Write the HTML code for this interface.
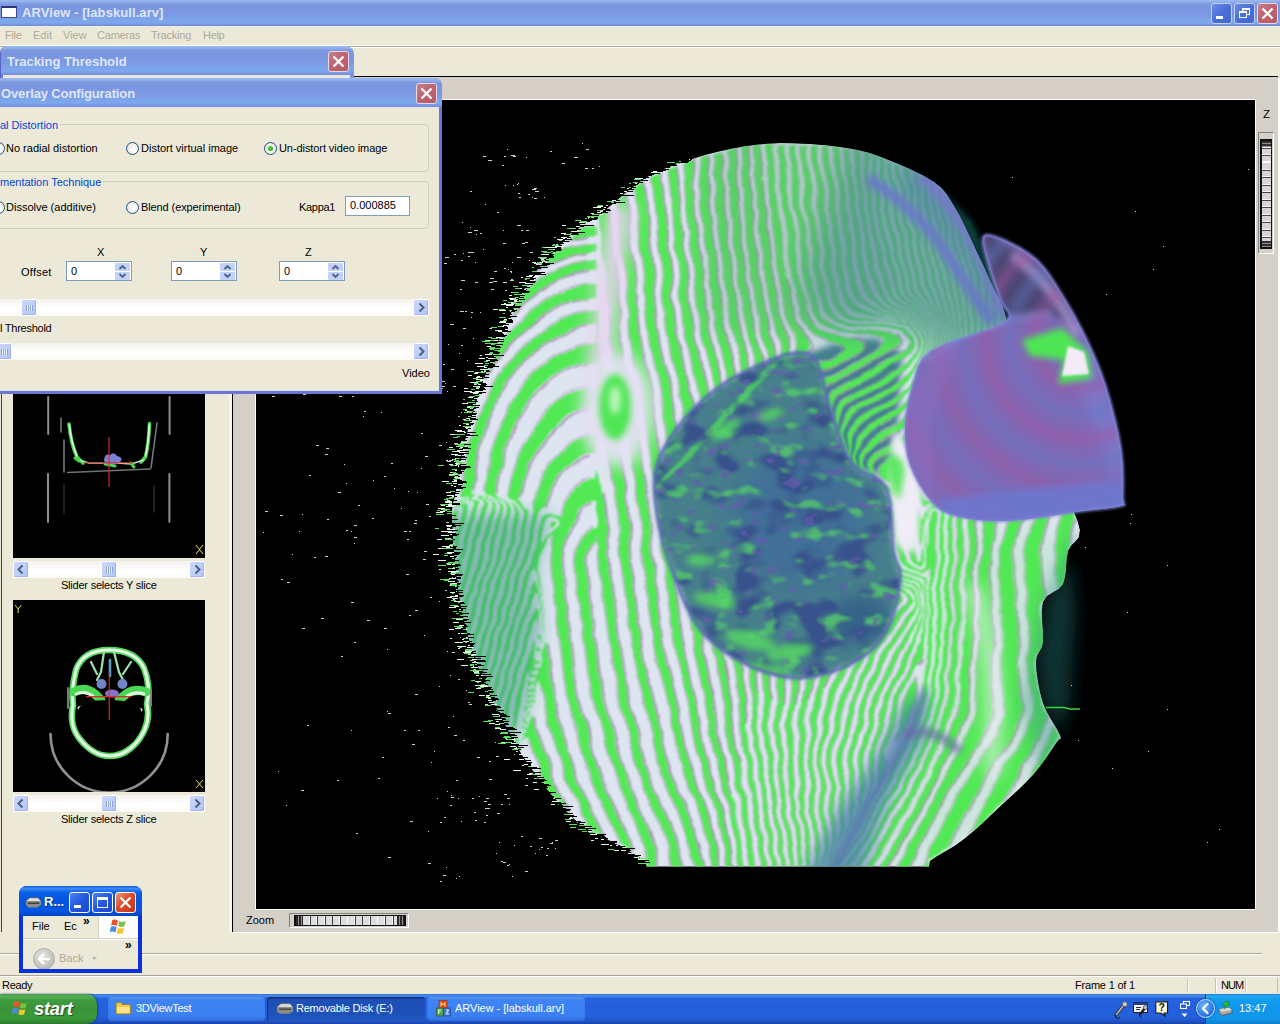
<!DOCTYPE html>
<html>
<head>
<meta charset="utf-8">
<title>ARView - [labskull.arv]</title>
<style>
*{box-sizing:border-box;margin:0;padding:0}
html,body{width:1280px;height:1024px;overflow:hidden;background:#ece9d8}
body{position:relative;font-family:"Liberation Sans",sans-serif;font-size:11px;color:#000}
.a{position:absolute}
.t{position:absolute;white-space:nowrap;line-height:13px;font-size:11px}
/* inactive XP title bars */
.ititle{background:linear-gradient(180deg,#9bb9f0 0%,#90aeea 8%,#7f9be0 14%,#7a96df 24%,#7b98e2 55%,#7ca2e8 72%,#7da9ec 84%,#7c9fe9 91%,#7788dc 100%)}
.ttl{position:absolute;white-space:nowrap;font-weight:bold;font-size:13px;line-height:16px;color:#dfe7f8}
.xbtn{position:absolute;width:21px;height:21px;border:1px solid #e8d8e4;border-radius:3px;background:linear-gradient(135deg,#c8808c 0%,#bd6470 45%,#b45c68 100%)}
.bbtn{position:absolute;width:21px;height:21px;border:1px solid #c3d0f2;border-radius:3px;background:linear-gradient(135deg,#6c8ce6 0%,#4a6ed8 50%,#4468d0 100%)}
.sb{position:absolute;height:17px;background:linear-gradient(180deg,#f3f1ec 0%,#fdfdfb 45%,#ffffff 60%,#fbfaf6 100%)}
.sbtn{position:absolute;width:16px;height:17px;border:1px solid #fff;border-radius:2px;background:linear-gradient(135deg,#cad8fa 0%,#bccdf8 60%,#b2c4f2 100%);box-shadow:inset -1px -1px 0 #9fb3e8}
.grp{position:absolute;border:1px solid #d0d0bf;border-radius:4px}
.radio{position:absolute;width:13px;height:13px;border-radius:50%;border:1px solid #1c5180;background:radial-gradient(circle at 65% 65%,#ffffff 0%,#f3f3ee 45%,#dcdcd4 100%)}
.edit{position:absolute;border:1px solid #7f9db9;background:#fff}
.spn{position:absolute;width:15px;height:8px;background:#c3d2f8;border-radius:1px}
</style>
</head>
<body>

<!-- ===== main title bar ===== -->
<div class="a ititle" style="left:0;top:0;width:1280px;height:26px"></div>
<div class="a" style="left:1px;top:6px;width:16px;height:12px;background:#fff;border:1px solid #3c4c8c;border-top:2px solid #28387c"></div>
<div class="ttl" style="left:22px;top:5px;letter-spacing:0.08px">ARView - [labskull.arv]</div>
<div class="bbtn" style="left:1211px;top:3px"><div class="a" style="left:4px;top:12px;width:7px;height:3px;background:#fff"></div></div>
<div class="bbtn" style="left:1234px;top:3px">
  <div class="a" style="left:7px;top:4px;width:8px;height:7px;border:1px solid #fff;border-top:2px solid #fff"></div>
  <div class="a" style="left:4px;top:7px;width:8px;height:7px;border:1px solid #fff;border-top:2px solid #fff;background:#4a6ed8"></div>
</div>
<div class="xbtn" style="left:1257px;top:3px">
  <svg class="a" style="left:0;top:0" width="19" height="19" viewBox="0 0 19 19"><path d="M4.5 4.5 L14.5 14.5 M14.5 4.5 L4.5 14.5" stroke="#fff" stroke-width="2.3" fill="none"/></svg>
</div>

<!-- ===== menu bar ===== -->
<div class="a" style="left:0;top:26px;width:1280px;height:20px;background:#ece9d8"></div><div class="a" style="left:0;top:26px;width:1280px;height:1px;background:#e9f0dc"></div>
<div class="t" style="left:5px;top:29px;color:#aca899;letter-spacing:-0.3px">File</div>
<div class="t" style="left:33px;top:29px;color:#aca899">Edit</div>
<div class="t" style="left:63px;top:29px;color:#aca899">View</div>
<div class="t" style="left:97px;top:29px;color:#aca899;letter-spacing:-0.2px">Cameras</div>
<div class="t" style="left:151px;top:29px;color:#aca899;letter-spacing:-0.2px">Tracking</div>
<div class="t" style="left:203px;top:29px;color:#aca899;letter-spacing:-0.3px">Help</div>
<div class="a" style="left:0;top:45px;width:1280px;height:1px;background:#fbfaf4"></div><div class="a" style="left:0;top:46px;width:1280px;height:1px;background:#aca899"></div>
<div class="a" style="left:0;top:47px;width:1280px;height:1px;background:#fff"></div>

<!-- toolbar band + MDI frame -->
<div class="a" style="left:0;top:76px;width:1278px;height:1px;background:#000"></div>
<div class="a" id="mdi" style="left:233px;top:77px;width:1047px;height:855px;background:#d4d0c8"></div>
<div class="a" style="left:1px;top:78px;width:1px;height:854px;background:#404040"></div>
<div class="a" style="left:229px;top:78px;width:3px;height:854px;background:#f7f5ec"></div><div class="a" style="left:232px;top:77px;width:1px;height:855px;background:#000"></div><div class="a" style="left:255px;top:99px;width:1001px;height:811px;background:#fff"></div>

<!-- SKULL-CANVAS-PLACEHOLDER -->
<svg class="a" style="left:256px;top:100px" width="999" height="809" viewBox="256 100 999 809">
<defs>
<clipPath id="cSk0"><rect x="257" y="100" width="998" height="766.5"/></clipPath>
<clipPath id="cSk" clip-path="url(#cSk0)"><path d="M780.0,143.0 794.7,143.2 810.6,144.0 826.1,145.3 840.0,147.0 851.3,148.7 860.9,150.7 870.4,153.3 881.0,157.0 894.2,162.2 908.8,168.5 922.7,175.3 934.0,182.0 941.5,188.1 946.6,194.2 950.6,200.6 955.0,208.0 959.9,216.6 964.7,226.2 969.4,236.1 974.0,246.0 978.7,255.9 983.4,266.1 987.9,275.9 992.0,285.0 995.7,292.6 999.0,299.1 1002.1,305.8 1005.0,314.0 1006.9,322.6 1008.0,331.3 1010.1,342.9 1015.0,360.0 1024.4,386.4 1036.9,419.8 1049.7,453.2 1060.0,480.0 1067.5,498.1 1073.6,511.2 1077.8,521.2 1080.0,530.0 1079.1,537.0 1075.6,541.6 1071.3,545.6 1068.0,551.0 1066.6,558.8 1066.0,567.7 1065.1,576.5 1063.0,584.0 1058.6,589.0 1052.7,592.6 1046.9,596.3 1043.0,602.0 1041.8,610.9 1042.2,621.9 1043.0,632.9 1043.0,642.0 1041.4,647.9 1039.1,651.9 1036.9,656.0 1036.0,662.0 1036.5,671.0 1038.0,681.8 1040.2,692.9 1043.0,703.0 1047.0,712.2 1052.1,721.1 1056.9,729.0 1060.0,735.0 1061.1,737.9 1061.1,738.4 1059.7,739.0 1057.0,742.0 1052.6,748.5 1046.6,757.2 1039.8,766.5 1033.0,775.0 1026.4,782.1 1019.6,788.8 1012.2,795.5 1004.0,803.0 994.4,812.0 983.8,821.9 973.0,831.7 963.0,840.0 953.9,846.4 945.2,851.6 937.1,856.3 930.0,861.0 929.2,866.3 932.9,871.8 930.2,876.6 910.0,880.0 860.4,881.8 790.3,882.4 720.0,881.8 670.0,880.0 648.7,876.5 644.3,871.6 646.5,866.1 645.0,861.0 638.3,856.8 631.5,852.8 624.2,848.7 616.0,844.0 606.7,839.2 596.5,834.2 585.8,828.2 575.0,820.0 563.7,808.7 551.8,795.1 540.2,780.7 530.0,767.0 521.5,754.4 514.2,742.0 507.5,729.6 501.0,717.0 494.5,704.2 488.2,691.2 482.4,678.0 477.0,664.0 472.0,649.6 467.5,634.8 463.5,619.1 460.0,602.0 457.1,581.7 454.7,559.0 452.9,537.3 452.0,520.0 452.0,509.3 452.9,503.0 454.4,497.7 456.0,490.0 457.7,479.0 459.8,466.4 462.1,453.2 465.0,440.0 468.4,427.0 472.3,413.7 476.6,400.3 481.0,387.0 485.7,373.5 490.7,359.8 495.8,346.4 501.0,334.0 506.2,322.6 511.5,312.0 516.8,302.1 522.0,293.0 526.8,285.0 531.2,278.0 536.1,271.2 542.0,264.0 549.4,255.7 557.9,246.9 566.7,238.4 575.0,231.0 582.2,225.4 589.0,221.0 596.0,216.6 604.0,211.0 613.4,203.3 623.8,194.3 634.5,185.4 645.0,178.0 655.2,172.5 665.3,168.2 675.5,164.5 686.0,161.0 696.6,157.5 707.4,154.3 718.5,151.5 730.0,149.0 741.8,146.8 754.0,145.0 766.7,143.7Z"/></clipPath>
<clipPath id="cSo"><path d="M657.6,463.0 662.1,452.2 668.3,441.1 675.8,430.1 684.1,419.7 692.8,410.0 702.1,401.1 712.1,392.6 722.8,384.8 734.0,377.8 745.5,371.7 758.2,365.7 772.1,359.6 786.0,354.8 798.7,352.5 808.8,354.0 815.7,360.5 820.3,371.2 823.6,384.3 826.4,397.8 830.0,410.0 834.0,421.2 837.7,432.8 841.6,444.0 845.9,454.3 851.0,463.0 857.6,469.1 865.3,473.1 873.3,476.4 880.6,480.7 886.0,487.7 889.2,498.5 890.8,511.9 891.5,526.4 892.0,540.0 893.0,551.0 894.7,558.5 896.8,563.5 898.7,567.7 899.9,572.4 900.0,579.0 898.9,588.3 896.9,599.4 894.1,611.1 890.5,622.4 886.0,632.0 880.6,640.0 874.4,647.0 867.3,653.2 859.5,658.7 851.0,663.6 841.5,668.0 831.1,671.9 820.0,674.9 808.9,677.0 798.0,677.7 787.4,677.0 776.6,675.1 766.0,672.1 755.6,668.2 745.5,663.6 735.6,658.3 725.9,652.2 716.5,645.3 707.7,637.4 699.8,628.4 692.8,617.9 686.6,605.9 681.1,593.2 676.1,580.5 671.7,568.6 667.8,557.6 664.4,547.1 661.6,536.7 659.3,526.4 657.6,516.0 656.1,505.4 654.9,494.8 654.4,484.2 655.1,473.6Z"/></clipPath>
<clipPath id="cPu"><path d="M983.0,237.0 986.0,234.8 991.0,235.2 997.2,237.2 1004.0,240.0 1011.6,243.5 1020.3,248.1 1029.1,253.7 1037.0,260.0 1043.6,267.1 1049.5,274.9 1055.1,283.6 1061.0,293.0 1067.3,303.3 1073.8,314.5 1080.1,326.2 1086.0,338.0 1091.5,349.7 1096.6,361.4 1101.5,373.7 1106.0,387.0 1110.4,401.9 1114.6,418.0 1118.3,434.1 1121.0,449.0 1122.5,463.1 1123.1,476.9 1123.1,488.9 1123.0,498.0 1123.6,503.0 1124.5,504.8 1124.1,505.2 1121.0,506.0 1114.9,507.3 1106.6,508.4 1096.0,509.5 1083.0,511.0 1066.1,513.5 1045.8,516.6 1025.1,519.4 1007.0,521.0 991.9,521.0 978.3,520.1 966.3,518.3 956.0,516.0 947.8,513.4 941.6,510.4 936.4,506.5 931.0,501.0 925.1,493.5 919.2,484.4 914.0,474.6 910.0,465.0 907.3,455.8 905.7,446.4 905.0,436.9 905.0,427.0 905.9,416.4 907.6,405.2 910.0,394.2 913.0,384.0 915.5,375.0 917.9,366.6 922.3,358.7 931.0,351.0 947.4,343.3 969.4,335.8 990.7,328.7 1005.0,322.0 1009.4,316.2 1007.8,311.1 1003.5,305.9 1000.0,300.0 997.8,293.1 995.1,285.7 992.4,277.9 990.0,270.0 987.4,261.1 984.6,251.4 982.7,242.8Z"/></clipPath>
<filter id="b1" filterUnits="userSpaceOnUse" x="256" y="100" width="999" height="809"><feGaussianBlur stdDeviation="0.9"/></filter>
<filter id="b3" filterUnits="userSpaceOnUse" x="256" y="100" width="999" height="809"><feGaussianBlur stdDeviation="3"/></filter>
<filter id="b8" filterUnits="userSpaceOnUse" x="256" y="100" width="999" height="809"><feGaussianBlur stdDeviation="8"/></filter>
<filter id="b16" filterUnits="userSpaceOnUse" x="256" y="100" width="999" height="809"><feGaussianBlur stdDeviation="16"/></filter>
<filter id="mG" filterUnits="userSpaceOnUse" x="640" y="340" width="280" height="350" color-interpolation-filters="sRGB"><feTurbulence type="fractalNoise" baseFrequency="0.045 0.07" numOctaves="2" seed="11"/><feColorMatrix type="matrix" values="0 0 0 0 0.33  0 0 0 0 0.80  0 0 0 0 0.42  6 0 0 0 -3.55"/><feGaussianBlur stdDeviation="0.8"/></filter>
<filter id="mB" filterUnits="userSpaceOnUse" x="640" y="340" width="280" height="350" color-interpolation-filters="sRGB"><feTurbulence type="fractalNoise" baseFrequency="0.03 0.04" numOctaves="2" seed="5"/><feColorMatrix type="matrix" values="0 0 0 0 0.22  0 0 0 0 0.32  0 0 0 0 0.55  0 6 0 0 -3.0"/><feGaussianBlur stdDeviation="1.2"/></filter>
<filter id="mP" filterUnits="userSpaceOnUse" x="640" y="340" width="280" height="350" color-interpolation-filters="sRGB"><feTurbulence type="fractalNoise" baseFrequency="0.06 0.09" numOctaves="2" seed="23"/><feColorMatrix type="matrix" values="0 0 0 0 0.40  0 0 0 0 0.36  0 0 0 0 0.68  0 0 8 0 -5.0"/><feGaussianBlur stdDeviation="0.7"/></filter>
<filter id="wob" filterUnits="userSpaceOnUse" x="440" y="130" width="700" height="750" color-interpolation-filters="sRGB"><feTurbulence type="fractalNoise" baseFrequency="0.022 0.035" numOctaves="2" seed="4" result="t"/><feDisplacementMap in="SourceGraphic" in2="t" scale="9" xChannelSelector="R" yChannelSelector="G"/><feGaussianBlur stdDeviation="1.3"/></filter>
</defs>
<rect x="256" y="100" width="999" height="809" fill="#000"/>
<path filter="url(#b3)" fill="#0f4542" d="M930,178 L972,222 L990,262 L1008,312 L1000,316 L975,250 L950,205Z"/>
<path filter="url(#b8)" fill="#0a3330" d="M1045,600 L1070,560 L1076,610 L1070,700 L1060,735 L1043,703 L1036,662Z"/>
<g clip-path="url(#cSk)">
<path d="M780.0,143.0 794.7,143.2 810.6,144.0 826.1,145.3 840.0,147.0 851.3,148.7 860.9,150.7 870.4,153.3 881.0,157.0 894.2,162.2 908.8,168.5 922.7,175.3 934.0,182.0 941.5,188.1 946.6,194.2 950.6,200.6 955.0,208.0 959.9,216.6 964.7,226.2 969.4,236.1 974.0,246.0 978.7,255.9 983.4,266.1 987.9,275.9 992.0,285.0 995.7,292.6 999.0,299.1 1002.1,305.8 1005.0,314.0 1006.9,322.6 1008.0,331.3 1010.1,342.9 1015.0,360.0 1024.4,386.4 1036.9,419.8 1049.7,453.2 1060.0,480.0 1067.5,498.1 1073.6,511.2 1077.8,521.2 1080.0,530.0 1079.1,537.0 1075.6,541.6 1071.3,545.6 1068.0,551.0 1066.6,558.8 1066.0,567.7 1065.1,576.5 1063.0,584.0 1058.6,589.0 1052.7,592.6 1046.9,596.3 1043.0,602.0 1041.8,610.9 1042.2,621.9 1043.0,632.9 1043.0,642.0 1041.4,647.9 1039.1,651.9 1036.9,656.0 1036.0,662.0 1036.5,671.0 1038.0,681.8 1040.2,692.9 1043.0,703.0 1047.0,712.2 1052.1,721.1 1056.9,729.0 1060.0,735.0 1061.1,737.9 1061.1,738.4 1059.7,739.0 1057.0,742.0 1052.6,748.5 1046.6,757.2 1039.8,766.5 1033.0,775.0 1026.4,782.1 1019.6,788.8 1012.2,795.5 1004.0,803.0 994.4,812.0 983.8,821.9 973.0,831.7 963.0,840.0 953.9,846.4 945.2,851.6 937.1,856.3 930.0,861.0 929.2,866.3 932.9,871.8 930.2,876.6 910.0,880.0 860.4,881.8 790.3,882.4 720.0,881.8 670.0,880.0 648.7,876.5 644.3,871.6 646.5,866.1 645.0,861.0 638.3,856.8 631.5,852.8 624.2,848.7 616.0,844.0 606.7,839.2 596.5,834.2 585.8,828.2 575.0,820.0 563.7,808.7 551.8,795.1 540.2,780.7 530.0,767.0 521.5,754.4 514.2,742.0 507.5,729.6 501.0,717.0 494.5,704.2 488.2,691.2 482.4,678.0 477.0,664.0 472.0,649.6 467.5,634.8 463.5,619.1 460.0,602.0 457.1,581.7 454.7,559.0 452.9,537.3 452.0,520.0 452.0,509.3 452.9,503.0 454.4,497.7 456.0,490.0 457.7,479.0 459.8,466.4 462.1,453.2 465.0,440.0 468.4,427.0 472.3,413.7 476.6,400.3 481.0,387.0 485.7,373.5 490.7,359.8 495.8,346.4 501.0,334.0 506.2,322.6 511.5,312.0 516.8,302.1 522.0,293.0 526.8,285.0 531.2,278.0 536.1,271.2 542.0,264.0 549.4,255.7 557.9,246.9 566.7,238.4 575.0,231.0 582.2,225.4 589.0,221.0 596.0,216.6 604.0,211.0 613.4,203.3 623.8,194.3 634.5,185.4 645.0,178.0 655.2,172.5 665.3,168.2 675.5,164.5 686.0,161.0 696.6,157.5 707.4,154.3 718.5,151.5 730.0,149.0 741.8,146.8 754.0,145.0 766.7,143.7Z" fill="#dde6f0"/>
<path filter="url(#b3)" fill="#41808c" d="M806,354 L838,342 L875,338 L902,352 L899,400 L897,440 L892,476 L851,468 L830,415Z"/>
<g filter="url(#wob)">
<path fill="#52e955" d="M758.0,146.0 759.7,144.5 763.6,200.0 769.3,242.0 774.1,287.0 777.2,305.0 786.9,345.5 789.3,378.5 800.2,444.5 804.4,506.0 813.5,561.5 816.3,566.0 822.5,570.9 831.5,575.4 848.0,581.9 861.5,588.2 871.8,594.5 875.7,599.0 875.6,600.5 865.3,612.5 856.7,624.5 838.4,656.0 832.4,668.0 826.7,681.5 822.1,695.0 818.9,707.0 814.7,731.0 813.4,753.5 813.4,777.5 814.4,803.0 819.7,852.5 818.5,860.0 816.9,864.5 815.7,866.0 815.7,867.5 814.2,869.0 815.6,870.5 815.0,871.3 813.5,870.4 812.8,869.0 815.4,861.5 815.7,855.5 810.2,804.5 808.6,764.0 809.4,732.5 810.5,722.0 813.1,707.0 816.5,693.5 820.8,680.0 825.5,668.0 831.2,656.0 838.8,642.5 852.3,621.5 861.3,609.5 869.1,600.5 869.2,599.0 865.4,594.5 855.5,588.4 845.0,583.5 827.0,576.9 816.9,572.0 811.1,567.5 808.7,564.5 807.3,561.5 798.3,506.0 795.6,459.5 793.1,435.5 784.8,384.5 780.0,345.5 771.4,309.5 768.3,293.0 762.9,245.0 757.8,207.5 753.5,146.0 758.0,146.0Z M766.2,144.5 772.3,144.5 775.9,197.0 782.2,243.5 786.2,281.0 790.5,305.0 793.7,317.0 797.7,327.5 801.5,334.3 809.4,344.0 811.1,347.0 810.7,350.0 804.5,357.6 801.5,363.9 800.1,371.0 800.0,380.0 802.5,398.0 810.7,440.0 817.1,506.0 826.5,561.5 829.8,566.0 834.5,569.4 878.0,589.9 885.2,594.5 889.1,599.0 889.0,600.5 878.7,612.5 870.0,624.5 854.8,650.0 845.9,668.0 838.6,684.5 834.2,696.5 829.8,711.5 826.9,725.0 825.1,737.0 823.7,755.0 823.2,773.0 823.7,803.0 827.9,845.0 827.2,849.5 824.4,857.0 823.2,858.5 824.5,860.0 824.0,860.8 822.5,859.6 821.7,860.0 821.8,861.5 821.0,862.1 820.3,861.5 823.0,855.5 824.1,848.0 819.3,801.5 818.8,762.5 820.4,734.0 823.9,713.0 828.0,698.0 832.7,684.5 838.4,671.0 846.5,654.7 855.4,638.0 862.8,626.0 872.0,613.1 882.7,600.5 882.8,599.0 878.9,594.5 869.0,588.4 830.0,570.7 823.6,566.0 820.5,561.5 811.0,504.5 806.3,443.0 795.2,381.5 794.5,368.0 795.9,351.5 795.7,345.5 794.3,339.5 786.1,314.0 783.0,300.5 779.9,282.5 776.0,246.7 769.6,198.5 766.2,144.5Z M778.5,144.5 784.4,144.5 787.5,192.5 794.1,240.5 798.1,276.5 802.4,300.5 806.9,315.5 809.2,320.0 812.5,324.5 816.5,328.1 821.0,330.8 828.5,333.7 834.5,335.3 856.4,339.5 860.4,341.0 862.6,342.5 863.6,344.0 863.1,347.0 860.8,350.0 850.9,357.5 839.0,363.7 822.5,369.2 816.5,372.2 812.6,377.0 811.0,383.0 810.8,390.5 811.6,399.5 818.2,434.0 828.1,498.5 838.6,560.0 841.1,564.5 848.0,569.6 858.5,575.1 891.1,590.0 898.2,594.5 902.1,599.0 901.9,600.5 892.8,611.0 881.8,626.0 865.5,653.0 857.9,668.0 851.8,681.5 846.1,696.5 841.4,711.5 838.4,723.5 835.6,740.0 834.0,755.0 832.9,774.5 833.1,800.0 836.3,836.0 835.0,842.0 830.0,851.7 829.2,851.0 829.5,849.5 831.9,843.5 832.4,839.0 828.5,798.5 828.5,769.7 831.0,737.0 832.9,725.0 835.7,713.0 840.1,698.0 844.5,686.0 852.3,668.0 859.8,653.0 874.8,627.5 885.5,612.6 895.8,600.5 895.9,599.0 892.0,594.5 884.0,589.4 852.5,575.0 841.0,569.0 835.2,564.5 832.8,560.0 823.5,504.5 815.3,438.5 807.0,396.5 805.9,387.5 805.7,380.0 807.5,371.0 809.2,368.0 812.0,365.3 816.5,362.9 829.8,359.0 836.0,356.2 840.7,353.0 843.3,350.0 843.8,348.5 843.6,347.0 842.5,345.5 840.2,344.0 819.5,336.9 810.9,332.0 807.5,328.8 804.3,324.5 799.6,314.0 795.4,297.5 792.4,281.0 787.0,234.5 782.7,204.5 780.4,180.5 778.5,144.5Z M790.4,144.5 796.1,144.5 798.5,184.9 804.9,231.5 809.9,275.0 814.6,299.0 817.3,308.0 820.0,314.0 823.3,318.5 826.7,321.5 830.0,323.6 836.0,326.1 843.5,328.0 852.5,329.2 881.0,331.6 890.0,333.3 897.5,336.5 899.0,338.0 900.1,341.0 899.0,343.9 897.6,345.5 888.9,351.5 854.0,371.2 831.5,381.3 827.0,383.9 822.7,389.0 820.8,396.5 820.7,404.0 822.0,416.0 829.5,462.5 832.5,476.0 842.3,512.0 846.8,534.5 851.2,561.5 854.9,566.0 863.0,571.2 897.5,586.9 906.3,591.5 911.0,594.9 913.7,599.0 913.6,600.5 912.5,602.3 894.0,626.0 879.1,650.0 865.4,677.0 859.7,690.5 854.9,704.0 850.6,719.0 847.6,732.5 844.7,752.0 843.3,767.0 842.6,794.0 844.8,827.0 842.6,834.5 837.5,844.0 836.7,843.5 837.0,842.0 839.3,837.5 840.9,830.0 838.0,795.5 838.0,780.5 838.9,762.5 842.0,735.7 844.7,722.0 847.9,710.0 856.7,684.5 864.1,668.0 871.9,653.0 888.2,626.0 897.0,614.0 908.5,600.5 908.6,599.0 904.7,594.5 897.5,589.9 866.0,575.5 854.0,569.3 847.7,564.5 845.1,560.0 839.5,525.5 826.7,464.0 817.6,410.0 816.2,398.0 816.4,389.0 818.3,383.0 822.5,378.3 827.9,375.5 846.5,368.2 863.0,359.1 872.7,353.0 880.6,347.0 883.3,344.0 883.9,341.0 883.1,339.5 881.1,338.0 875.0,336.0 839.0,331.1 828.5,328.2 824.0,326.0 819.5,322.7 815.8,318.5 813.2,314.0 808.4,299.0 803.8,275.0 799.0,233.0 793.3,192.5 790.4,144.5Z M801.8,144.5 807.3,144.5 810.0,186.5 816.6,233.0 820.8,269.0 825.2,293.0 828.2,303.5 831.0,309.5 834.5,314.0 838.2,317.0 842.0,319.1 849.5,321.6 860.0,323.4 890.0,325.8 902.0,328.6 908.0,331.4 912.5,334.9 914.6,338.0 915.5,342.5 914.5,347.0 912.9,350.0 909.5,354.0 905.0,357.6 837.5,393.9 834.5,396.5 832.3,399.5 829.8,407.0 829.5,419.0 831.0,435.5 835.5,464.0 839.9,479.0 851.1,506.0 854.2,515.0 858.6,534.5 862.9,561.5 867.5,566.6 876.5,572.1 912.5,588.4 916.1,591.5 919.0,599.0 917.2,606.5 914.1,614.0 896.9,639.5 881.8,666.5 872.9,686.0 865.4,707.0 858.2,734.0 853.8,764.0 852.6,785.0 853.5,810.5 852.8,819.5 849.7,828.5 845.0,836.6 844.2,836.0 844.5,834.5 848.3,827.0 849.6,819.5 847.8,789.5 849.4,759.5 853.7,731.0 859.6,708.5 868.8,683.0 879.5,660.5 894.2,635.0 914.0,607.0 915.7,603.5 916.7,599.0 915.1,594.5 911.0,590.7 903.5,586.7 869.0,571.0 861.2,566.0 857.5,561.5 852.9,533.0 849.8,518.0 845.5,503.0 837.0,479.0 832.7,462.5 826.7,423.5 825.5,410.0 825.7,402.5 827.7,395.0 830.0,391.6 833.0,389.0 855.5,377.8 901.5,353.0 905.7,350.0 908.5,347.0 910.0,344.0 910.3,341.0 909.3,338.0 906.5,334.8 901.7,332.0 896.0,330.0 887.0,328.3 857.0,326.1 848.0,324.8 840.8,323.0 831.7,318.5 828.4,315.5 825.3,311.0 822.1,303.5 819.2,293.0 814.9,269.0 810.7,233.0 804.3,186.5 801.8,144.5Z M812.8,144.5 815.0,144.5 816.5,146.0 818.2,146.0 820.5,182.0 827.2,228.5 831.4,264.5 835.9,288.5 838.8,299.0 841.5,305.0 846.6,311.0 849.5,313.0 855.5,315.8 870.5,318.9 891.5,321.1 899.0,322.6 908.0,325.6 914.0,329.0 918.9,333.5 921.8,339.5 922.1,342.5 921.7,347.0 918.7,354.5 914.0,361.3 908.0,367.9 897.5,375.7 846.5,403.8 842.8,407.0 840.5,410.0 838.5,414.5 837.1,420.5 836.7,429.5 837.1,441.5 838.5,453.5 841.4,467.0 847.5,483.5 861.8,509.0 866.4,519.5 869.4,531.5 874.3,561.5 878.1,566.0 885.5,570.8 914.0,583.7 916.6,585.5 919.1,588.5 920.5,591.5 921.0,596.0 922.1,597.5 922.2,599.0 922.0,602.0 920.9,603.5 920.5,609.5 917.5,621.5 912.6,632.0 900.0,653.0 889.9,672.5 882.2,690.5 876.1,708.5 870.0,731.0 865.6,755.0 863.9,770.0 863.0,793.4 861.8,803.0 858.8,815.0 855.7,824.0 850.3,833.0 850.3,834.5 848.0,836.8 847.3,836.0 850.2,831.5 854.6,822.5 857.3,812.0 858.4,801.5 858.4,777.5 860.0,759.5 864.1,734.0 870.4,710.0 877.6,689.0 886.8,668.0 897.3,648.5 915.7,618.5 919.0,608.0 919.4,603.5 920.7,600.5 920.7,599.0 920.6,597.5 919.5,596.0 919.2,593.0 917.7,590.0 914.0,586.3 879.7,570.5 872.8,566.0 869.0,561.5 863.8,530.0 860.4,516.5 856.1,506.0 844.9,483.5 838.6,465.5 835.7,450.5 834.2,437.0 833.5,422.0 834.1,413.0 836.6,405.5 839.0,402.1 842.0,399.4 899.0,368.5 908.0,362.2 912.5,357.7 916.1,353.0 918.9,347.0 919.4,342.5 918.6,338.0 915.7,333.5 912.2,330.5 906.5,327.3 896.0,324.0 885.5,322.5 861.5,320.4 852.5,318.5 846.5,316.2 842.7,314.0 839.0,310.7 836.0,306.4 834.0,302.0 831.2,293.0 826.4,269.0 814.9,180.5 812.8,144.5Z M746.0,147.5 746.9,146.6 751.1,204.5 756.9,248.0 761.0,288.5 763.8,306.5 773.6,350.0 780.2,398.0 786.6,438.5 788.6,458.0 790.4,495.5 791.8,510.5 800.1,561.5 803.2,567.5 806.1,570.5 810.5,573.7 821.0,578.6 840.5,585.2 848.0,588.3 858.0,594.5 861.9,599.0 861.7,600.5 853.9,609.5 835.5,633.5 825.1,650.0 818.8,663.5 814.4,675.5 810.1,690.5 807.0,704.0 803.7,726.5 803.0,750.5 803.9,782.0 805.3,804.5 811.1,858.5 811.0,866.0 808.8,876.5 806.8,876.5 807.3,867.5 806.8,855.5 801.2,807.5 798.3,759.5 798.2,729.5 801.4,702.5 804.4,687.5 809.0,669.6 813.5,656.1 818.0,645.9 822.5,638.1 828.0,630.5 855.1,600.5 855.2,599.0 851.4,594.5 843.5,589.7 813.5,579.8 804.5,575.4 800.0,572.0 797.3,569.0 795.4,566.0 793.6,561.5 785.7,512.0 784.4,497.0 782.7,461.0 780.9,443.0 767.8,354.5 758.8,315.5 755.6,299.0 749.7,246.5 745.2,213.5 740.3,147.5 746.0,147.5Z M823.5,146.0 828.6,146.0 831.0,180.5 837.8,227.0 841.7,260.0 846.1,284.0 849.0,294.5 851.6,300.5 856.2,306.5 860.6,309.5 864.5,311.3 875.0,314.2 897.5,318.0 911.0,322.7 918.5,327.4 921.8,330.5 924.9,335.0 926.4,339.5 926.4,347.0 923.4,356.0 915.7,369.5 909.5,378.0 903.5,384.4 897.5,389.1 858.5,411.0 851.0,416.5 847.6,420.5 844.8,426.5 843.3,434.0 842.9,441.5 843.2,450.5 844.7,461.0 847.6,471.5 850.7,479.0 859.6,494.0 874.0,513.5 878.2,522.5 881.0,534.5 885.3,561.5 889.2,566.0 894.5,569.6 915.3,579.5 920.0,582.5 923.6,587.0 923.6,593.0 923.0,595.6 922.0,590.0 920.7,587.0 918.4,584.0 915.5,581.9 897.5,573.9 888.5,569.1 882.5,564.7 880.2,561.5 875.3,531.5 872.0,519.5 867.6,510.5 852.1,486.5 847.7,477.5 844.9,470.0 841.6,456.5 840.0,437.0 840.5,428.2 842.0,420.8 844.1,416.0 848.0,411.3 857.0,405.1 897.5,382.8 905.0,377.1 911.0,370.8 917.5,362.0 921.8,354.5 923.6,350.0 924.8,342.5 923.9,338.0 921.9,333.5 919.3,330.5 915.5,327.3 909.5,323.9 902.0,321.1 896.0,319.6 870.5,316.0 862.0,314.0 857.9,312.5 852.6,309.5 849.4,306.5 846.3,302.0 841.6,288.5 836.9,264.5 832.0,224.0 825.4,177.5 823.5,146.0Z M833.8,147.5 838.7,147.5 841.4,180.5 846.8,216.5 852.3,260.0 856.7,282.5 861.1,296.0 865.2,302.0 872.0,306.9 879.5,309.8 905.0,316.5 912.5,319.6 917.0,322.3 921.5,325.5 924.9,329.0 928.0,333.5 929.6,338.0 929.7,341.0 929.4,350.0 928.4,351.5 928.0,354.5 927.0,356.0 926.3,359.0 915.6,380.0 906.5,394.1 902.0,399.1 896.0,404.0 867.5,419.9 858.5,426.0 855.0,429.5 852.1,434.0 849.5,443.0 848.9,450.5 849.3,458.0 852.0,470.0 855.0,477.5 859.3,485.0 864.5,492.1 883.4,512.0 886.4,516.5 888.5,521.2 891.5,533.4 896.0,561.5 899.0,565.2 905.0,569.5 920.0,576.9 923.0,577.0 925.2,578.0 926.7,581.0 927.1,584.0 927.4,599.0 926.5,621.5 923.7,645.5 921.7,656.0 920.0,661.3 917.0,660.7 912.0,669.5 904.4,687.5 897.3,708.5 891.0,731.0 886.6,752.0 885.3,762.5 885.5,763.9 887.0,764.3 888.0,765.5 885.8,773.0 875.4,797.0 860.4,828.5 839.0,856.1 837.5,853.4 839.0,854.0 844.2,848.0 844.6,846.5 854.6,834.5 860.3,825.5 871.0,801.5 876.9,786.5 877.7,783.5 877.8,777.5 882.3,750.5 888.5,722.0 894.2,702.5 900.1,686.0 921.5,639.3 925.0,617.0 925.2,611.0 925.3,587.0 924.2,582.5 923.0,580.8 899.3,569.0 894.9,566.0 891.9,563.0 890.6,560.0 885.9,530.0 882.7,519.5 878.4,512.0 859.7,489.5 852.0,476.0 847.7,462.5 846.3,453.5 846.1,444.5 847.0,437.0 848.0,432.4 850.7,426.5 856.2,420.5 866.0,414.2 894.5,398.4 900.5,394.0 906.5,388.0 914.5,377.0 923.7,360.5 928.2,348.5 928.3,342.5 928.2,338.0 926.2,333.5 923.0,329.3 917.0,323.9 905.0,318.2 893.0,314.9 875.0,311.3 867.5,308.6 863.8,306.5 860.2,303.5 856.1,297.5 852.0,285.5 847.5,263.0 842.2,221.0 835.9,177.5 833.8,147.5Z M729.5,150.5 731.0,149.0 733.5,149.0 735.1,164.0 738.1,209.0 743.6,251.0 748.2,296.0 751.5,315.5 761.3,359.0 768.1,408.5 773.3,441.5 775.7,464.0 778.6,513.5 786.5,563.0 788.9,569.0 792.0,573.5 795.5,576.8 800.0,579.8 810.5,584.1 836.6,591.5 842.9,594.5 845.0,596.0 847.5,599.0 847.3,600.5 843.5,604.0 820.3,623.0 814.9,629.0 810.9,635.0 806.9,644.0 803.6,654.5 796.3,690.5 792.3,723.5 792.1,747.5 795.2,795.5 801.7,852.5 803.2,876.5 799.2,876.5 797.4,851.0 790.9,795.5 787.1,744.5 786.8,729.5 787.7,713.0 794.0,659.0 796.1,644.0 798.1,635.0 800.7,627.5 804.4,621.5 807.5,618.1 812.0,614.6 834.5,602.5 837.8,600.5 838.0,599.0 834.2,596.0 830.0,594.2 803.0,587.6 794.0,583.9 789.5,580.7 785.7,576.5 782.3,570.5 780.2,564.5 772.4,516.5 769.3,464.0 767.2,444.5 761.9,411.5 755.2,363.5 744.3,315.5 740.9,294.5 737.1,257.0 730.6,204.5 728.5,167.0 726.8,150.5 729.5,150.5Z M843.8,149.0 848.4,149.0 850.6,176.0 857.2,219.5 861.3,252.5 865.6,276.5 870.1,291.5 874.8,299.0 881.0,303.8 891.5,308.3 906.5,313.5 918.5,319.5 926.2,326.0 929.6,330.5 929.8,332.0 929.0,332.4 928.2,330.5 924.1,326.0 920.0,322.3 915.5,319.3 906.5,315.1 884.0,308.3 875.0,304.2 869.0,299.0 865.4,293.0 861.3,279.5 856.7,255.5 851.4,213.5 846.0,177.5 843.8,149.0Z M853.2,149.7 854.0,150.5 857.6,150.5 859.6,173.0 866.3,216.5 871.6,257.0 874.8,273.5 879.2,288.5 882.4,294.5 887.0,299.5 894.5,304.2 917.0,315.1 920.0,317.6 921.5,318.1 926.8,323.0 929.7,326.0 929.0,327.0 923.0,320.9 914.0,315.0 891.5,305.5 884.8,302.0 879.4,297.5 874.8,290.0 870.4,275.0 866.8,257.0 861.8,218.0 855.3,174.5 853.2,149.7Z M716.0,153.5 717.5,152.0 719.8,152.0 721.6,168.5 724.7,213.5 730.1,255.5 734.7,302.0 738.1,321.5 747.8,365.0 754.5,413.0 759.8,446.0 762.2,468.5 765.0,518.0 772.3,564.5 776.1,578.0 779.0,584.0 782.0,588.3 786.5,592.5 791.0,595.3 801.5,599.0 801.7,600.5 795.5,602.4 792.5,604.2 790.3,606.5 787.7,611.0 785.6,618.5 784.5,630.5 783.9,672.5 780.7,723.5 780.7,737.0 781.7,753.5 787.4,812.0 792.7,852.5 794.5,876.5 790.5,876.5 788.5,852.5 783.1,812.0 776.0,743.0 775.4,722.0 777.0,669.5 776.3,654.5 773.6,620.0 773.7,600.5 769.9,587.0 767.0,573.4 759.5,527.3 757.8,510.5 756.1,474.5 754.6,458.0 747.4,411.5 742.3,374.0 738.9,356.0 730.7,321.5 727.4,302.0 723.5,263.0 716.8,207.5 714.7,171.5 712.8,153.5 716.0,153.5Z M862.3,152.0 864.5,152.0 866.6,153.5 868.6,173.0 873.9,206.0 880.5,255.5 885.0,276.5 888.3,287.0 892.5,294.5 897.0,299.0 903.5,303.6 920.0,313.5 928.0,320.0 927.5,321.3 920.0,315.1 899.0,303.7 892.1,299.0 886.6,293.0 883.6,287.0 879.3,272.0 876.0,255.5 870.7,215.0 864.3,173.0 862.3,152.0Z M871.0,154.0 872.0,155.0 875.1,155.1 876.3,167.0 882.7,207.5 888.3,249.5 892.5,270.5 896.8,285.5 899.7,291.5 904.4,297.5 925.3,314.0 932.7,321.5 932.0,322.3 923.0,313.7 908.0,303.7 900.2,297.5 895.3,291.5 892.5,285.5 888.2,270.5 883.8,248.0 878.5,207.5 873.0,173.0 871.0,154.0Z M704.0,156.5 705.6,155.0 707.7,173.0 710.8,218.0 716.3,261.5 721.2,311.0 724.2,327.5 734.1,372.5 747.5,463.8 751.2,524.0 762.1,599.0 763.7,623.0 768.6,665.0 769.4,686.0 769.0,726.5 769.9,743.0 778.6,816.5 783.6,852.5 785.7,876.5 781.6,876.5 779.4,852.5 765.3,747.5 763.9,728.0 763.6,689.0 762.8,671.0 757.4,627.5 754.0,590.0 744.5,524.9 741.8,477.5 740.3,461.0 733.5,419.0 727.1,374.0 716.0,324.4 712.7,303.5 708.8,263.0 703.5,221.0 700.4,174.5 698.6,158.0 699.5,158.0 701.0,156.5 704.0,156.5Z M879.4,156.5 881.0,158.0 882.5,158.0 883.5,159.0 897.1,252.5 901.4,272.0 904.8,284.0 907.3,290.0 911.0,295.7 915.2,300.5 934.1,318.5 935.8,321.5 935.0,322.0 932.5,318.5 927.5,313.5 913.4,302.0 907.4,296.0 903.3,290.0 900.2,282.5 895.8,266.0 892.6,249.5 879.4,156.5Z M690.5,161.0 691.2,160.3 692.6,171.5 696.2,221.0 701.6,264.5 706.5,315.5 709.5,332.0 719.1,375.5 732.7,465.5 734.1,480.5 736.7,528.5 744.6,582.5 748.8,624.5 755.4,672.5 756.7,692.0 757.4,728.0 758.7,744.5 773.5,846.5 776.7,876.5 772.5,876.5 769.1,846.5 753.5,742.6 752.2,726.5 751.2,693.5 750.0,677.0 742.9,630.5 737.6,582.5 730.4,534.5 728.9,518.0 727.1,480.5 725.3,464.0 718.6,423.5 712.1,378.5 701.7,332.0 698.1,309.5 694.1,267.5 688.7,224.0 685.9,182.0 683.7,162.5 684.5,162.5 686.0,161.0 690.5,161.0Z M887.7,160.2 888.5,161.0 890.0,161.0 891.8,162.5 897.8,200.0 904.4,248.0 907.5,263.0 912.1,281.0 914.7,288.5 917.8,294.5 922.1,300.5 935.5,315.5 939.6,321.5 940.2,323.0 939.5,324.0 937.2,320.0 932.4,314.0 915.2,296.0 912.3,291.5 909.1,284.0 904.5,267.5 900.2,246.5 894.8,206.0 887.7,160.2Z M895.9,163.9 897.5,164.0 899.0,165.5 899.9,165.5 905.4,198.5 912.1,246.5 915.2,261.5 921.0,284.0 923.7,291.5 926.8,297.5 938.5,314.0 943.1,321.5 943.3,323.0 942.5,323.8 941.7,321.5 938.7,317.0 922.5,296.0 919.4,290.0 916.7,282.5 912.0,264.5 907.7,243.5 902.2,203.0 895.9,163.9Z M672.5,167.0 674.0,165.5 676.0,165.5 677.3,174.5 681.1,225.5 686.4,269.0 691.6,323.0 694.3,338.0 704.0,381.7 709.7,422.0 717.5,469.7 719.0,486.5 721.7,534.5 729.5,589.6 733.7,627.5 742.2,678.5 743.7,695.0 745.4,729.5 746.8,743.0 764.2,849.5 767.4,876.5 763.0,876.5 759.8,851.0 752.4,804.5 741.5,743.6 736.4,681.5 726.5,625.8 721.3,582.5 714.7,537.5 711.8,488.0 709.7,468.5 702.4,425.0 696.8,386.0 685.8,336.5 683.0,319.2 678.7,273.5 673.3,230.0 670.2,185.0 668.2,168.3 669.5,167.0 672.5,167.0Z M904.1,167.0 905.0,167.0 906.5,168.5 908.1,168.6 912.8,197.0 919.7,245.0 928.4,282.5 931.6,293.0 934.2,299.0 945.9,320.0 947.6,324.5 947.8,326.0 947.0,327.3 946.3,324.5 941.6,315.5 930.3,297.5 927.0,290.0 924.3,281.0 918.3,257.0 915.4,242.0 909.8,201.5 904.1,167.0Z M912.5,171.5 914.0,171.5 915.5,173.0 916.4,173.0 927.1,243.5 937.6,288.5 941.9,302.0 950.2,321.5 952.1,327.5 952.6,332.0 953.5,333.5 953.7,356.0 952.4,366.5 951.3,392.0 952.4,429.5 953.9,447.5 957.2,468.5 961.6,489.5 964.0,494.0 966.5,496.0 969.6,497.0 966.5,498.1 957.5,503.5 954.5,503.9 953.7,504.5 957.5,505.8 961.9,509.0 963.0,512.0 963.2,515.0 958.1,651.5 953.7,704.0 952.5,710.0 923.7,776.0 886.1,848.0 862.9,876.5 856.4,876.5 880.0,848.0 883.0,843.5 919.2,773.0 946.8,708.5 947.9,702.5 953.0,641.0 958.0,515.0 957.8,512.0 956.7,509.0 954.5,507.0 949.1,504.5 953.0,503.6 962.0,498.4 965.6,497.0 960.5,494.3 958.4,491.0 952.8,464.0 949.8,440.0 948.6,395.0 949.7,374.0 952.2,357.5 952.2,333.5 951.1,332.0 950.7,327.5 949.6,326.0 949.1,323.0 939.0,302.0 936.0,294.5 928.8,267.5 922.6,239.0 917.2,200.0 912.5,171.5Z M657.5,173.0 659.0,171.5 660.0,171.5 662.2,189.5 665.2,231.5 670.5,275.0 675.3,327.5 678.3,344.0 687.6,386.0 694.4,432.5 701.2,473.0 702.9,489.5 704.6,527.0 705.8,542.0 711.8,584.0 716.9,626.0 728.1,684.5 729.9,699.5 732.2,729.5 734.6,747.5 746.1,804.5 753.8,849.5 757.4,876.5 752.7,876.5 749.3,852.5 741.8,809.0 728.0,742.3 722.5,690.5 711.2,635.0 699.2,551.0 697.3,531.5 695.3,492.5 692.9,471.5 686.0,431.7 679.4,387.5 670.3,347.0 667.2,330.5 662.2,278.0 657.0,236.0 653.9,192.5 651.8,174.5 653.0,174.5 654.5,173.0 657.5,173.0Z M920.7,175.2 921.5,176.0 923.0,176.0 924.7,177.5 934.7,243.5 946.7,296.0 956.5,330.5 957.9,345.5 957.0,368.0 957.2,384.5 959.8,434.0 961.6,450.5 969.3,489.5 970.5,492.5 971.8,494.0 977.8,497.0 975.5,498.1 971.0,501.8 968.0,503.5 964.2,504.5 968.0,505.5 974.6,509.0 975.6,510.5 976.2,513.5 973.1,573.5 972.1,644.0 967.2,707.0 965.7,714.5 962.9,722.0 935.5,780.5 916.8,815.0 896.8,854.0 879.2,876.5 871.1,876.5 889.6,854.0 893.4,848.0 929.0,778.8 956.3,716.0 958.2,710.0 959.2,704.0 964.2,644.0 969.3,513.5 968.8,510.5 966.2,507.5 958.9,504.5 963.5,503.0 973.8,497.0 971.0,496.1 968.0,494.0 966.1,491.0 960.3,464.0 957.2,443.0 955.7,422.0 954.4,386.0 956.1,347.0 955.1,332.0 951.9,320.0 943.9,297.5 933.0,252.5 928.7,230.0 920.7,175.2Z M642.5,180.5 643.4,179.6 644.8,191.0 648.2,236.0 653.5,281.0 658.2,333.5 661.4,351.5 670.1,390.5 676.6,434.0 684.5,481.3 686.1,498.5 688.6,546.5 699.0,626.0 702.1,644.0 713.0,692.4 718.0,734.0 720.0,746.0 735.5,812.0 743.0,852.5 746.6,876.5 741.4,876.5 737.5,851.0 730.0,812.0 714.4,749.0 711.5,732.6 706.3,693.5 696.3,651.5 692.0,628.9 681.2,551.0 679.8,534.5 677.9,498.5 676.0,480.5 668.8,440.0 662.3,396.5 651.5,347.3 648.5,326.8 644.8,284.0 639.4,239.0 635.2,186.3 639.5,182.0 641.0,182.0 642.5,180.5Z M929.0,180.5 930.5,180.5 932.0,182.0 932.8,182.0 940.8,236.0 950.4,278.0 960.7,330.5 962.1,347.0 963.0,375.5 967.6,441.5 970.7,461.0 976.8,489.5 978.0,492.5 981.9,495.5 981.5,496.1 978.5,496.1 975.8,494.0 973.7,491.0 966.1,455.0 963.3,431.0 960.2,378.5 959.5,336.5 957.8,326.0 952.8,306.5 937.8,239.0 929.0,180.5Z M937.2,185.7 938.0,186.5 939.5,186.5 941.0,188.0 948.1,236.0 957.7,278.0 960.9,296.0 966.8,341.0 971.3,392.0 973.7,431.0 976.6,453.5 984.2,489.5 985.5,492.5 987.5,494.5 989.6,495.5 983.9,498.5 982.6,501.5 981.0,503.0 976.5,504.5 978.5,505.2 983.0,505.4 984.5,506.3 990.0,507.5 994.0,509.0 995.9,510.5 996.6,512.0 996.5,516.5 990.3,551.0 988.7,572.0 989.0,587.0 992.2,626.0 992.0,642.5 990.0,675.5 992.5,713.0 991.2,720.5 987.6,729.5 980.3,741.5 959.0,773.4 939.4,806.0 928.5,827.0 914.0,859.3 910.4,866.0 902.8,876.5 890.2,876.5 900.6,863.0 904.4,857.0 924.1,816.5 963.5,743.0 973.1,722.0 974.8,716.0 975.8,708.5 976.5,680.0 979.7,636.5 979.2,588.5 979.6,570.5 981.0,552.5 985.1,513.5 984.4,510.5 983.1,509.0 975.5,505.6 970.2,504.5 974.0,503.4 977.0,501.5 980.0,498.2 983.0,496.3 985.8,495.5 983.3,494.0 981.1,491.0 975.1,464.0 972.2,447.5 970.5,432.5 963.8,335.0 954.9,281.0 943.8,231.5 937.2,185.7Z M624.5,194.0 626.2,192.5 630.2,242.0 635.5,287.0 640.2,341.0 643.2,357.5 651.8,396.5 658.6,441.5 666.5,487.9 668.0,504.5 670.6,554.0 682.0,641.0 685.4,657.5 695.0,695.0 703.6,746.0 707.9,762.5 717.5,794.0 723.6,818.0 729.5,846.5 734.7,876.5 728.9,876.5 722.7,842.0 716.4,813.5 710.6,792.5 701.0,762.4 696.5,745.6 688.4,699.5 678.5,660.9 674.0,638.6 662.8,557.0 659.6,506.0 657.7,488.0 649.9,444.5 643.2,401.0 633.3,356.0 630.3,336.5 626.6,291.5 621.0,245.0 617.6,200.9 624.5,194.0Z M945.7,194.2 947.0,195.5 947.0,197.0 949.8,199.8 955.7,237.5 963.7,272.0 966.8,288.5 977.3,383.0 979.9,422.0 982.7,447.5 991.5,489.5 992.8,492.5 995.0,494.5 997.3,495.5 995.0,496.5 993.0,498.5 995.5,503.0 990.5,505.2 984.5,505.2 984.1,504.5 988.1,503.0 988.7,501.5 988.5,498.5 990.5,496.7 993.6,495.5 990.8,494.0 988.4,491.0 979.6,449.0 976.9,425.0 974.4,386.0 965.4,302.0 961.0,275.0 951.1,231.5 945.7,194.2Z M608.0,209.0 611.2,249.5 616.8,297.5 620.6,345.5 623.7,363.5 632.5,404.0 639.1,447.5 647.0,492.1 648.8,510.5 650.4,546.5 651.7,563.0 662.8,650.0 666.0,665.0 675.5,702.2 683.9,746.0 688.3,761.0 701.0,794.6 707.0,813.2 714.5,843.3 721.1,876.5 714.4,876.5 707.4,842.0 700.4,815.0 694.3,797.0 683.0,768.3 678.5,754.5 674.0,735.6 668.5,705.5 659.0,668.6 654.5,646.5 643.3,564.5 640.1,513.5 638.4,497.0 630.2,452.0 623.4,408.5 613.7,363.5 610.5,342.5 606.9,297.5 601.4,251.0 598.7,215.3 600.5,213.5 602.0,213.5 606.5,209.0 608.0,209.0Z M954.8,209.3 956.0,210.5 956.0,212.0 957.5,213.5 957.5,215.0 959.2,216.7 963.2,239.0 972.9,282.5 975.6,303.5 979.5,345.5 983.5,377.0 988.4,438.5 991.5,456.5 997.6,485.0 999.1,491.0 1000.1,492.5 1002.5,494.6 1004.9,495.5 1002.5,497.0 1002.0,498.5 1004.0,500.1 1011.1,503.0 1011.7,504.5 1005.1,506.0 1013.0,507.0 1020.3,509.0 1022.7,510.5 1023.5,512.0 1022.9,516.5 1014.0,546.5 1012.5,555.5 1011.8,564.5 1012.6,576.5 1016.6,599.0 1017.8,609.5 1018.1,621.5 1016.8,662.0 1017.7,672.5 1021.5,696.5 1021.9,710.0 1020.0,720.5 1015.0,732.5 1009.4,741.5 984.5,776.5 975.4,791.0 963.3,813.5 947.8,849.5 947.0,849.5 945.5,851.0 944.0,851.0 941.0,854.0 939.5,854.0 938.0,855.5 936.5,855.5 933.5,858.5 932.0,858.5 929.0,861.5 929.0,867.5 932.0,870.5 932.0,872.0 930.5,873.5 930.5,875.0 929.0,876.5 919.6,876.5 926.5,864.5 944.0,822.5 952.9,804.5 968.8,777.5 992.0,744.1 999.5,732.2 1004.0,721.4 1005.7,711.5 1005.3,702.5 1002.1,681.5 1001.2,671.0 1001.2,660.5 1003.0,635.0 1003.3,620.0 1002.5,608.7 999.2,582.5 998.8,569.0 999.6,558.5 1001.3,548.0 1010.0,516.5 1010.5,512.0 1009.8,510.5 1007.5,509.0 1001.0,507.1 993.9,506.0 1001.0,504.9 1003.4,503.0 998.7,500.0 997.6,498.5 998.5,497.0 1001.2,495.5 996.5,492.5 995.0,488.8 985.7,443.0 984.1,429.5 980.5,378.5 976.6,347.0 971.4,294.5 968.5,276.5 958.8,234.5 954.8,209.3Z M584.9,227.0 596.0,226.0 596.9,230.0 596.0,234.1 582.5,235.5 567.6,238.9 576.5,230.0 578.0,230.0 580.3,227.7 584.9,227.0Z M964.5,226.5 965.0,229.1 964.5,226.5Z M965.3,230.3 966.5,231.5 966.5,233.0 968.0,234.5 968.0,236.0 969.5,237.5 969.5,239.0 970.7,240.2 977.2,267.5 980.2,284.0 985.6,339.5 990.8,381.5 994.6,432.5 997.7,452.0 1005.9,489.5 1007.4,492.5 1010.0,494.7 1012.5,495.5 1010.6,497.0 1011.1,498.5 1014.5,500.3 1019.0,500.7 1019.7,500.0 1016.0,498.8 1014.8,497.0 1017.5,494.8 1020.2,495.5 1018.7,497.0 1020.5,499.0 1023.5,499.3 1024.7,500.0 1019.9,501.5 1025.0,502.3 1030.0,504.5 1027.0,506.0 1028.0,506.8 1037.0,506.6 1039.3,504.5 1034.0,503.0 1038.5,501.6 1042.6,498.5 1039.1,497.0 1039.3,495.5 1042.2,494.0 1039.8,492.5 1038.1,489.5 1026.3,432.5 1023.4,408.5 1021.5,379.5 1022.0,380.0 1022.0,383.0 1023.5,384.5 1023.5,387.5 1025.0,389.0 1027.5,417.5 1029.1,429.5 1041.1,488.0 1042.1,491.0 1045.7,494.0 1043.0,495.4 1043.0,497.0 1046.9,498.5 1044.5,501.5 1041.2,503.0 1048.1,504.5 1048.0,506.0 1047.5,506.3 1038.4,507.5 1044.5,508.8 1048.1,510.5 1049.0,512.0 1049.0,513.5 1042.6,536.0 1040.1,552.5 1040.3,564.5 1043.3,588.5 1044.0,599.5 1043.0,600.5 1043.0,602.0 1041.5,603.5 1041.5,632.0 1042.6,633.1 1042.4,641.6 1041.5,642.5 1041.5,647.0 1040.0,648.5 1040.0,650.0 1038.5,651.5 1038.5,653.0 1035.5,656.0 1035.5,674.0 1037.0,675.5 1037.0,683.0 1038.5,684.5 1038.5,690.5 1040.0,692.0 1040.0,696.5 1041.5,698.0 1041.5,702.5 1043.0,704.0 1043.0,705.5 1044.5,707.0 1044.5,708.5 1046.0,710.0 1046.0,713.0 1047.5,714.5 1044.9,723.5 1039.5,735.5 1014.5,776.4 1008.5,788.0 1001.3,804.2 983.0,822.5 981.5,822.5 971.7,832.3 991.5,788.0 1002.0,770.0 1025.0,735.4 1029.9,725.0 1033.0,714.5 1034.0,705.5 1033.8,696.5 1029.1,668.0 1027.9,656.0 1028.2,639.5 1029.6,615.5 1029.6,603.5 1025.7,572.0 1025.2,561.5 1025.9,552.5 1027.5,543.5 1035.8,516.5 1036.5,512.0 1035.7,510.5 1033.0,509.0 1026.9,507.5 1026.5,506.9 1019.0,506.6 1016.4,506.0 1021.1,504.5 1018.9,503.0 1010.0,500.5 1006.7,498.5 1006.6,497.0 1008.9,495.5 1004.0,492.7 1002.3,489.5 994.6,453.5 991.7,435.5 987.8,383.0 982.6,341.0 977.4,287.0 974.4,270.5 965.3,230.3Z M589.2,243.5 596.0,242.9 596.8,246.5 596.0,251.4 581.0,253.1 567.5,256.4 552.5,262.2 538.2,269.8 540.5,267.5 540.5,266.0 553.2,253.3 570.5,247.1 589.2,243.5Z M979.1,259.1 980.0,260.0 980.0,261.5 981.5,263.0 981.5,264.5 983.0,266.0 983.0,267.5 984.5,269.0 987.7,287.0 991.6,332.0 996.9,374.0 1000.4,422.0 1002.2,437.0 1012.6,488.0 1014.5,492.4 1016.5,494.0 1016.0,494.8 1013.0,494.3 1011.0,492.5 1009.5,489.5 999.3,440.0 997.4,425.0 994.0,377.0 988.8,335.0 984.9,291.5 981.9,272.0 979.1,259.1Z M590.5,261.5 596.0,261.1 596.7,266.0 596.0,271.4 584.0,272.5 573.5,274.6 561.5,278.6 551.0,283.4 540.5,289.5 530.0,297.0 521.0,304.7 512.0,313.7 512.0,312.5 513.5,311.0 513.5,309.5 515.0,308.0 515.0,306.5 516.5,305.0 516.5,303.5 518.0,302.0 518.0,300.5 519.5,299.0 519.5,297.5 522.5,294.5 522.5,293.0 524.0,291.0 537.5,280.9 551.0,273.1 564.0,267.5 576.5,263.8 590.5,261.5Z M592.3,284.0 596.1,284.0 596.9,291.5 596.0,296.1 581.0,297.9 566.0,302.1 551.0,309.1 537.5,317.8 522.5,330.4 509.4,344.0 496.1,360.5 485.0,377.2 485.0,375.5 486.5,374.0 486.5,372.5 488.0,371.0 488.0,368.0 489.5,366.5 489.5,363.5 491.0,362.0 491.0,359.0 492.5,357.5 492.5,356.0 494.0,354.5 494.0,351.5 495.5,350.0 495.5,348.5 510.5,330.1 527.0,313.7 542.3,302.0 558.5,292.9 575.0,286.9 584.0,285.0 592.3,284.0Z M991.0,284.5 992.0,285.5 992.0,287.0 993.5,288.5 993.5,290.0 995.0,291.5 995.3,293.3 999.0,336.5 1004.2,378.5 1006.7,416.0 1009.5,438.5 1020.1,489.5 1021.7,492.5 1023.9,494.0 1023.5,494.6 1020.5,494.7 1018.2,492.5 1016.7,489.5 1008.0,449.0 1005.4,434.0 1003.6,417.5 1001.3,381.5 994.9,327.5 991.0,284.5Z M999.7,302.2 1001.0,303.5 1001.0,306.5 1002.5,308.0 1002.5,311.0 1003.6,312.1 1005.2,330.5 1010.3,371.0 1013.8,419.0 1015.8,434.0 1027.3,489.5 1028.9,492.5 1031.2,494.0 1028.0,495.0 1026.9,497.0 1029.1,498.5 1028.0,499.1 1025.0,499.3 1022.9,497.0 1025.0,494.8 1027.5,494.0 1024.4,491.0 1023.5,488.0 1012.5,434.0 1009.9,410.0 1007.5,374.0 1002.2,332.0 999.7,302.2Z M591.3,311.0 596.0,310.6 597.1,312.5 598.9,341.0 601.1,360.5 611.2,408.5 618.3,453.5 626.3,497.0 628.5,518.0 631.4,570.5 640.5,645.5 643.4,663.5 654.5,708.5 660.1,737.0 664.2,753.5 670.3,771.5 684.5,805.0 692.0,825.4 698.0,846.5 704.9,876.5 696.6,876.5 689.4,846.5 682.4,822.5 676.4,806.0 663.5,774.8 657.5,757.4 653.0,739.7 646.2,707.0 636.5,669.1 633.5,652.9 623.0,575.0 621.3,557.0 619.3,521.0 617.6,504.5 609.2,459.5 602.4,416.0 597.5,392.6 596.0,409.1 585.5,409.4 576.5,411.7 567.5,416.0 558.5,422.6 551.0,430.0 543.1,440.0 535.7,452.0 529.2,465.5 523.3,482.0 519.7,498.5 521.4,501.5 529.3,509.0 530.1,510.5 529.9,513.5 482.9,676.4 482.0,675.5 482.0,674.0 480.5,672.5 480.5,670.7 526.4,512.0 525.9,509.0 522.5,505.4 518.0,502.4 511.9,500.0 508.6,497.0 508.6,494.0 510.5,485.3 516.5,466.3 524.0,448.8 533.0,432.1 542.0,418.7 552.5,406.6 563.0,398.0 573.5,392.1 584.0,388.8 596.0,387.8 596.7,384.5 596.9,377.0 596.0,361.8 587.0,362.2 578.0,363.9 569.0,366.8 560.0,371.2 552.5,375.9 543.7,383.0 536.4,390.5 530.4,398.0 523.5,408.5 517.2,420.5 511.3,434.0 505.7,449.0 498.3,473.0 494.1,492.5 494.1,494.0 495.0,495.5 501.2,498.5 498.5,499.2 494.0,502.2 492.9,501.5 493.8,500.0 496.5,498.5 492.5,497.6 491.0,496.3 484.7,494.0 483.2,492.5 482.8,491.0 487.8,468.5 495.5,442.8 503.0,422.0 509.0,408.6 516.6,395.0 527.0,380.9 534.5,372.7 542.0,365.9 551.0,359.1 558.5,354.5 567.6,350.0 576.5,346.7 587.0,344.3 596.0,343.3 597.0,339.5 597.3,330.5 597.0,326.0 596.0,324.7 582.5,326.3 569.0,330.1 555.5,336.1 543.5,343.4 531.5,352.8 519.2,365.0 508.3,378.5 499.8,392.0 493.0,405.5 487.2,420.5 481.8,438.5 475.7,462.5 470.0,491.0 470.4,492.5 475.5,494.0 470.2,495.5 472.2,497.0 470.6,500.0 471.5,500.9 476.0,500.9 477.2,501.5 478.6,503.0 478.7,504.5 458.0,576.6 456.5,575.0 456.5,567.2 474.6,504.5 474.4,503.0 473.0,502.1 470.0,502.2 468.7,501.5 469.3,498.5 469.2,497.0 468.5,496.2 464.0,497.2 460.3,497.0 460.0,495.5 461.0,488.1 467.0,458.5 474.5,428.3 480.5,410.2 488.0,393.5 497.0,378.2 508.9,362.0 521.0,348.6 534.5,336.4 549.1,326.0 563.0,318.7 576.5,313.8 591.3,311.0Z M927.7,321.5 929.0,321.0 930.9,323.0 931.4,324.5 930.5,324.9 927.7,321.5Z M932.7,323.0 933.5,322.3 934.2,323.0 933.5,324.3 932.7,323.0Z M935.8,323.0 936.5,322.0 937.2,323.0 936.5,324.1 935.8,323.0Z M934.3,324.5 935.4,324.5 935.7,326.0 935.0,326.7 934.3,326.0 934.3,324.5Z M937.4,324.5 938.5,324.5 938.7,326.0 938.0,326.8 937.3,326.0 937.4,324.5Z M940.4,324.5 941.6,324.5 941.7,326.0 941.0,327.0 940.3,326.0 940.4,324.5Z M943.3,324.5 944.0,323.9 944.6,324.5 944.7,326.0 944.0,327.3 943.3,324.5Z M931.3,326.0 932.0,324.8 932.7,326.0 932.0,326.8 931.3,326.0Z M929.7,327.5 930.5,327.0 931.1,327.5 931.2,329.0 930.5,329.4 930.0,329.0 929.7,327.5Z M932.8,327.5 933.5,326.8 934.2,327.5 933.5,329.3 932.9,329.0 932.8,327.5Z M935.9,327.5 936.5,326.9 937.2,327.5 936.5,329.6 935.8,329.0 935.9,327.5Z M939.0,327.5 939.5,327.1 940.3,327.5 940.2,329.0 938.9,330.5 936.1,338.0 935.7,344.0 935.9,348.5 936.8,350.0 937.5,354.5 938.5,356.0 938.8,359.0 940.0,360.5 940.2,363.5 939.5,364.7 938.7,360.5 937.5,359.0 937.1,356.0 936.0,354.5 935.7,351.5 934.4,348.5 934.3,345.5 934.5,338.0 939.0,327.5Z M942.3,327.5 943.1,327.5 943.0,330.5 941.8,332.0 940.3,336.5 939.5,344.0 940.4,351.5 943.2,360.5 943.1,363.5 942.5,364.5 941.9,363.5 941.5,359.0 940.4,357.5 940.1,354.5 939.1,353.0 937.5,344.0 939.0,335.0 941.5,330.5 942.3,327.5Z M947.8,327.5 948.8,327.5 949.2,329.0 949.1,332.0 948.5,332.7 947.8,332.0 947.8,327.5Z M944.8,329.0 945.5,327.6 946.2,330.5 944.8,333.5 943.3,341.0 943.4,348.5 944.7,354.5 944.8,357.5 944.0,357.8 942.1,350.0 941.7,342.5 942.0,338.0 944.8,329.0Z M931.3,330.5 932.0,329.5 932.7,330.5 932.4,332.0 931.6,332.0 931.3,330.5Z M934.3,330.5 935.0,329.6 935.7,330.5 933.5,336.2 932.8,335.0 932.8,333.5 934.2,332.0 934.3,330.5Z M929.8,333.5 930.5,332.4 931.2,333.5 930.5,336.0 929.8,333.5Z M946.5,333.5 947.0,332.7 947.8,333.5 947.1,344.0 947.7,354.5 947.0,357.1 945.1,344.0 946.5,333.5Z M949.6,333.5 950.4,333.5 950.7,335.0 950.6,354.5 950.2,357.5 949.3,359.0 948.9,366.5 948.0,369.5 946.6,380.0 945.3,402.5 945.3,422.0 946.4,443.0 949.6,468.5 953.9,489.5 956.2,494.0 961.3,497.0 948.5,503.2 944.4,504.5 950.0,507.2 951.7,509.0 953.1,515.0 948.5,641.0 942.9,705.5 941.6,710.0 914.5,771.5 878.0,842.0 849.8,876.5 844.5,876.5 875.0,839.0 911.2,768.5 936.6,710.0 938.5,704.0 943.8,641.0 948.9,515.0 948.6,512.0 947.5,509.0 945.5,507.1 939.8,504.5 944.0,503.3 954.5,497.8 957.2,497.0 954.5,495.8 952.3,494.0 951.2,492.5 949.7,488.0 945.2,462.5 943.5,447.5 942.5,429.7 942.4,411.5 943.5,390.5 946.5,368.0 947.6,365.0 948.0,359.0 949.2,357.5 949.6,333.5Z M931.5,336.5 932.7,336.5 932.7,350.0 932.0,351.0 931.4,350.0 931.5,336.5Z M1011.1,348.1 1011.5,350.9 1011.1,348.1Z M930.3,351.5 930.9,351.5 931.2,353.0 931.0,356.0 929.7,357.5 928.1,363.5 926.9,365.0 924.8,371.0 914.0,394.7 906.5,408.0 902.0,413.5 897.4,417.5 872.0,431.5 863.0,437.9 859.8,441.5 857.3,446.0 856.0,450.5 855.2,456.5 856.8,468.5 859.6,476.0 863.9,483.5 872.0,493.1 891.1,507.5 896.0,513.5 898.1,518.0 900.6,527.0 906.2,561.5 911.0,566.6 918.5,570.9 921.5,570.5 923.6,567.5 924.7,563.0 925.5,552.5 927.6,542.0 927.9,524.0 928.7,516.5 930.5,512.1 932.0,510.5 934.1,510.5 936.0,513.5 931.6,641.0 926.3,702.5 899.6,764.0 864.5,832.3 828.7,876.5 825.5,876.5 860.5,833.0 862.3,830.0 895.9,762.5 921.7,701.0 927.8,641.0 929.2,617.0 930.1,584.0 929.0,570.6 927.5,569.0 922.1,573.5 920.0,574.0 915.5,572.2 908.0,567.9 902.4,563.0 901.0,560.0 896.0,528.5 894.6,522.5 892.3,516.5 888.2,510.5 870.5,494.9 865.6,489.5 861.2,483.5 856.5,474.5 853.9,467.0 852.5,459.4 852.2,453.5 854.0,442.6 856.7,437.0 860.0,433.1 869.2,426.5 896.0,411.6 900.5,408.0 905.5,402.5 913.2,390.5 923.6,369.5 926.5,363.5 928.4,357.5 929.7,356.0 930.3,351.5Z M932.8,351.5 933.5,351.1 933.9,351.5 934.4,356.0 935.6,357.5 936.0,360.5 934.7,360.5 934.3,357.5 933.1,356.0 932.8,351.5Z M1011.9,353.4 1013.0,354.5 1013.0,357.5 1014.5,359.0 1014.5,362.0 1016.0,363.5 1016.0,366.5 1016.7,367.2 1020.1,413.0 1023.1,435.5 1034.5,489.5 1036.1,492.5 1038.4,494.0 1035.5,495.2 1034.9,497.0 1038.0,498.5 1031.0,502.1 1026.5,502.4 1026.2,501.5 1033.6,498.5 1031.0,497.0 1031.7,495.5 1034.9,494.0 1031.6,491.0 1030.6,488.0 1018.8,429.5 1017.1,414.5 1014.8,380.0 1011.9,353.4Z M931.4,357.5 932.0,356.7 932.6,357.5 932.6,360.5 932.0,360.9 931.4,360.5 931.4,357.5Z M944.8,359.0 945.5,357.8 946.1,359.0 946.1,363.5 944.8,366.5 944.5,371.0 943.4,374.0 940.4,395.0 939.1,416.0 939.3,435.5 940.7,456.5 943.8,479.0 946.4,491.0 948.1,494.0 952.9,497.0 951.5,497.7 950.0,497.7 944.2,494.0 942.1,489.5 938.7,470.0 936.5,438.5 936.3,422.0 937.6,401.0 940.6,380.0 941.4,378.5 942.1,372.5 943.1,371.0 943.4,366.5 944.0,365.1 944.6,365.0 944.8,359.0Z M929.9,362.0 930.5,361.1 931.2,362.0 930.5,365.1 929.4,365.0 929.9,362.0Z M932.8,362.0 933.5,361.1 934.1,362.0 934.1,365.0 933.5,365.3 933.0,365.0 932.8,362.0Z M935.8,362.0 936.5,360.6 937.1,362.0 936.9,365.0 936.3,365.0 935.8,362.0Z M940.6,365.0 941.3,365.0 941.7,366.5 941.0,370.8 940.3,369.5 940.6,365.0Z M928.3,366.5 929.0,365.1 929.7,366.5 929.6,368.0 928.4,369.5 927.9,372.5 926.8,374.0 912.5,413.0 906.5,424.6 903.5,428.2 899.0,431.8 878.0,442.3 870.2,447.5 867.1,450.5 864.5,454.5 862.6,462.5 863.6,470.0 865.6,476.0 872.0,485.6 876.5,489.9 881.0,493.1 898.5,501.5 902.1,504.5 905.3,509.0 908.0,516.2 909.5,522.5 915.8,560.0 917.0,562.2 918.5,563.1 920.4,561.5 922.6,548.0 923.6,546.5 924.5,524.1 925.3,542.0 924.8,546.5 923.8,548.0 923.4,558.5 921.7,566.0 920.0,567.4 918.5,567.5 913.6,564.5 910.9,560.0 905.5,525.5 903.7,518.0 901.3,512.0 899.0,508.4 896.0,505.3 878.0,494.4 872.3,489.5 868.3,485.0 864.2,479.0 861.5,473.0 859.7,467.0 859.1,459.5 859.6,455.0 861.0,450.5 863.0,447.1 866.7,443.0 875.6,437.0 897.5,425.5 902.0,421.9 905.0,418.5 909.5,411.4 914.5,401.0 925.1,375.5 927.0,369.5 928.2,368.0 928.3,366.5Z M931.4,366.5 932.0,365.5 932.7,366.5 932.0,369.7 931.3,369.5 931.4,366.5Z M934.3,366.5 935.0,365.5 935.6,366.5 935.5,369.5 935.0,370.0 934.4,369.5 934.3,366.5Z M937.3,366.5 938.0,365.2 938.7,368.0 938.0,370.2 937.4,369.5 937.3,366.5Z M929.9,371.0 930.5,369.7 931.2,371.0 931.2,372.5 924.1,393.5 914.4,429.5 911.0,437.8 908.0,442.0 904.9,444.5 885.5,452.9 878.0,457.5 873.6,462.5 872.0,468.5 872.5,473.0 874.3,477.5 877.6,482.0 881.0,484.9 888.5,488.6 903.5,492.3 909.5,496.5 913.0,501.5 918.5,516.8 920.0,518.3 921.5,516.3 925.4,506.0 929.0,502.4 936.5,502.1 944.0,499.0 945.5,497.8 948.5,497.9 948.5,498.8 938.0,503.6 929.0,504.0 927.2,506.0 925.2,512.0 925.2,513.5 926.8,515.0 926.3,519.5 926.0,520.5 924.5,514.1 922.7,524.0 921.5,539.1 920.0,543.9 918.3,542.0 912.5,513.5 910.5,507.5 908.1,503.0 905.0,499.4 901.4,497.0 885.5,491.4 879.5,488.1 876.5,485.6 873.2,482.0 870.2,477.5 868.0,471.5 867.2,465.5 869.0,458.8 873.5,453.3 882.5,447.5 901.8,438.5 905.0,436.1 908.1,432.5 911.3,426.5 914.2,419.0 929.9,371.0Z M932.9,371.0 933.5,370.1 934.2,371.0 934.1,374.0 932.8,375.5 932.6,378.5 931.6,380.0 927.0,398.0 924.0,413.0 920.1,440.0 917.0,451.8 914.0,457.3 911.0,460.5 906.5,463.4 894.9,468.5 892.3,471.5 892.4,473.0 893.8,474.5 906.5,477.9 912.5,481.7 917.0,487.0 922.3,497.0 923.9,498.5 932.0,499.3 935.4,498.5 930.5,497.1 927.6,495.5 926.4,494.0 920.1,477.5 919.0,470.0 923.2,447.5 927.1,410.0 931.6,387.5 932.5,386.0 933.1,381.5 934.1,380.0 934.4,377.0 935.8,374.0 935.9,371.0 936.5,370.4 937.2,371.0 937.1,374.0 935.8,377.0 935.6,380.0 932.9,389.0 928.5,416.0 925.3,470.0 926.7,480.5 930.2,492.5 933.5,496.0 936.5,497.7 940.0,498.5 935.0,500.5 927.5,501.0 921.5,504.6 920.0,503.5 915.1,494.0 911.0,489.3 905.0,486.0 891.5,483.8 885.5,481.6 882.1,479.0 880.0,476.0 879.0,473.0 879.0,470.0 881.0,465.7 884.3,462.5 891.5,458.6 906.5,453.0 911.0,449.6 913.5,446.0 917.2,435.5 924.0,402.5 930.1,380.0 931.2,378.5 931.5,375.5 932.7,374.0 932.9,371.0Z M939.2,371.0 940.4,371.0 940.1,375.5 938.9,378.5 938.4,383.0 937.4,386.0 934.4,407.0 933.1,426.5 933.3,446.0 934.3,468.5 936.2,482.0 938.9,492.5 941.7,495.5 944.5,497.0 944.0,497.7 941.0,497.6 937.5,495.5 934.8,492.5 931.5,479.0 930.3,467.0 930.4,432.5 931.5,413.0 934.5,392.0 937.7,377.0 938.7,375.5 939.2,371.0Z M1030.0,404.5 1031.0,405.5 1031.0,407.0 1032.5,408.5 1032.5,411.5 1034.0,413.0 1036.8,432.5 1044.7,468.5 1048.6,489.5 1050.5,492.5 1053.0,494.0 1050.5,495.5 1051.1,497.0 1050.5,497.6 1047.5,497.6 1046.9,495.5 1049.6,494.0 1047.0,492.5 1045.2,489.5 1041.9,471.5 1033.7,434.0 1030.8,414.5 1030.0,404.5Z M1039.7,427.7 1040.0,429.4 1039.7,427.7Z M1040.4,431.4 1041.5,432.5 1041.5,435.5 1043.0,437.0 1043.0,438.5 1044.5,440.0 1044.5,443.0 1046.0,444.5 1046.0,446.0 1047.1,447.1 1052.2,470.0 1055.7,489.5 1058.0,492.9 1060.3,494.0 1058.1,495.5 1059.1,497.0 1055.8,498.5 1055.5,500.0 1056.7,501.5 1056.1,503.0 1055.0,503.6 1050.5,503.7 1048.9,503.0 1050.8,501.5 1050.6,500.0 1051.5,498.5 1055.0,497.4 1054.4,495.5 1056.9,494.0 1054.2,492.5 1052.9,491.0 1051.9,488.0 1047.9,465.5 1040.4,431.4Z M587.4,435.5 596.0,434.5 596.7,444.5 596.0,453.4 587.0,454.3 579.5,456.9 572.0,461.5 565.9,467.0 559.7,474.5 554.4,483.5 549.8,494.0 545.5,507.5 540.5,511.7 538.6,515.0 488.0,690.1 488.0,687.5 486.5,686.0 485.9,683.0 535.1,513.5 535.5,510.5 534.5,503.0 537.2,492.5 540.3,483.5 545.0,473.2 549.5,465.5 554.0,459.0 560.0,452.0 566.5,446.0 573.5,441.1 581.0,437.4 587.4,435.5Z M597.5,468.5 603.5,498.0 605.6,512.0 607.1,527.0 608.6,561.5 610.1,579.5 619.2,656.0 622.6,675.5 632.0,713.3 638.9,744.5 643.1,759.5 649.0,776.0 663.5,808.9 669.5,824.4 675.5,843.7 683.7,876.5 673.7,876.5 667.0,846.5 662.5,830.0 656.6,813.5 639.5,773.1 635.0,759.8 630.5,743.2 623.6,713.0 615.5,682.1 611.0,658.1 600.5,578.7 597.5,532.2 597.0,540.5 596.1,542.0 591.5,544.7 589.0,548.0 586.6,554.0 585.5,560.0 587.8,590.0 598.3,675.5 602.9,696.5 619.1,759.5 626.6,780.5 642.5,815.8 648.5,831.6 653.0,846.9 659.5,876.5 650.0,876.5 649.1,875.6 644.5,851.0 640.1,834.5 634.2,818.0 620.0,786.1 612.5,766.5 606.5,746.2 591.5,688.0 588.1,669.5 583.2,629.0 578.0,593.5 575.2,560.0 577.8,546.5 582.5,535.7 585.5,531.5 588.5,528.6 591.5,526.7 596.0,525.3 596.8,524.0 597.0,510.5 596.0,500.6 591.5,501.3 587.0,503.1 579.7,509.0 573.4,518.0 568.1,530.0 563.9,545.0 561.7,560.0 563.8,591.5 569.0,630.5 574.1,677.0 577.1,693.5 580.3,707.0 590.6,746.0 598.0,770.0 604.5,786.5 621.5,824.0 626.0,836.2 630.1,851.0 629.0,851.0 627.5,849.5 626.0,849.5 624.5,848.0 623.0,848.0 620.0,845.0 619.2,845.0 616.1,834.5 611.5,822.5 594.5,784.8 584.0,755.0 569.0,701.2 564.5,677.8 559.6,635.0 553.2,588.5 551.3,560.0 554.0,536.6 552.5,536.4 551.0,537.2 547.6,540.5 539.6,554.0 537.6,566.0 538.1,572.0 539.7,578.0 539.8,590.0 539.0,591.1 538.5,590.0 538.0,576.5 534.5,567.8 533.0,567.9 531.5,571.3 493.8,700.8 492.5,699.5 492.5,698.0 491.0,696.5 543.5,516.5 545.0,514.8 549.5,513.7 554.0,514.2 558.5,515.6 560.0,515.3 567.5,499.9 572.0,493.2 576.5,488.3 581.0,484.6 585.5,482.0 590.0,480.4 596.0,479.7 597.5,468.5Z M549.5,516.1 548.0,516.9 546.3,519.5 541.7,536.0 540.5,544.0 542.0,543.0 544.7,539.0 556.7,527.0 558.5,524.0 558.6,521.0 557.0,518.8 552.5,516.1 549.5,516.1Z M1056.2,471.2 1056.5,472.9 1056.2,471.2Z M1056.9,474.9 1058.0,476.0 1058.0,477.5 1059.5,479.0 1059.5,482.0 1061.0,483.5 1061.0,485.0 1062.1,486.1 1062.5,489.5 1064.0,492.5 1065.5,494.0 1065.5,495.5 1067.0,497.0 1064.7,498.5 1065.7,500.0 1068.5,501.5 1068.5,503.0 1069.2,503.7 1066.0,504.5 1068.9,506.0 1061.6,507.5 1068.5,508.7 1072.8,510.3 1073.0,512.0 1074.5,513.5 1070.2,533.0 1068.5,549.5 1067.0,551.0 1067.0,555.5 1065.5,557.0 1065.5,572.0 1064.0,573.5 1064.0,579.5 1062.5,581.0 1062.5,584.0 1056.9,589.6 1054.5,560.0 1054.5,548.0 1056.5,534.5 1061.9,515.0 1062.2,512.0 1061.1,510.5 1057.8,509.0 1050.4,507.5 1058.0,506.4 1058.9,506.0 1057.3,504.5 1063.8,503.0 1063.1,501.5 1060.8,500.0 1060.4,498.5 1063.3,497.0 1062.0,495.5 1064.2,494.0 1061.4,492.5 1059.4,489.5 1056.9,474.9Z M477.3,495.5 480.5,494.9 482.2,495.5 480.8,497.0 480.5,500.4 479.0,500.6 477.7,500.0 478.3,498.5 476.7,497.0 477.3,495.5Z M483.5,497.0 485.0,496.3 486.6,497.0 485.4,498.5 485.3,500.0 483.7,501.5 486.2,503.0 487.2,504.5 486.9,507.5 460.5,598.5 459.5,597.5 459.3,588.3 482.8,507.5 483.4,504.5 482.8,503.0 481.2,501.5 483.0,500.0 483.5,497.0Z M465.1,498.5 465.5,497.7 467.0,498.1 467.4,498.5 467.0,499.9 465.5,499.8 465.1,498.5Z M489.6,498.5 491.0,497.7 492.0,498.5 489.5,502.2 488.0,502.0 487.4,501.5 489.6,498.5Z M461.6,500.0 462.5,499.3 463.4,500.0 463.1,504.5 464.0,505.3 467.0,504.6 468.5,505.0 469.1,506.0 468.9,507.5 455.0,555.9 455.0,545.0 454.2,544.2 464.1,509.0 462.5,507.6 459.5,508.2 458.8,507.5 458.5,504.5 459.4,503.0 458.5,501.5 459.5,500.8 460.3,501.5 459.6,503.0 460.2,506.0 461.0,507.0 462.2,506.0 461.6,500.0Z M501.2,500.0 501.5,499.1 505.1,500.0 503.0,500.6 499.6,503.0 504.0,506.0 504.3,509.0 468.5,633.5 467.0,632.0 467.0,627.5 466.3,626.8 466.5,626.0 500.4,509.0 500.5,506.0 499.4,504.5 497.0,503.0 501.2,500.0Z M464.8,501.5 465.5,500.1 466.7,503.0 465.5,503.9 464.8,503.0 464.8,501.5Z M505.9,501.5 507.5,500.9 509.5,501.5 506.0,503.5 502.8,503.0 505.9,501.5Z M454.0,503.0 456.5,502.3 457.5,503.0 456.5,509.8 454.5,509.0 456.0,507.5 456.3,504.5 454.0,503.0Z M490.3,503.0 492.5,502.2 495.1,504.5 495.9,506.0 495.8,507.5 464.0,617.9 464.0,615.5 462.5,614.0 462.5,608.6 491.4,509.0 492.0,506.0 491.7,504.5 490.3,503.0Z M509.9,503.0 510.5,502.4 513.1,503.0 512.0,503.6 509.9,503.0Z M453.5,504.5 453.5,503.4 454.2,507.5 453.5,507.9 453.5,504.5Z M506.6,504.5 507.5,503.9 509.0,504.0 511.5,506.0 512.8,507.5 512.8,510.5 473.0,648.9 471.5,647.0 471.5,644.0 470.7,642.5 508.9,510.5 509.3,507.5 506.6,504.5Z M513.3,504.5 513.5,504.0 516.5,504.1 519.1,506.0 521.5,509.0 521.4,512.0 477.5,664.4 477.5,662.0 476.0,660.5 476.0,657.5 475.5,657.0 517.9,510.5 517.5,507.5 516.2,506.0 513.3,504.5Z M929.7,506.0 932.0,505.1 936.5,505.3 941.0,507.2 943.7,510.5 944.6,515.0 939.9,641.0 934.0,705.5 906.5,768.4 870.8,837.5 838.8,876.5 833.8,876.5 868.1,834.5 902.8,767.0 930.0,704.0 935.6,641.0 940.5,515.0 939.7,510.5 938.0,508.4 935.0,506.8 932.0,506.8 930.9,507.5 928.5,510.5 927.8,513.5 926.9,513.5 926.9,510.5 929.7,506.0Z M453.5,512.0 453.5,511.3 456.5,511.0 458.3,512.0 453.5,530.0 453.5,512.0Z M551.4,521.0 552.5,520.2 554.0,520.4 555.7,522.5 554.2,525.5 551.0,527.5 550.2,527.0 550.0,525.5 551.4,521.0Z M534.4,581.0 536.0,583.2 537.1,591.5 538.0,593.0 538.3,596.0 539.0,596.6 539.8,596.0 540.1,591.5 541.1,593.0 541.1,596.0 539.9,597.5 539.5,605.0 539.0,605.9 538.2,597.5 536.0,594.1 534.5,593.8 531.0,603.5 499.4,712.4 498.5,711.5 498.5,710.0 497.0,708.5 497.0,707.0 531.4,588.5 534.4,581.0Z M541.9,599.0 542.0,598.5 542.7,606.5 540.5,611.3 539.9,611.0 539.8,609.5 540.0,608.0 541.2,606.5 541.9,599.0Z M922.4,603.5 923.0,602.5 923.6,605.0 923.7,612.5 922.0,624.5 914.3,645.5 897.1,680.0 888.3,704.0 882.2,725.0 879.1,738.5 876.2,755.0 873.5,776.0 869.4,797.0 866.2,807.5 860.0,821.9 859.3,821.0 859.4,819.5 860.5,818.0 864.9,803.0 867.8,789.5 871.7,752.0 874.7,735.5 879.1,717.5 885.1,698.0 892.7,678.5 901.4,660.5 913.1,639.5 919.0,624.5 921.9,614.0 922.4,603.5Z M535.1,608.0 536.0,606.8 537.5,607.9 539.7,612.5 539.0,627.3 537.5,617.9 536.0,618.5 533.9,624.5 505.1,724.1 504.5,723.5 504.5,722.0 503.0,720.5 502.6,718.6 535.1,608.0Z M543.3,609.5 543.5,609.0 544.0,612.5 543.5,633.8 542.9,630.5 543.3,609.5Z M538.5,635.0 539.0,633.7 540.5,635.5 542.4,636.5 542.0,644.1 541.2,639.5 539.0,637.7 538.5,635.0Z M534.1,642.5 534.5,641.3 536.0,642.0 536.2,644.0 535.2,648.5 535.2,659.0 536.0,660.0 539.0,659.8 539.9,662.0 539.0,662.8 537.5,662.6 536.0,663.8 534.5,661.4 533.7,666.5 534.5,667.7 537.5,667.1 539.0,669.1 540.0,666.5 540.0,663.5 541.4,660.5 542.7,651.5 544.6,645.5 545.0,641.3 546.5,643.0 552.1,690.5 555.1,705.5 560.8,728.0 569.9,758.0 577.2,779.0 583.4,794.0 597.5,824.3 602.2,836.2 600.5,836.0 599.0,834.5 597.5,834.5 596.0,833.0 594.5,833.0 591.5,830.0 590.2,830.0 569.0,782.9 560.0,757.8 549.5,724.5 544.7,705.5 540.1,681.5 539.0,680.7 537.5,683.9 534.5,693.7 533.0,690.9 530.0,692.8 528.5,693.0 527.8,692.0 528.5,688.1 530.0,690.6 533.0,688.6 534.5,689.3 535.6,689.0 535.2,684.5 534.5,683.8 533.0,684.5 531.5,686.5 529.5,686.0 529.1,683.0 530.0,678.6 530.5,681.5 531.5,683.0 534.5,681.4 536.0,682.5 536.8,681.5 536.9,678.5 536.0,676.6 534.5,677.2 533.0,678.9 530.2,677.0 530.0,671.1 525.1,686.0 511.1,734.6 510.5,732.5 508.3,730.3 534.1,642.5Z M533.0,669.9 532.0,672.5 532.1,674.0 533.0,675.3 536.0,674.3 537.5,675.8 538.4,672.5 537.5,669.7 536.0,669.9 534.5,671.4 533.0,669.9Z M536.7,648.5 537.5,647.1 540.5,647.9 541.2,650.0 540.5,652.3 539.0,650.7 537.5,651.6 536.7,648.5Z M913.8,678.5 915.5,678.0 916.7,683.0 917.0,698.0 916.1,704.0 899.0,735.9 896.0,739.2 895.5,737.0 896.0,732.9 901.6,711.5 909.0,689.0 913.8,678.5Z M526.7,695.0 527.0,694.4 528.5,696.5 531.5,694.5 533.0,694.7 533.7,696.5 533.2,698.0 533.0,698.4 531.5,696.5 528.5,698.7 527.0,699.0 526.3,698.0 526.7,695.0Z M525.3,701.0 525.5,700.6 527.0,702.4 530.0,700.3 531.5,700.1 532.1,701.0 532.0,702.5 531.5,703.4 530.0,702.0 527.0,704.7 525.5,705.0 524.9,704.0 525.3,701.0Z M529.7,705.5 530.6,707.0 530.1,708.5 528.5,707.8 527.0,709.1 524.0,714.3 523.4,710.0 524.0,706.8 525.5,708.4 529.7,705.5Z M527.9,713.0 528.5,711.6 529.1,714.5 528.5,716.7 526.0,716.0 527.9,713.0Z M522.2,717.5 522.5,716.9 524.0,717.8 525.5,716.5 526.0,717.5 524.6,719.0 524.0,721.8 522.5,723.8 521.9,722.0 522.2,717.5Z M531.0,717.5 531.5,716.1 533.0,717.1 539.7,740.0 551.6,774.5 559.3,794.0 567.8,812.3 560.0,804.5 560.0,803.0 551.0,794.0 551.0,792.5 546.6,788.1 528.5,739.0 527.0,737.8 521.0,742.1 520.3,741.5 524.9,737.0 524.0,735.1 522.5,736.2 521.7,735.5 524.0,733.3 525.5,734.2 526.4,732.5 526.3,731.0 525.5,730.2 524.0,730.8 523.4,729.5 525.5,727.6 527.0,729.5 529.2,723.5 529.9,719.0 531.0,717.5Z M526.5,720.5 527.0,719.7 527.9,723.5 527.0,724.7 525.5,725.3 524.8,725.0 525.0,723.5 526.5,720.5Z M523.1,726.5 524.0,725.6 524.4,726.5 524.0,726.9 523.1,726.5Z M520.4,728.0 521.0,726.7 522.5,726.9 523.1,728.0 521.0,730.0 520.4,728.0Z M1054.4,729.5 1055.1,728.1 1056.5,729.5 1056.5,731.0 1058.0,732.5 1058.0,734.0 1059.5,735.5 1059.5,738.5 1055.0,743.0 1055.0,744.5 1052.0,747.5 1052.0,749.0 1049.0,752.0 1049.0,753.5 1046.0,756.5 1046.0,758.0 1041.5,762.5 1041.5,764.0 1037.0,768.5 1037.0,770.0 1027.4,779.6 1034.7,765.5 1047.8,743.0 1054.4,729.5Z M519.5,732.5 521.0,732.7 521.4,734.0 521.0,734.6 519.5,734.6 518.9,734.0 519.5,732.5Z M521.6,732.5 522.5,731.9 522.5,732.6 521.6,732.5Z M515.9,737.0 516.5,736.5 517.0,737.0 516.5,737.7 515.9,737.0Z M513.7,738.5 515.0,737.8 515.8,738.5 515.7,740.0 518.0,740.2 518.7,741.5 517.0,745.0 515.0,743.0 515.0,741.5 513.5,740.0 513.7,738.5Z M518.5,743.0 519.7,743.0 518.5,743.0Z M1026.3,782.0 1026.5,781.5 1026.3,782.0Z M858.1,822.5 858.5,822.0 859.2,822.5 858.5,825.1 857.8,824.0 858.1,822.5Z M856.8,825.5 857.5,825.5 857.7,827.0 857.0,827.9 856.3,827.0 856.8,825.5Z M855.0,828.5 856.1,828.5 855.5,830.5 854.8,830.0 855.0,828.5Z M853.3,831.5 854.0,830.6 854.7,831.5 854.0,832.3 853.3,831.5Z M851.8,833.0 852.5,832.5 853.2,833.0 852.6,834.5 851.8,833.0Z M850.4,836.0 851.0,835.0 851.7,836.0 851.0,836.6 850.4,836.0Z M842.9,837.5 843.5,836.6 844.2,837.5 843.5,838.8 842.9,837.5Z M845.9,837.5 846.5,836.9 848.5,839.0 848.0,840.3 845.9,837.5Z M848.8,837.5 849.5,836.8 850.2,837.5 849.5,838.3 848.8,837.5Z M841.3,840.5 842.0,839.1 842.7,840.5 842.0,841.2 841.3,840.5Z M844.4,840.5 845.0,839.2 845.9,840.5 845.0,841.1 844.4,840.5Z M839.8,842.0 840.5,841.5 841.1,842.0 841.3,843.5 840.2,843.5 839.8,842.0Z M842.8,842.0 843.5,841.3 844.1,842.0 843.5,842.7 842.8,842.0Z M846.0,842.0 846.5,841.1 847.2,842.0 846.5,842.5 846.0,842.0Z M844.2,843.5 845.0,842.8 845.7,843.5 845.0,844.2 844.2,843.5Z M835.3,845.0 836.0,844.1 836.7,845.0 836.0,846.1 835.3,845.0Z M838.3,845.0 839.0,844.1 839.7,845.0 839.0,845.7 838.3,845.0Z M841.7,845.0 842.0,844.1 844.0,845.0 843.5,846.0 841.7,845.0Z M836.6,846.5 837.5,846.0 838.0,846.5 837.5,847.6 836.6,846.5Z M839.8,846.5 840.5,845.8 841.4,846.5 840.5,847.2 839.8,846.5Z M833.9,848.0 834.5,846.6 835.4,848.0 834.5,848.6 833.9,848.0Z M837.9,848.0 839.0,847.4 839.5,848.0 839.0,848.6 837.9,848.0Z M841.5,848.0 842.0,847.3 842.7,848.0 842.0,848.5 841.5,848.0Z M832.2,849.5 833.0,849.0 835.1,851.0 834.5,851.9 832.2,849.5Z M835.4,849.5 836.0,848.6 837.0,849.5 836.0,850.1 835.4,849.5Z M839.8,849.5 840.5,848.8 841.2,849.5 840.5,850.2 839.8,849.5Z M837.5,851.0 839.0,850.3 839.6,851.0 839.0,851.7 837.5,851.0Z M827.9,852.5 828.5,851.8 832.2,855.5 831.5,856.1 830.0,855.6 828.0,854.0 827.9,852.5Z M830.8,852.5 831.5,851.7 832.4,852.5 831.5,853.2 830.8,852.5Z M835.0,852.5 836.0,851.8 837.3,852.5 836.0,853.2 835.0,852.5Z M832.4,854.0 833.0,853.2 834.5,853.3 834.9,854.0 833.0,854.7 832.4,854.0Z M826.3,855.5 827.0,854.6 829.5,857.0 828.5,857.7 826.3,855.5Z M835.3,855.5 836.0,854.8 836.8,855.5 836.0,856.1 835.3,855.5Z M832.8,857.0 834.5,856.3 835.1,857.0 830.0,860.3 828.5,860.7 827.1,860.0 830.0,857.9 832.8,857.0Z M836.8,857.0 837.5,856.2 838.2,857.0 834.5,861.9 833.8,861.5 833.5,860.0 836.8,857.0Z M824.9,858.5 825.5,857.4 826.8,858.5 825.5,859.1 824.9,858.5Z M824.5,861.5 825.5,860.8 826.9,861.5 825.5,862.2 824.5,861.5Z M830.8,861.5 831.5,860.9 833.6,863.0 833.0,863.7 830.8,861.5Z M818.9,863.0 819.5,862.4 821.7,864.5 821.0,865.1 819.5,864.7 818.9,863.0Z M821.9,863.0 822.5,862.3 824.0,862.3 824.4,863.0 822.5,863.7 821.9,863.0Z M828.2,863.0 830.0,862.3 830.7,863.0 825.5,866.5 821.0,868.2 819.5,868.3 818.9,867.5 828.2,863.0Z M830.8,864.5 831.5,863.8 832.3,864.5 828.9,869.0 827.8,869.0 827.0,867.4 828.5,867.1 830.8,864.5Z M817.3,866.0 818.0,865.2 818.8,866.0 818.0,866.8 817.3,866.0Z M816.0,869.0 816.5,868.0 818.9,869.0 816.5,869.6 816.0,869.0Z M824.7,869.0 825.5,868.4 827.6,870.5 827.0,871.2 824.7,869.0Z M820.4,870.5 824.0,869.6 824.7,870.5 821.0,872.6 816.5,872.6 815.7,872.0 820.4,870.5Z M811.3,872.0 812.0,870.8 813.5,872.9 815.0,873.8 821.0,874.3 823.2,876.5 821.5,876.5 819.5,875.5 815.0,876.3 813.5,875.9 811.5,873.5 811.3,872.0Z M824.8,872.0 825.5,871.3 826.2,872.0 825.5,872.9 824.8,872.0Z M822.9,873.5 824.0,873.0 824.8,873.5 824.0,875.3 822.9,873.5Z"/>
<path fill="none" stroke="#a88bb2" stroke-width="1.7" d="M566.3,240.2 587.0,235.8 M535.6,272.4 548.0,265.3 561.5,259.4 574.1,255.5 587.0,253.1 M510.5,316.6 528.5,299.5 537.5,292.7 548.0,286.2 557.0,281.7 567.5,277.6 578.0,274.7 588.5,273.0 M483.5,381.4 494.0,365.0 506.0,349.4 519.5,334.7 533.0,322.7 546.5,313.2 560.0,306.0 575.0,300.6 588.5,298.0 M471.2,489.5 479.0,453.6 489.0,419.0 498.5,396.9 509.8,378.5 518.0,368.2 527.0,358.7 536.0,350.7 546.5,343.0 557.0,336.9 567.5,332.2 578.0,328.9 588.5,326.9 M495.3,492.5 500.9,468.5 510.5,440.0 520.4,417.5 531.4,399.5 543.5,385.7 557.0,375.2 564.5,371.0 572.0,367.8 581.0,365.3 588.5,364.2 M520.2,751.2 519.8,750.2 M521.1,753.6 521.0,753.3 M521.0,498.5 524.7,482.0 530.8,465.5 539.0,449.4 548.0,436.3 557.0,426.6 567.5,418.6 578.0,413.6 590.0,411.3 M570.2,814.7 560.5,794.0 552.8,774.5 540.5,738.5 534.5,717.5 M546.2,508.7 554.7,486.5 558.8,479.0 564.3,471.5 570.5,465.3 576.5,460.9 582.5,458.0 590.0,455.9 M603.9,837.5 598.6,824.0 584.6,794.0 578.4,779.0 572.1,761.0 562.9,731.0 557.0,708.5 553.3,690.5 548.0,643.9 M631.5,852.0 628.1,839.0 623.3,825.5 606.4,788.0 599.8,771.5 594.0,753.5 585.8,723.5 579.0,696.5 575.8,680.0 570.2,630.5 565.8,599.0 562.9,560.0 564.3,549.5 566.6,539.0 571.4,525.5 577.2,515.0 584.0,507.6 591.5,503.7 M660.8,876.5 654.5,848.0 649.2,830.0 642.7,813.5 627.3,779.0 620.3,759.5 600.7,681.5 597.8,663.5 593.7,626.0 589.2,591.5 586.7,560.0 587.8,554.0 589.7,549.5 591.5,546.9 594.5,544.5 M684.9,876.5 677.0,845.0 671.0,825.5 664.7,809.0 650.2,776.0 643.8,758.0 623.8,675.5 620.2,654.5 611.4,581.0 609.9,563.0 607.8,521.0 603.5,491.7 M705.8,876.5 698.6,845.0 692.1,822.5 685.4,804.5 671.5,771.5 665.3,753.5 661.6,738.5 655.3,707.0 644.5,663.5 641.6,645.5 632.5,570.5 629.6,518.0 627.8,500.0 619.4,453.5 612.6,410.0 605.0,374.9 M721.8,876.5 715.3,843.5 708.3,815.0 702.5,796.3 689.4,761.0 685.0,746.0 676.6,702.5 667.1,665.0 663.7,648.5 652.6,561.5 649.9,510.5 647.9,491.0 640.2,447.5 633.5,404.0 624.4,362.0 621.5,344.0 617.4,293.0 611.9,246.5 609.1,207.9 M734.0,868.8 729.5,843.1 722.2,809.0 704.5,746.0 696.5,697.3 686.1,656.0 682.3,636.5 671.6,554.0 668.9,503.0 666.9,483.5 659.6,441.5 653.1,398.0 643.6,354.5 640.6,336.5 636.5,287.0 631.0,240.5 627.2,192.5 M732.5,794.9 720.8,746.0 713.8,692.0 703.4,645.5 700.0,626.0 689.5,546.5 686.9,497.0 684.9,477.5 677.7,435.5 671.3,392.0 661.5,347.0 658.5,329.0 654.4,281.0 649.1,236.0 646.3,197.0 644.2,179.0 M738.0,761.5 733.5,735.5 729.1,686.0 718.4,630.5 707.2,546.5 705.4,527.0 703.7,489.5 701.6,470.0 694.8,429.5 688.4,386.0 678.8,342.5 675.8,324.5 671.5,276.5 666.1,231.5 663.1,189.5 660.9,171.1 M745.7,723.8 744.5,696.5 742.9,678.5 734.7,629.0 729.6,584.0 722.6,536.0 719.7,485.0 718.2,468.5 704.8,381.5 694.9,336.5 691.8,318.5 687.4,270.5 682.0,227.0 679.0,183.5 676.8,165.5 M757.4,692.6 755.8,669.5 749.8,626.0 746.5,591.5 737.5,528.5 733.3,464.0 719.9,375.5 710.0,330.5 707.1,314.0 702.5,266.0 696.9,221.0 694.0,177.5 691.8,159.7 M770.0,698.0 769.9,677.0 768.9,660.5 764.5,623.0 762.9,599.0 751.8,522.5 747.8,459.5 734.6,371.0 724.3,324.5 721.5,308.0 717.0,261.5 711.3,216.5 708.4,173.0 706.3,155.0 M782.4,702.9 784.9,668.0 785.8,630.5 788.0,615.7 791.0,609.2 795.3,605.0 801.5,602.4 811.5,600.5 812.0,599.0 795.5,595.4 789.5,592.8 785.0,589.6 780.5,584.4 777.7,579.5 774.9,572.0 773.0,564.5 765.8,518.0 762.8,467.0 760.5,446.0 748.6,365.0 738.5,320.0 735.2,300.5 731.0,257.0 725.2,212.0 722.3,168.5 720.5,152.0 M798.5,578.2 791.7,572.0 787.7,564.5 780.8,525.5 778.4,504.5 776.5,465.5 774.8,447.5 762.2,360.5 752.2,315.5 749.1,297.5 744.5,252.5 738.7,207.5 734.2,149.0 M795.0,704.0 798.4,683.0 802.7,662.0 806.5,648.5 810.7,638.0 815.2,630.5 820.4,624.5 845.5,603.0 M777.3,371.2 773.7,347.0 765.1,309.5 761.9,290.0 757.5,248.0 751.6,203.0 747.5,146.0 M801.3,563.2 792.6,512.0 788.3,447.5 779.7,389.7 M808.3,701.0 814.2,678.5 822.3,657.5 831.4,641.0 845.0,622.1 M762.5,176.1 760.4,144.5 M788.6,362.0 787.2,342.5 778.9,309.5 775.0,288.5 770.1,243.5 764.6,203.0 762.7,180.7 M813.8,559.7 805.8,512.0 803.4,486.9 M841.1,652.4 842.0,650.7 M825.1,687.9 831.8,671.0 840.5,653.5 M786.5,278.4 786.4,277.9 M800.7,371.0 802.0,365.0 804.5,359.5 807.5,355.9 814.2,350.0 814.7,348.5 813.3,345.5 806.0,338.4 802.0,333.5 796.5,323.0 790.8,303.5 786.7,279.7 M819.5,517.3 819.3,516.3 M826.1,555.5 819.6,518.1 M813.5,324.7 809.1,318.5 805.9,310.9 M811.9,381.4 814.4,375.5 818.0,372.2 844.3,362.0 854.7,356.0 862.4,350.0 865.5,345.5 864.9,342.5 860.0,339.7 853.1,338.0 M822.7,390.7 825.5,386.3 829.7,383.0 855.5,371.1 897.4,347.0 900.4,344.0 901.4,341.0 900.4,338.0 896.5,335.0 M833.0,399.5 835.5,396.5 839.0,393.7 851.9,386.9 M843.6,407.1 854.0,400.0 M915.5,663.8 917.0,662.1 918.5,663.1 920.0,663.2 921.5,659.3 M888.4,767.1 889.5,762.5 888.5,761.7 886.8,762.5 886.4,757.1 M882.5,426.5 894.3,420.3 M879.5,442.2 896.0,434.2 901.7,430.7 M873.5,464.2 876.5,459.8 881.0,456.2 888.5,452.2 903.5,446.2 908.7,442.2 M916.6,485.4 909.5,478.0 897.6,473.0 896.8,471.5 897.6,470.0 899.8,468.5 906.5,465.1 911.0,462.0 914.0,458.7 916.5,454.5 M880.1,876.5 894.5,858.6 898.5,852.5 917.0,816.1 936.2,780.5 958.6,734.0 966.6,714.5 968.2,705.5 972.9,642.5 973.7,573.5 977.0,513.5 M904.3,876.5 913.5,863.0 929.0,828.4 941.0,805.2 960.5,773.0 985.7,735.5 990.0,728.0 992.8,720.5 994.0,714.5 994.2,708.5 991.8,686.0 991.3,672.5 993.2,642.5 993.5,626.0 990.1,587.0 989.7,570.5 991.6,549.5 997.8,516.5 997.9,512.0 M950.0,848.0 964.3,815.0 976.1,792.5 987.3,774.5 1013.7,737.0 1019.2,726.5 1022.1,717.5 1023.3,710.0 1023.2,699.5 1018.9,671.0 1018.0,659.0 1019.3,621.5 1019.1,609.5 1018.0,599.0 1013.9,575.0 1013.2,564.5 1013.8,555.5 1015.7,545.0 1024.8,513.5 M1045.3,598.2 1041.7,564.5 1041.5,552.5 1043.6,537.5 1050.3,513.5 M1003.4,803.0 1016.2,776.0 1040.8,735.5 1045.5,725.0 1048.6,715.6 M1070.3,546.2 1071.5,533.0 1075.2,517.2"/>
<path fill="none" stroke="#b9a0c4" stroke-width="1.2" d="M581.1,226.9 587.0,226.0 M554.4,252.1 570.5,246.4 587.0,243.1 M524.0,290.1 539.0,279.1 554.0,270.8 570.5,264.6 587.0,261.1 M497.0,345.3 507.5,332.4 519.5,319.6 530.7,309.5 542.0,301.1 553.1,294.5 564.5,289.3 576.5,285.5 588.5,283.4 M459.3,494.0 467.0,454.9 476.5,419.0 480.9,407.0 486.5,394.6 492.5,383.8 499.8,372.5 509.0,360.5 519.5,348.8 530.0,338.9 542.0,329.5 552.5,322.8 564.5,316.8 576.5,312.7 588.5,310.2 M482.0,489.5 489.2,459.5 500.0,426.5 509.2,405.5 520.2,387.5 527.0,378.9 534.5,370.9 542.9,363.5 551.0,357.5 560.0,352.1 569.0,347.9 579.5,344.4 588.5,342.5 M507.3,495.3 512.0,476.0 519.5,455.9 529.5,435.5 540.5,418.2 551.0,405.9 563.0,395.8 575.0,389.5 581.0,387.5 588.5,386.1 M544.0,784.0 528.5,741.5 M533.4,504.5 536.0,492.5 540.9,479.0 547.1,467.0 554.3,456.5 563.0,447.1 572.0,440.1 581.0,435.6 590.0,433.3 M588.7,828.7 571.4,791.0 561.6,765.5 547.8,722.0 543.4,704.0 540.5,688.2 M558.3,514.8 559.8,513.5 566.7,498.5 573.1,489.5 581.0,482.5 590.0,478.5 M618.2,844.7 611.8,825.5 594.8,788.0 587.3,768.5 575.1,728.0 566.6,695.0 563.2,675.5 559.0,638.0 552.2,588.5 550.4,560.0 552.8,540.5 552.3,537.7 M645.4,861.4 641.7,843.5 636.6,827.0 616.7,780.5 609.3,759.5 592.1,695.0 587.5,672.5 582.2,629.0 576.8,591.5 574.3,560.0 576.3,548.0 580.3,537.5 585.5,529.6 591.5,525.0 M647.9,874.4 646.6,867.9 M672.7,876.5 666.1,846.5 660.5,827.0 654.4,810.5 639.7,776.0 633.5,758.0 614.0,680.0 610.2,659.0 600.3,585.5 597.5,548.0 M695.7,876.5 688.2,845.0 681.5,822.5 675.5,806.0 661.9,773.0 656.3,756.5 652.5,741.5 645.6,708.5 635.0,666.5 632.2,650.0 621.9,573.5 617.1,507.5 605.0,438.7 M713.8,876.5 707.0,843.5 700.1,816.5 694.0,798.5 681.7,767.0 676.5,750.5 667.3,704.0 658.0,668.0 654.8,653.0 642.5,564.5 639.4,515.0 637.7,498.5 629.1,450.5 622.3,407.0 611.2,354.5 609.2,338.0 605.0,287.7 M728.3,876.5 722.4,843.5 715.8,813.5 695.8,746.0 687.5,699.5 677.2,659.0 673.6,641.0 661.9,557.0 658.8,506.0 656.9,488.0 649.0,444.5 642.4,401.0 633.1,359.0 630.1,341.0 625.8,291.5 620.2,245.0 616.9,201.5 M731.0,819.5 725.7,795.5 713.4,747.5 705.6,693.5 694.9,648.5 691.3,629.0 680.3,549.5 677.3,500.0 675.2,480.5 667.8,438.5 661.2,395.0 651.6,351.5 648.5,333.5 644.3,285.5 638.7,239.0 634.5,186.5 M735.5,780.5 727.3,741.5 723.2,701.0 720.9,684.5 711.9,642.5 708.3,621.5 697.6,543.5 694.6,492.5 692.2,471.5 685.7,434.0 678.9,389.0 669.2,345.5 666.3,329.0 661.7,279.5 656.2,234.5 653.2,192.5 651.2,174.8 M741.2,744.8 739.4,729.5 736.0,683.0 726.3,629.0 721.0,585.5 714.3,540.5 712.8,522.5 711.0,486.5 709.1,468.5 702.2,428.0 695.8,384.5 685.4,338.0 682.4,320.0 678.2,275.0 672.7,230.0 669.7,186.5 667.6,168.5 M751.1,703.4 748.7,671.0 742.1,629.0 737.1,584.0 729.6,533.0 726.5,482.0 724.7,464.0 711.4,378.5 701.0,332.0 697.8,312.5 693.6,269.0 688.1,224.0 685.2,180.5 683.1,162.5 M763.2,692.7 761.9,668.0 756.5,624.5 754.5,599.0 743.8,524.0 739.8,462.5 726.5,374.0 716.0,327.5 712.9,309.5 708.4,264.5 702.8,219.5 699.9,176.0 697.9,158.0 M775.6,701.0 776.3,666.5 772.7,620.0 772.6,600.5 767.0,576.9 759.3,530.0 757.2,510.5 754.2,459.5 741.9,375.5 738.3,356.0 730.1,321.5 727.0,303.5 722.6,260.0 716.9,215.0 714.2,171.5 712.2,153.5 M812.4,590.4 798.5,586.7 789.5,581.6 786.0,578.0 783.0,573.5 780.5,567.5 779.0,561.5 771.7,515.0 768.9,465.5 766.6,444.5 754.6,363.5 744.1,317.0 740.5,296.0 736.4,255.5 730.6,210.5 727.9,167.0 726.2,150.5 M788.0,704.0 794.7,647.0 796.6,636.5 798.8,629.0 802.8,621.5 808.7,615.5 815.0,611.6 836.7,600.5 836.9,599.0 835.4,597.5 829.2,594.5 M796.8,569.2 793.1,561.5 785.9,518.0 784.1,500.0 781.0,449.0 768.7,363.5 765.4,345.5 757.2,311.0 754.1,293.0 749.7,251.0 743.8,206.0 739.8,147.5 M800.8,703.2 803.8,687.5 807.9,671.0 812.2,657.5 816.5,647.2 820.7,639.5 825.8,632.0 843.6,612.6 M781.5,361.0 778.8,342.5 770.5,308.0 766.9,287.0 762.5,246.5 756.6,201.5 753.0,146.0 M789.5,416.5 789.4,415.9 M806.7,561.5 798.1,509.0 794.4,450.5 790.0,419.5 M814.7,698.0 820.2,680.0 826.9,663.5 834.6,648.5 845.0,631.8 M794.0,365.0 795.1,351.5 794.9,345.5 786.0,315.5 781.0,293.0 769.2,199.2 M819.3,558.5 809.9,499.4 M794.0,293.3 793.9,292.9 M805.7,375.2 807.5,369.5 812.0,364.3 816.5,362.1 827.4,359.0 834.6,356.0 840.6,351.5 842.0,348.5 840.5,345.6 837.9,344.0 816.5,336.2 810.5,332.4 806.9,329.0 803.0,323.3 800.2,317.0 794.3,294.8 M816.5,386.0 819.5,380.1 823.3,377.0 842.0,369.6 851.0,365.3 867.0,356.0 877.6,348.5 881.8,344.0 882.3,341.0 879.1,338.0 874.8,336.5 M875.0,366.5 902.0,352.0 906.5,348.5 909.5,343.5 M827.1,395.1 830.0,390.8 833.0,388.3 851.0,379.5 M837.7,402.7 843.1,398.0 852.5,392.8 M848.7,410.0 854.0,406.3 M886.5,416.5 887.5,416.0 M912.5,679.5 914.0,677.1 915.5,676.5 917.4,684.5 917.1,690.5 917.9,698.0 916.5,705.5 911.7,714.5 906.5,722.0 899.0,736.7 896.0,741.0 894.5,740.0 895.5,733.0 M909.8,727.7 917.7,707.0 921.0,701.0 923.0,681.6 M908.8,730.2 909.5,728.4 M906.7,735.3 908.0,732.1 M905.6,737.9 906.5,735.8 M904.6,740.4 905.0,739.4 M881.0,433.5 897.4,424.9 M873.5,452.6 881.0,447.7 899.0,439.4 904.9,435.4 M879.3,475.8 878.3,471.5 878.7,468.5 880.3,465.5 882.5,463.1 890.0,458.5 906.5,452.3 909.5,450.2 912.2,447.2 M910.4,489.5 905.0,486.6 899.4,485.4 M920.4,480.1 918.3,471.5 920.0,461.6 M968.5,524.5 968.6,521.9 M963.5,645.9 964.0,637.5 M962.0,663.8 962.6,656.9 M960.5,681.8 960.9,676.6 M959.0,700.0 959.7,691.3 M936.5,760.5 955.8,716.0 957.7,710.0 958.8,702.7 M935.0,763.9 936.1,761.4 M933.5,767.4 933.8,766.7 M889.2,876.5 899.7,863.0 904.4,855.5 923.0,817.3 941.5,783.5 962.6,743.0 970.2,726.5 973.5,717.5 974.9,708.5 975.8,678.5 978.8,642.5 978.6,587.0 979.2,567.5 984.1,518.0 984.2,512.0 M918.3,876.5 925.3,864.5 942.2,824.0 951.0,806.0 968.0,777.2 996.5,735.4 1000.5,728.0 1003.1,720.5 1004.3,714.5 1004.5,707.0 1000.8,680.0 1000.0,668.0 1002.2,620.0 998.4,584.0 997.9,569.0 998.7,558.5 1000.4,548.0 1008.9,516.5 1009.4,512.0 M969.4,834.5 990.3,788.0 1000.8,770.0 1023.9,735.5 1028.9,725.0 1032.0,714.5 1032.9,705.5 1032.7,696.5 1027.9,668.0 1026.9,656.0 1028.6,615.5 1028.5,603.5 1024.5,572.0 1024.1,561.5 1024.8,552.5 1026.4,543.5 1035.5,513.5 M1055.8,590.0 1053.3,560.0 1053.3,548.0 1055.4,534.5 1061.2,513.5 M1024.9,782.1 1032.6,767.0 1047.5,741.5 1054.7,726.2"/>
<path fill="none" stroke="#b096bc" stroke-opacity="0.5" stroke-width="1.3" d="M596.0,544.0 596.4,536.4 M747.2,876.5 742.6,846.5 734.0,801.6 M758.0,876.5 754.6,851.0 747.5,809.2 738.5,764.2 M767.9,876.5 764.0,845.2 748.2,749.0 746.0,728.5 M777.2,876.5 774.5,850.6 759.3,744.5 758.0,726.5 757.4,694.1 M786.2,876.5 784.1,852.5 778.5,812.0 770.7,746.0 769.6,726.5 769.9,699.4 M795.0,876.5 793.3,854.0 787.4,807.5 781.9,749.0 781.2,728.0 782.3,704.3 M822.3,586.8 809.0,583.1 800.0,579.1 M824.3,587.3 823.1,587.0 M848.0,600.6 848.3,599.0 845.9,596.0 837.8,591.5 M803.1,865.9 801.9,849.5 796.3,803.0 793.0,755.0 792.6,729.5 794.8,705.5 M777.8,375.8 777.5,373.1 M815.0,575.6 806.9,570.5 801.9,564.5 M846.5,620.1 862.4,600.5 862.6,599.0 861.7,597.5 858.7,594.5 M811.4,856.1 805.8,804.5 803.6,759.5 804.1,729.5 808.0,702.5 M803.3,483.8 800.6,443.0 790.9,386.0 788.7,363.5 M820.7,569.3 815.7,564.5 814.0,561.0 M845.0,645.4 859.4,621.5 867.2,611.0 876.3,600.5 876.4,599.0 874.2,596.0 M843.5,648.0 844.8,645.7 M819.8,847.7 814.6,798.5 813.9,776.0 814.1,750.5 815.0,734.0 816.7,720.5 819.9,705.5 824.3,690.2 M785.8,272.8 782.4,240.5 776.2,194.0 772.9,144.5 M818.8,512.8 816.3,494.0 812.0,445.7 809.2,428.0 801.7,390.5 800.5,380.0 800.6,372.5 M830.5,566.0 827.1,561.5 826.3,557.0 M828.1,839.4 824.3,804.5 823.6,774.5 825.5,738.5 827.5,725.0 830.1,713.0 838.1,687.5 851.0,658.7 859.5,642.5 869.6,626.0 879.4,612.5 889.6,600.5 889.8,599.0 887.6,596.0 M805.2,308.7 802.0,296.0 799.3,281.0 794.2,236.0 788.8,198.5 787.0,179.0 785.0,144.5 M844.2,336.5 827.0,332.7 821.0,330.2 815.7,326.7 M812.3,401.0 811.2,390.5 811.6,382.6 M841.8,564.5 839.2,560.0 824.9,475.4 M836.5,829.5 833.6,800.0 833.6,771.5 836.4,738.5 841.6,713.0 850.0,687.5 860.7,663.5 871.2,644.0 881.4,627.5 892.3,612.5 902.6,600.5 902.7,599.0 900.5,596.0 M837.6,326.1 828.5,322.1 822.5,316.6 817.9,308.0 814.1,294.5 810.3,273.5 805.7,233.0 799.7,191.0 796.6,144.5 M892.8,333.5 886.7,332.0 M821.2,404.2 821.2,398.0 822.3,392.0 M852.6,563.0 851.3,560.0 844.5,519.5 838.3,494.8 M845.2,820.8 843.1,794.0 843.9,765.5 847.9,734.0 854.1,708.5 864.0,681.5 877.2,654.5 892.6,629.0 909.5,606.7 M843.0,319.0 836.0,314.7 831.5,309.1 827.9,300.5 824.2,285.5 821.1,267.5 816.8,230.0 810.6,186.5 807.8,144.5 M892.8,365.2 905.0,358.3 912.5,351.4 M889.8,366.7 890.2,366.5 M886.7,368.3 887.3,368.0 M852.9,386.4 884.3,369.5 M829.9,411.4 830.7,405.5 832.5,400.5 M864.4,563.0 863.1,560.0 857.1,524.0 851.6,506.0 M853.9,807.6 853.1,785.0 854.7,761.0 858.5,735.5 864.6,711.5 872.3,689.0 882.3,666.5 895.6,642.5 909.5,621.7 M850.4,313.1 844.3,308.0 840.6,302.0 837.6,293.0 834.2,278.0 821.3,183.5 818.7,146.0 M855.5,399.1 896.0,377.2 906.5,369.8 M837.8,419.3 839.6,413.0 842.3,408.5 M875.7,563.0 874.4,560.0 869.0,527.0 866.9,519.5 863.8,512.0 M863.6,790.4 864.5,770.0 866.9,750.5 870.9,729.5 876.2,710.0 882.2,692.0 889.7,674.0 898.0,657.5 909.0,639.0 M858.7,307.8 854.1,303.5 850.7,297.5 847.4,287.0 844.2,272.0 831.6,180.5 829.1,146.0 M844.9,427.9 848.3,420.5 854.0,414.7 863.0,409.1 894.5,391.8 905.0,383.6 M885.9,561.5 880.4,528.5 878.2,521.0 874.5,513.5 M872.8,782.8 879.0,741.5 886.5,711.5 897.0,681.5 911.0,653.0 M867.5,303.5 863.4,299.0 860.4,293.0 857.2,282.5 854.1,267.5 841.5,177.5 839.2,147.5 M851.0,438.2 854.6,431.0 860.0,425.6 869.0,419.8 894.5,405.7 900.5,401.2 905.0,396.6 M896.5,561.5 890.4,525.5 887.7,518.0 883.9,512.0 M921.9,657.9 923.3,650.3 M914.0,666.5 914.0,666.5 M887.9,748.1 892.3,728.0 898.8,705.5 905.0,687.5 912.5,669.5 M883.8,779.0 887.6,769.4 M875.2,298.8 872.0,294.3 869.0,287.0 863.4,263.0 851.1,176.0 848.9,149.0 M895.2,419.7 902.0,414.3 906.5,408.8 M857.0,448.3 859.5,443.0 863.2,438.5 869.0,434.1 879.5,428.1 M906.3,560.0 901.9,531.5 899.6,521.0 896.0,512.5 890.8,506.7 M934.4,572.6 936.6,513.6 M928.3,685.2 928.6,681.1 M926.8,701.7 927.5,694.7 M921.8,714.2 926.0,704.6 M917.1,724.9 921.5,714.8 M915.9,727.6 917.0,725.1 M914.8,730.2 915.5,728.5 M913.6,732.9 914.0,732.0 M912.4,735.6 912.5,735.4 M908.9,743.6 909.5,742.3 M907.8,746.2 908.0,745.7 M882.1,293.4 879.7,288.5 877.2,281.0 872.1,257.0 866.1,212.0 860.3,174.5 858.1,150.5 M902.5,430.0 906.5,425.6 909.5,420.5 M863.2,461.2 864.5,455.9 867.5,451.0 872.0,446.9 877.9,443.1 M917.2,561.5 915.5,555.9 910.0,522.5 907.2,512.0 905.0,507.5 902.0,503.6 894.5,498.8 M889.1,287.9 884.7,273.5 880.5,252.5 874.9,210.5 869.1,173.0 867.0,153.5 M909.5,441.2 913.9,432.4 M874.7,477.2 872.7,471.5 872.8,466.3 M888.2,488.0 886.3,487.3 M919.1,515.9 914.0,502.4 909.4,495.5 906.5,493.2 902.0,491.2 888.6,488.1 M850.4,876.5 876.4,845.0 879.4,840.5 915.0,771.5 943.0,707.0 948.9,641.0 953.5,513.5 M917.0,453.4 919.7,444.2 M923.0,497.1 917.2,486.3 M863.6,876.5 884.7,851.0 888.5,845.1 924.3,776.0 953.1,710.0 954.2,704.0 959.4,642.5 963.6,512.0 M929.5,489.0 926.0,473.0 926.4,458.4 M597.5,546.5 597.4,537.4 M733.9,834.4 732.5,827.1 M740.9,876.5 734.0,835.0 M752.2,876.5 746.0,835.4 735.7,781.8 M762.5,876.5 759.3,851.0 752.0,805.2 741.5,747.1 M772.2,876.5 768.9,848.0 753.4,746.0 751.9,729.5 751.2,707.8 M781.3,876.5 778.8,851.0 764.6,744.5 763.3,725.0 763.2,694.2 M790.1,876.5 788.3,854.0 782.4,809.0 775.9,747.5 774.9,726.5 775.6,702.5 M798.7,873.3 797.0,851.0 791.2,803.0 787.0,752.0 786.4,729.5 787.9,705.5 M816.5,581.2 805.5,576.5 801.0,573.5 797.5,570.0 M845.0,611.1 854.5,600.5 854.6,599.0 853.8,597.5 850.9,594.5 M806.8,860.7 800.6,804.5 797.9,758.0 797.8,729.5 800.5,705.0 M788.8,412.3 784.3,384.5 781.6,362.4 M816.4,572.1 810.5,567.5 807.3,563.0 M846.5,629.6 857.2,614.0 868.5,600.5 868.7,599.0 867.8,597.5 864.8,594.5 M815.1,852.4 809.8,803.0 808.2,758.0 809.3,728.0 811.2,714.5 814.4,699.5 M768.4,190.9 766.2,151.3 M768.7,194.2 768.5,191.9 M809.6,496.1 806.0,444.5 803.2,426.5 795.7,387.5 794.2,375.5 794.0,366.5 M824.7,567.5 821.0,563.5 819.5,560.0 M823.5,844.0 819.2,806.0 818.2,774.5 819.5,738.5 821.1,725.0 823.5,713.0 829.9,690.5 840.0,666.5 851.6,644.0 860.3,629.0 870.8,614.0 882.1,600.5 882.3,599.0 880.1,596.0 M793.2,289.2 781.2,195.5 778.0,144.5 M808.0,403.5 805.5,387.5 805.5,376.5 M835.4,565.1 833.5,563.0 832.3,560.0 824.2,512.0 817.1,454.1 M831.8,835.7 828.4,803.0 828.0,773.0 830.3,738.5 832.4,725.0 835.2,713.0 842.9,689.0 855.4,660.5 865.1,642.5 875.3,626.0 885.0,612.5 895.3,600.5 895.4,599.0 893.2,596.0 M850.7,333.2 834.5,330.5 823.2,326.0 819.1,323.0 815.2,318.5 810.4,308.0 806.8,294.5 803.8,278.0 798.7,234.5 793.6,198.5 791.7,179.0 789.9,144.5 M866.8,335.0 853.8,333.5 M816.2,402.2 815.7,393.5 816.2,387.2 M847.2,564.5 844.6,560.0 839.5,528.5 830.4,483.9 M840.3,825.7 837.7,797.0 838.2,767.0 841.6,735.5 847.9,708.5 856.9,683.0 869.8,656.0 879.1,639.5 888.8,624.5 897.7,612.5 907.9,600.5 908.1,599.0 907.2,597.5 M839.2,322.8 831.0,318.5 825.6,312.5 821.6,303.5 817.8,288.5 814.4,269.0 810.1,231.5 804.2,189.5 801.4,144.5 M909.3,339.3 907.6,336.5 903.9,333.5 M852.5,378.8 872.3,368.0 M825.1,408.1 825.5,401.0 826.6,396.1 M857.8,563.0 856.5,560.0 850.0,521.0 844.1,500.0 M849.0,815.5 847.4,789.5 848.6,764.0 852.4,735.5 858.5,710.5 867.1,686.0 879.0,660.5 893.8,635.0 909.5,612.8 M845.7,316.3 839.0,311.4 834.7,305.0 831.5,296.0 828.0,281.0 815.1,186.5 812.4,144.5 M854.0,392.0 899.0,367.9 909.5,360.3 M833.4,414.9 834.7,408.5 836.9,404.0 M869.4,563.0 868.1,560.0 862.4,525.5 857.1,509.1 M858.0,800.5 857.9,779.0 859.9,756.5 864.0,732.5 869.5,711.5 876.6,690.5 884.9,671.0 896.0,650.0 908.0,630.7 M854.1,310.9 848.8,306.5 845.1,300.5 841.6,290.0 838.2,275.0 825.6,183.5 823.1,146.0 M855.5,405.4 894.5,384.1 900.5,380.2 906.5,375.2 M840.8,423.8 843.5,416.2 847.5,411.0 M880.6,563.0 879.3,560.0 873.9,527.0 871.6,519.5 868.9,513.5 M868.1,784.4 869.7,764.0 872.3,746.0 876.0,728.0 880.9,710.0 886.3,693.5 892.9,677.0 900.2,662.0 909.5,645.4 M862.2,305.8 857.3,300.5 854.4,294.5 851.2,284.0 848.1,269.0 835.8,180.5 833.4,147.5 M847.7,432.2 851.0,425.3 857.0,419.3 866.0,413.6 894.5,397.8 900.5,393.5 905.0,389.2 M890.6,561.5 884.7,527.0 882.3,519.5 879.0,513.5 M876.8,783.5 883.8,740.0 891.9,708.5 902.1,680.0 919.0,644.0 M870.1,300.9 866.5,296.0 863.8,290.0 860.9,279.5 857.8,264.5 845.6,177.5 843.4,148.9 M889.1,415.1 897.5,409.9 905.0,402.6 M854.0,441.5 857.0,435.9 861.7,431.0 869.0,426.0 883.3,418.2 M901.0,561.5 894.6,524.0 891.8,516.5 887.4,510.1 M929.4,576.5 929.0,573.5 927.5,570.4 924.5,572.0 M924.5,668.7 926.0,655.2 M897.8,723.2 904.4,701.0 911.0,682.8 M897.3,725.2 897.5,724.4 M890.7,772.3 899.3,753.2 M877.9,296.1 875.1,291.5 872.3,284.0 867.0,260.0 855.1,176.0 852.8,149.3 M898.3,424.3 903.5,419.6 907.0,415.0 M859.7,453.2 862.2,447.5 866.0,443.0 872.0,438.5 879.5,434.3 M910.5,560.0 905.9,530.0 903.3,518.0 899.0,509.0 892.7,503.3 M885.4,291.6 880.8,279.5 875.7,255.5 864.1,174.5 861.9,152.0 M905.7,434.7 911.0,426.3 M866.9,466.4 868.2,459.5 872.0,454.0 M919.7,545.3 918.5,544.7 917.7,542.0 912.9,516.5 909.3,506.0 906.5,501.6 903.5,498.8 899.0,496.3 893.5,494.5 M938.0,704.7 938.2,703.8 M873.5,178.4 873.3,177.3 M875.0,187.8 874.2,182.7 M876.5,196.9 875.3,189.8 M878.0,206.6 876.5,197.0 M879.5,217.5 878.1,207.6 M881.0,229.6 879.8,219.8 M891.5,284.0 885.6,260.0 881.1,230.1 M912.8,446.3 916.2,437.7 M888.5,483.5 883.0,480.5 M890.6,484.1 888.5,483.5 M921.5,505.5 920.0,504.4 915.5,495.5 911.5,490.5 M855.9,876.5 882.5,843.5 918.8,773.0 946.4,708.5 947.5,702.5 952.5,642.5 957.4,512.0 M920.4,459.9 922.5,450.0 M925.5,493.0 921.3,482.2 M968.8,514.2 968.2,510.5 M964.6,618.9 968.0,534.3 M930.3,774.7 930.5,774.2 M927.7,780.3 929.0,777.7 M877.3,868.2 892.0,849.5 927.5,780.7 M870.4,876.5 873.5,872.8 M932.6,485.9 930.5,474.5 929.9,464.9"/>
</g>
<path filter="url(#b16)" fill="#4c8a8e" fill-opacity="0.7" d="M850,120 L1020,190 L1030,340 L935,356 L900,326 L840,340 L795,300 L825,200Z"/>
<path filter="url(#b16)" fill="#58a878" fill-opacity="0.35" d="M700,120 L860,120 L820,340 L700,330Z"/>
<path filter="url(#b8)" fill="#4a6fb0" fill-opacity="0.35" d="M905,150 L1010,230 L1020,330 L990,330 L960,260 L900,190Z"/>
<path filter="url(#b3)" fill="none" stroke="#6a74cc" stroke-opacity="0.85" stroke-width="11" d="M868,178 Q925,215 952,263 L992,322"/>
<path filter="url(#b3)" fill="none" stroke="#7478c8" stroke-opacity="0.85" stroke-width="12" d="M922,176 Q962,215 985,265 L1004,316"/>
<path filter="url(#b8)" fill="none" stroke="#e6d4ee" stroke-opacity="0.9" stroke-width="26" d="M622,205 Q604,300 600,380 L606,450"/>
<ellipse filter="url(#b8)" cx="618" cy="410" rx="36" ry="58" fill="#e4e2f2" fill-opacity="0.95"/>
<ellipse filter="url(#b3)" cx="615" cy="407" rx="16" ry="33" fill="#4fe654"/>
<ellipse filter="url(#b3)" cx="615" cy="400" rx="6" ry="14" fill="#b9f5b8"/>
<path filter="url(#b8)" fill="#487ea6" fill-opacity="0.78" d="M905,705 L930,690 L925,740 L890,800 L860,880 L800,880 L835,815 L880,750Z"/>
<path filter="url(#b3)" fill="none" stroke="#5a66b4" stroke-opacity="0.6" stroke-width="6" d="M925,690 Q905,750 870,800 Q850,840 830,875"/>
<path filter="url(#b3)" fill="none" stroke="#6a5cae" stroke-opacity="0.7" stroke-width="9" d="M905,735 Q935,725 960,752"/>
<path filter="url(#b3)" fill="#f0ecf8" d="M893,432 Q914,440 922,492 L918,548 Q905,560 894,540 Q886,490 893,432Z"/>
<path filter="url(#b3)" fill="#52e955" fill-opacity="0.9" d="M886,455 Q900,450 905,470 L900,500 Q888,490 886,455Z"/>
<path filter="url(#b8)" fill="#2f8f7a" fill-opacity="0.5" d="M440,512 L552,514 L545,540 L537,566 L541,632 L527,708 L512,745 L440,745Z"/>
<path filter="url(#b8)" fill="#3a8a8a" fill-opacity="0.45" d="M1040,600 L1075,530 L1085,560 L1060,640 L1050,700 L1070,740 L1040,780 L1020,700Z"/>
<path filter="url(#b16)" fill="#4fe055" fill-opacity="0.14" d="M930,530 L1080,530 L1050,760 L960,850 L880,866 L930,700Z"/>
<path filter="url(#b8)" fill="none" stroke="#f4f0fa" stroke-opacity="0.62" stroke-width="17" d="M972,585 Q1000,660 992,775"/>
</g>
<g filter="url(#b3)">
<path d="M657.6,463.0 662.1,452.2 668.3,441.1 675.8,430.1 684.1,419.7 692.8,410.0 702.1,401.1 712.1,392.6 722.8,384.8 734.0,377.8 745.5,371.7 758.2,365.7 772.1,359.6 786.0,354.8 798.7,352.5 808.8,354.0 815.7,360.5 820.3,371.2 823.6,384.3 826.4,397.8 830.0,410.0 834.0,421.2 837.7,432.8 841.6,444.0 845.9,454.3 851.0,463.0 857.6,469.1 865.3,473.1 873.3,476.4 880.6,480.7 886.0,487.7 889.2,498.5 890.8,511.9 891.5,526.4 892.0,540.0 893.0,551.0 894.7,558.5 896.8,563.5 898.7,567.7 899.9,572.4 900.0,579.0 898.9,588.3 896.9,599.4 894.1,611.1 890.5,622.4 886.0,632.0 880.6,640.0 874.4,647.0 867.3,653.2 859.5,658.7 851.0,663.6 841.5,668.0 831.1,671.9 820.0,674.9 808.9,677.0 798.0,677.7 787.4,677.0 776.6,675.1 766.0,672.1 755.6,668.2 745.5,663.6 735.6,658.3 725.9,652.2 716.5,645.3 707.7,637.4 699.8,628.4 692.8,617.9 686.6,605.9 681.1,593.2 676.1,580.5 671.7,568.6 667.8,557.6 664.4,547.1 661.6,536.7 659.3,526.4 657.6,516.0 656.1,505.4 654.9,494.8 654.4,484.2 655.1,473.6Z" fill="#477f8c"/>
</g>
<g clip-path="url(#cSo)">
<g filter="url(#b1)" opacity="0.75">
<path d="M655,488 L693,454" stroke="#4fd860" stroke-width="2.6" fill="none"/>
<path d="M662,480 L700,446" stroke="#4fd860" stroke-width="2.6" fill="none"/>
<path d="M669,473 L707,439" stroke="#4fd860" stroke-width="2.6" fill="none"/>
<path d="M676,466 L714,432" stroke="#4fd860" stroke-width="2.6" fill="none"/>
<path d="M683,458 L721,424" stroke="#4fd860" stroke-width="2.6" fill="none"/>
<path d="M690,450 L728,416" stroke="#4fd860" stroke-width="2.6" fill="none"/>
<path d="M697,443 L735,409" stroke="#4fd860" stroke-width="2.6" fill="none"/>
<path d="M704,436 L742,402" stroke="#4fd860" stroke-width="2.6" fill="none"/>
<path d="M711,428 L749,394" stroke="#4fd860" stroke-width="2.6" fill="none"/>
<path d="M718,420 L756,386" stroke="#4fd860" stroke-width="2.6" fill="none"/>
<path d="M725,413 L763,379" stroke="#4fd860" stroke-width="2.6" fill="none"/>
<path d="M732,406 L770,372" stroke="#4fd860" stroke-width="2.6" fill="none"/>
<path d="M739,398 L777,364" stroke="#4fd860" stroke-width="2.6" fill="none"/>
<path d="M746,390 L784,356" stroke="#4fd860" stroke-width="2.6" fill="none"/>
<path d="M753,383 L791,349" stroke="#4fd860" stroke-width="2.6" fill="none"/>
<path d="M760,376 L798,342" stroke="#4fd860" stroke-width="2.6" fill="none"/>
</g>
<ellipse filter="url(#b16)" cx="800" cy="520" rx="70" ry="70" fill="#3f6a9a" fill-opacity="0.8"/>
<ellipse filter="url(#b8)" cx="860" cy="620" rx="30" ry="24" fill="#2f5a88" fill-opacity="0.8"/>
<rect x="640" y="340" width="280" height="350" filter="url(#mB)"/>
<rect x="640" y="340" width="280" height="350" filter="url(#mG)" opacity="0.8"/>
<rect x="640" y="340" width="280" height="350" filter="url(#mP)" opacity="0.7"/>
<g filter="url(#b3)">
<ellipse cx="715" cy="600" rx="22" ry="7" transform="rotate(10 715 600)" fill="#55e05e" fill-opacity="0.75"/>
<ellipse cx="750" cy="640" rx="26" ry="9" transform="rotate(15 750 640)" fill="#55e05e" fill-opacity="0.75"/>
<ellipse cx="790" cy="652" rx="24" ry="8" transform="rotate(-10 790 652)" fill="#55e05e" fill-opacity="0.75"/>
<ellipse cx="700" cy="560" rx="14" ry="6" transform="rotate(0 700 560)" fill="#55e05e" fill-opacity="0.75"/>
<ellipse cx="725" cy="430" rx="18" ry="6" transform="rotate(-30 725 430)" fill="#55e05e" fill-opacity="0.75"/>
<ellipse cx="770" cy="415" rx="14" ry="5" transform="rotate(-15 770 415)" fill="#55e05e" fill-opacity="0.75"/>
<ellipse cx="760" cy="668" rx="30" ry="5" transform="rotate(5 760 668)" fill="#55e05e" fill-opacity="0.75"/>
</g>
</g>
<path filter="url(#b1)" d="M657.6,463.0 662.1,452.2 668.3,441.1 675.8,430.1 684.1,419.7 692.8,410.0 702.1,401.1 712.1,392.6 722.8,384.8 734.0,377.8 745.5,371.7 758.2,365.7 772.1,359.6 786.0,354.8 798.7,352.5 808.8,354.0 815.7,360.5 820.3,371.2 823.6,384.3 826.4,397.8 830.0,410.0 834.0,421.2 837.7,432.8 841.6,444.0 845.9,454.3 851.0,463.0 857.6,469.1 865.3,473.1 873.3,476.4 880.6,480.7 886.0,487.7 889.2,498.5 890.8,511.9 891.5,526.4 892.0,540.0 893.0,551.0 894.7,558.5 896.8,563.5 898.7,567.7 899.9,572.4 900.0,579.0 898.9,588.3 896.9,599.4 894.1,611.1 890.5,622.4 886.0,632.0 880.6,640.0 874.4,647.0 867.3,653.2 859.5,658.7 851.0,663.6 841.5,668.0 831.1,671.9 820.0,674.9 808.9,677.0 798.0,677.7 787.4,677.0 776.6,675.1 766.0,672.1 755.6,668.2 745.5,663.6 735.6,658.3 725.9,652.2 716.5,645.3 707.7,637.4 699.8,628.4 692.8,617.9 686.6,605.9 681.1,593.2 676.1,580.5 671.7,568.6 667.8,557.6 664.4,547.1 661.6,536.7 659.3,526.4 657.6,516.0 656.1,505.4 654.9,494.8 654.4,484.2 655.1,473.6Z" fill="none" stroke="#5d68b8" stroke-opacity="0.75" stroke-width="3.5"/>
<path d="M983.0,237.0 986.0,234.8 991.0,235.2 997.2,237.2 1004.0,240.0 1011.6,243.5 1020.3,248.1 1029.1,253.7 1037.0,260.0 1043.6,267.1 1049.5,274.9 1055.1,283.6 1061.0,293.0 1067.3,303.3 1073.8,314.5 1080.1,326.2 1086.0,338.0 1091.5,349.7 1096.6,361.4 1101.5,373.7 1106.0,387.0 1110.4,401.9 1114.6,418.0 1118.3,434.1 1121.0,449.0 1122.5,463.1 1123.1,476.9 1123.1,488.9 1123.0,498.0 1123.6,503.0 1124.5,504.8 1124.1,505.2 1121.0,506.0 1114.9,507.3 1106.6,508.4 1096.0,509.5 1083.0,511.0 1066.1,513.5 1045.8,516.6 1025.1,519.4 1007.0,521.0 991.9,521.0 978.3,520.1 966.3,518.3 956.0,516.0 947.8,513.4 941.6,510.4 936.4,506.5 931.0,501.0 925.1,493.5 919.2,484.4 914.0,474.6 910.0,465.0 907.3,455.8 905.7,446.4 905.0,436.9 905.0,427.0 905.9,416.4 907.6,405.2 910.0,394.2 913.0,384.0 915.5,375.0 917.9,366.6 922.3,358.7 931.0,351.0 947.4,343.3 969.4,335.8 990.7,328.7 1005.0,322.0 1009.4,316.2 1007.8,311.1 1003.5,305.9 1000.0,300.0 997.8,293.1 995.1,285.7 992.4,277.9 990.0,270.0 987.4,261.1 984.6,251.4 982.7,242.8Z" fill="#8068b4"/>
<g clip-path="url(#cPu)">
<path filter="url(#b3)" fill="#46446f" fill-opacity="0.92" d="M980,226 L1006,244 L1040,266 L1062,293 L1080,328 L1049,313 L1012,319 L1004,312 L990,268Z"/>
<path filter="url(#b3)" fill="none" stroke="#a794d0" stroke-opacity="0.75" stroke-width="11" d="M1012,255 Q1050,280 1078,335"/>
<path filter="url(#b8)" fill="#7a86dc" fill-opacity="0.55" d="M1085,330 L1125,450 L1125,510 L1100,440 L1070,360Z"/>
<path filter="url(#b3)" fill="none" stroke="#8c94dc" stroke-opacity="0.6" stroke-width="6" d="M925,362 L965,333 L1012,318 L1052,312"/>
<ellipse filter="url(#b3)" cx="1082" cy="338" rx="48" ry="50" fill="none" stroke="#a4529e" stroke-opacity="0.38" stroke-width="12"/>
<ellipse filter="url(#b3)" cx="1082" cy="338" rx="72" ry="76" fill="none" stroke="#5f78c8" stroke-opacity="0.35" stroke-width="12"/>
<ellipse filter="url(#b3)" cx="1082" cy="338" rx="96" ry="101" fill="none" stroke="#a4529e" stroke-opacity="0.38" stroke-width="12"/>
<ellipse filter="url(#b3)" cx="1082" cy="338" rx="120" ry="126" fill="none" stroke="#5f78c8" stroke-opacity="0.35" stroke-width="12"/>
<ellipse filter="url(#b3)" cx="1082" cy="338" rx="144" ry="151" fill="none" stroke="#a0589e" stroke-opacity="0.38" stroke-width="12"/>
<ellipse filter="url(#b3)" cx="1082" cy="338" rx="168" ry="176" fill="none" stroke="#5f78c8" stroke-opacity="0.3" stroke-width="12"/>
<ellipse filter="url(#b3)" cx="1082" cy="338" rx="192" ry="202" fill="none" stroke="#a0589e" stroke-opacity="0.35" stroke-width="12"/>
<path filter="url(#b3)" fill="#6b78d0" fill-opacity="0.85" d="M935,500 L1125,478 L1125,512 L1000,524 L950,518Z"/>
<path filter="url(#b3)" fill="#8a6cc0" fill-opacity="0.6" d="M905,400 L935,350 L960,345 L930,420 L935,500 L912,470Z"/>
<path filter="url(#b3)" fill="#4fe654" d="M1022,340 L1062,328 L1088,352 L1092,378 L1058,384 L1064,360 L1030,356Z"/>
<path filter="url(#b1)" fill="#f4eaf8" d="M1068,346 L1084,352 L1089,374 L1062,376Z"/>
</g>
<path filter="url(#b1)" d="M983.0,237.0 986.0,234.8 991.0,235.2 997.2,237.2 1004.0,240.0 1011.6,243.5 1020.3,248.1 1029.1,253.7 1037.0,260.0 1043.6,267.1 1049.5,274.9 1055.1,283.6 1061.0,293.0 1067.3,303.3 1073.8,314.5 1080.1,326.2 1086.0,338.0 1091.5,349.7 1096.6,361.4 1101.5,373.7 1106.0,387.0 1110.4,401.9 1114.6,418.0 1118.3,434.1 1121.0,449.0 1122.5,463.1 1123.1,476.9 1123.1,488.9 1123.0,498.0 1123.6,503.0 1124.5,504.8 1124.1,505.2 1121.0,506.0 1114.9,507.3 1106.6,508.4 1096.0,509.5 1083.0,511.0 1066.1,513.5 1045.8,516.6 1025.1,519.4 1007.0,521.0 991.9,521.0 978.3,520.1 966.3,518.3 956.0,516.0 947.8,513.4 941.6,510.4 936.4,506.5 931.0,501.0 925.1,493.5 919.2,484.4 914.0,474.6 910.0,465.0 907.3,455.8 905.7,446.4 905.0,436.9 905.0,427.0 905.9,416.4 907.6,405.2 910.0,394.2 913.0,384.0 915.5,375.0 917.9,366.6 922.3,358.7 931.0,351.0 947.4,343.3 969.4,335.8 990.7,328.7 1005.0,322.0 1009.4,316.2 1007.8,311.1 1003.5,305.9 1000.0,300.0 997.8,293.1 995.1,285.7 992.4,277.9 990.0,270.0 987.4,261.1 984.6,251.4 982.7,242.8Z" fill="none" stroke="#7f86d8" stroke-opacity="0.7" stroke-width="3"/>
<path d="M689,159.5h2M653,171.5h8M651,172.5h7M635,178.5h8M635,183.5h3M627,188.5h2M624,191.5h5M620,193.5h3M612,200.5h7M606,205.5h2M597,206.5h6M593,207.5h8M604,207.5h2M603,209.5h2M598,210.5h5M600,211.5h7M598,212.5h7M597,212.5h4M591,213.5h3M594,214.5h8M579,220.5h2M579,222.5h8M580,224.5h4M562,225.5h4M576,226.5h8M571,231.5h6M561,233.5h5M565,234.5h3M564,234.5h5M561,237.5h8M563,238.5h2M557,239.5h6M556,244.5h2M554,245.5h5M558,245.5h3M555,246.5h8M554,247.5h5M552,247.5h2M545,247.5h7M551,249.5h4M541,254.5h8M541,259.5h3M542,260.5h5M539,262.5h8M532,262.5h4M534,263.5h6M536,264.5h7M529,275.5h8M526,276.5h8M521,277.5h2M519,282.5h6M521,282.5h5M525,283.5h5M515,288.5h7M515,288.5h7M511,292.5h3M509,295.5h3M509,298.5h7M510,299.5h8M514,300.5h6M514,301.5h3M511,302.5h7M504,303.5h2M511,303.5h6M504,304.5h6M501,304.5h3M506,304.5h8M506,305.5h7M506,307.5h2M493,309.5h5M499,310.5h7M510,311.5h4M504,319.5h6M500,321.5h8M499,322.5h8M503,325.5h4M499,326.5h4M501,326.5h3M489,328.5h3M495,330.5h7M498,331.5h7M496,337.5h4M487,340.5h7M490,340.5h8M496,344.5h2M487,346.5h4M485,354.5h7M480,355.5h2M486,357.5h2M479,358.5h6M489,358.5h4M488,358.5h4M486,360.5h6M485,361.5h2M475,363.5h8M477,366.5h8M484,367.5h5M485,367.5h3M480,369.5h8M481,371.5h2M484,371.5h3M475,372.5h4M474,373.5h4M468,375.5h4M477,376.5h3M476,377.5h6M476,379.5h8M480,380.5h4M480,381.5h2M470,382.5h8M478,384.5h6M479,384.5h4M475,386.5h5M478,387.5h3M476,388.5h3M464,388.5h4M475,391.5h5M464,391.5h8M475,392.5h5M470,392.5h6M473,393.5h7M472,396.5h3M468,397.5h5M474,398.5h5M462,403.5h6M468,406.5h6M467,407.5h7M465,410.5h2M467,411.5h4M469,411.5h6M466,418.5h4M463,419.5h3M469,419.5h3M470,420.5h2M466,424.5h4M459,425.5h2M465,427.5h8M466,428.5h2M455,430.5h7M457,431.5h8M464,432.5h6M450,434.5h8M461,441.5h3M461,442.5h6M455,444.5h7M449,447.5h4M460,447.5h5M458,450.5h6M457,450.5h7M455,451.5h5M459,452.5h6M451,454.5h7M457,455.5h3M455,455.5h6M459,455.5h2M446,460.5h2M454,461.5h7M458,463.5h3M455,463.5h6M449,464.5h4M456,464.5h5M458,465.5h3M455,465.5h2M458,466.5h2M455,470.5h2M450,472.5h6M449,474.5h4M453,474.5h6M454,477.5h5M456,480.5h3M454,480.5h5M452,481.5h6M442,481.5h7M453,483.5h5M454,483.5h4M451,485.5h2M454,486.5h5M454,486.5h2M446,492.5h5M447,495.5h7M452,496.5h4M447,500.5h3M453,500.5h2M445,501.5h7M445,502.5h7M446,504.5h8M441,505.5h4M448,505.5h8M446,506.5h8M438,508.5h7M441,509.5h5M440,511.5h5M436,512.5h7M448,513.5h6M450,525.5h6M446,525.5h8M448,525.5h6M447,526.5h4M447,528.5h3M447,529.5h8M441,531.5h7M446,531.5h6M450,532.5h2M448,532.5h7M450,534.5h3M441,535.5h8M445,538.5h6M437,539.5h5M449,545.5h4M442,546.5h8M446,547.5h4M440,548.5h8M448,548.5h8M438,548.5h7M451,552.5h3M447,552.5h4M445,553.5h7M433,554.5h6M450,556.5h6M453,556.5h2M438,560.5h8M447,564.5h4M452,564.5h5M449,568.5h7M439,569.5h2M448,571.5h6M453,571.5h6M451,572.5h5M451,574.5h4M449,578.5h7M448,581.5h7M451,583.5h7M450,584.5h3M453,585.5h2M455,586.5h4M450,592.5h5M455,595.5h3M450,596.5h8M447,597.5h5M452,598.5h6M454,601.5h8M458,601.5h3M454,606.5h5M449,607.5h5M459,609.5h2M456,619.5h8M453,622.5h6M457,622.5h2M459,625.5h5M457,627.5h6M455,628.5h4M459,628.5h2M449,629.5h5M464,629.5h3M458,633.5h2M461,633.5h5M466,637.5h2M450,638.5h2M462,639.5h2M466,641.5h6M455,642.5h8M468,645.5h4M458,646.5h5M460,646.5h6M468,647.5h6M467,647.5h6M458,648.5h2M466,649.5h7M471,650.5h2M468,651.5h4M465,651.5h8M463,652.5h8M468,654.5h8M471,655.5h2M471,655.5h3M472,659.5h5M457,659.5h7M474,661.5h6M472,662.5h6M461,665.5h7M471,667.5h7M475,670.5h5M473,671.5h7M474,672.5h5M476,675.5h3M481,675.5h2M475,681.5h6M475,685.5h4M477,685.5h4M481,685.5h6M480,686.5h8M476,688.5h5M479,695.5h6M486,695.5h5M486,697.5h6M488,698.5h8M488,700.5h6M489,702.5h5M491,704.5h6M492,714.5h8M499,715.5h3M496,716.5h8M499,716.5h2M497,719.5h4M501,719.5h4M496,721.5h3M489,723.5h6M495,724.5h5M495,728.5h6M500,729.5h6M502,729.5h3M500,733.5h3M501,733.5h6M504,736.5h5M508,739.5h7M501,742.5h5M511,743.5h5M510,746.5h7M516,747.5h3M514,748.5h3M514,748.5h4M519,754.5h4M520,754.5h4M519,759.5h5M504,759.5h6M524,764.5h7M522,765.5h2M513,770.5h8M529,773.5h4M527,774.5h6M531,774.5h3M526,778.5h2M533,782.5h4M534,789.5h5M554,801.5h5M552,801.5h2M551,804.5h4M570,817.5h2M569,818.5h4M576,821.5h2M566,821.5h5M569,824.5h8M588,831.5h4M590,834.5h7M599,835.5h2M595,838.5h3M601,839.5h3M591,840.5h3M615,843.5h2M601,844.5h8M610,845.5h2M616,845.5h2M614,850.5h5M621,850.5h5M628,853.5h5M634,857.5h5M638,859.5h7" stroke="#e8f4ea" stroke-width="1" fill="none"/><path d="M679,161.5h2M667,162.5h8M676,163.5h3M634,179.5h7M633,182.5h6M629,183.5h2M621,187.5h4M629,187.5h4M607,201.5h7M611,202.5h4M598,205.5h5M597,210.5h4M592,214.5h6M597,214.5h3M587,216.5h7M593,216.5h6M585,218.5h2M575,220.5h5M580,221.5h7M584,222.5h2M572,228.5h4M567,228.5h5M570,233.5h6M566,234.5h7M565,234.5h5M554,237.5h2M559,240.5h3M553,244.5h2M552,245.5h8M542,247.5h3M548,249.5h5M541,251.5h6M551,251.5h3M543,252.5h8M540,257.5h8M540,258.5h2M541,260.5h3M537,262.5h3M537,263.5h7M532,267.5h2M532,271.5h4M525,278.5h7M525,279.5h2M522,285.5h7M513,286.5h5M515,288.5h5M512,292.5h7M514,294.5h7M515,297.5h8M514,299.5h2M503,300.5h4M508,302.5h3M513,302.5h8M514,303.5h2M499,309.5h6M509,310.5h6M503,313.5h2M499,317.5h7M503,320.5h4M498,326.5h4M491,327.5h6M489,328.5h2M488,337.5h4M491,338.5h3M494,338.5h4M490,340.5h4M482,341.5h8M485,343.5h4M494,343.5h3M487,343.5h8M491,344.5h4M490,347.5h8M489,348.5h3M491,348.5h8M492,348.5h6M490,349.5h4M490,352.5h8M489,353.5h5M484,361.5h4M485,363.5h7M484,365.5h7M484,370.5h6M467,371.5h7M478,372.5h7M483,377.5h3M473,378.5h5M476,381.5h6M474,383.5h5M476,387.5h3M471,389.5h4M475,395.5h5M469,396.5h6M463,399.5h2M472,400.5h3M467,402.5h8M471,406.5h5M467,406.5h2M470,407.5h6M463,409.5h4M469,411.5h8M464,412.5h8M468,416.5h5M458,416.5h2M464,420.5h8M463,423.5h6M463,426.5h8M455,434.5h8M458,434.5h7M458,436.5h2M457,436.5h2M453,437.5h5M461,441.5h5M460,443.5h8M456,444.5h8M458,445.5h8M457,446.5h8M460,446.5h4M459,448.5h3M447,449.5h8M456,455.5h2M455,458.5h5M455,460.5h4M455,461.5h5M456,462.5h8M459,463.5h3M458,464.5h5M438,465.5h6M450,465.5h5M452,469.5h5M452,472.5h4M453,473.5h8M457,474.5h3M449,475.5h6M455,476.5h5M455,478.5h3M453,479.5h4M446,483.5h6M450,491.5h8M453,491.5h5M449,497.5h5M446,498.5h7M444,499.5h4M449,503.5h7M440,504.5h5M441,504.5h7M442,509.5h8M443,510.5h4M437,510.5h3M449,511.5h3M447,511.5h5M447,513.5h8M436,514.5h8M435,528.5h4M446,538.5h2M445,539.5h8M450,544.5h4M451,546.5h5M448,548.5h6M443,548.5h7M445,553.5h3M444,555.5h4M452,558.5h2M448,562.5h7M453,563.5h4M446,563.5h6M438,565.5h8M453,567.5h2M448,568.5h4M449,568.5h2M450,573.5h6M451,573.5h5M455,577.5h3M440,579.5h5M442,579.5h8M444,580.5h5M450,583.5h2M452,584.5h7M455,584.5h2M449,585.5h8M456,586.5h4M456,589.5h2M452,593.5h2M451,600.5h5M458,602.5h6M450,605.5h8M453,611.5h4M459,611.5h4M456,613.5h3M460,615.5h3M452,618.5h8M459,618.5h6M454,626.5h8M457,627.5h4M463,629.5h3M465,633.5h6M464,633.5h8M463,638.5h5M465,642.5h2M459,647.5h3M465,649.5h4M466,649.5h8M465,650.5h7M464,653.5h7M469,654.5h3M468,657.5h6M471,660.5h3M475,664.5h2M470,664.5h4M470,665.5h4M473,669.5h3M476,670.5h6M470,670.5h5M474,671.5h2M474,673.5h6M479,678.5h8M471,680.5h4M477,682.5h2M481,684.5h4M478,687.5h6M485,691.5h5M468,692.5h6M486,696.5h3M489,697.5h6M485,705.5h6M496,710.5h2M493,716.5h7M495,719.5h2M488,720.5h5M483,721.5h8M499,723.5h7M501,723.5h5M495,727.5h5M501,732.5h7M501,733.5h7M506,736.5h4M504,736.5h4M506,737.5h5M503,737.5h3M506,739.5h6M505,742.5h7M498,743.5h8M517,748.5h3M512,749.5h6M528,766.5h3M531,774.5h6M534,778.5h4M558,804.5h3M564,814.5h6M565,819.5h6M577,822.5h3M569,824.5h8M579,825.5h8M570,827.5h6M578,829.5h8M582,831.5h5M589,832.5h6M608,849.5h6M638,858.5h7M638,863.5h8" stroke="#58e25c" stroke-width="1" fill="none"/><path d="M690,159.5h2M687,160.5h4M684,161.5h5M681,162.5h7M672,165.5h5M667,167.5h3M662,169.5h7M659,170.5h7M657,171.5h6M653,173.5h7M651,174.5h3M649,175.5h3M645,177.5h4M644,178.5h2M641,180.5h7M638,182.5h5M637,183.5h2M635,184.5h3M634,185.5h2M631,187.5h5M630,188.5h2M629,189.5h5M627,191.5h6M622,195.5h12M616,200.5h4M614,202.5h11M613,203.5h3M605,209.5h5M604,210.5h7M603,211.5h3M601,212.5h7M600,213.5h2M597,215.5h2M594,217.5h4M592,218.5h6M591,219.5h6M589,220.5h3M588,221.5h2M582,225.5h12M580,226.5h4M576,229.5h5M575,230.5h2M573,232.5h12M572,233.5h6M571,234.5h8M567,237.5h4M565,239.5h7M563,241.5h6M561,243.5h3M559,245.5h3M557,247.5h4M556,248.5h5M555,249.5h7M554,250.5h7M553,251.5h3M550,254.5h4M549,255.5h4M548,256.5h6M547,257.5h7M546,258.5h3M545,260.5h4M543,262.5h2M542,263.5h12M541,264.5h9M540,265.5h7M539,267.5h9M538,268.5h3M535,272.5h10M534,273.5h7M533,274.5h13M533,275.5h2M532,276.5h2M531,277.5h2M530,278.5h6M530,279.5h4M529,281.5h7M528,282.5h7M527,284.5h6M525,286.5h2M525,287.5h5M524,289.5h3M523,290.5h3M522,291.5h8M522,292.5h7M520,295.5h5M519,297.5h5M518,299.5h7M517,300.5h2M516,302.5h6M514,306.5h7M513,307.5h7M512,309.5h2M512,310.5h5M511,311.5h4M510,314.5h2M509,316.5h8M508,317.5h3M507,319.5h5M507,320.5h6M506,321.5h7M506,322.5h7M505,324.5h4M504,326.5h3M503,327.5h5M503,328.5h5M503,329.5h2M502,330.5h6M502,331.5h9M501,333.5h2M500,334.5h4M500,335.5h7M499,336.5h6M498,339.5h6M497,341.5h7M496,344.5h7M495,346.5h5M495,347.5h6M494,349.5h6M493,351.5h5M493,352.5h7M493,353.5h6M492,355.5h12M491,356.5h3M491,357.5h5M490,359.5h7M490,360.5h8M490,361.5h5M489,363.5h4M488,364.5h7M488,365.5h7M488,366.5h11M487,367.5h6M486,370.5h3M486,371.5h4M485,374.5h4M484,377.5h5M482,383.5h4M481,384.5h6M481,385.5h5M481,386.5h12M480,387.5h4M480,388.5h5M480,389.5h6M479,390.5h4M479,392.5h7M478,393.5h4M477,396.5h2M476,401.5h2M474,405.5h6M474,407.5h5M473,408.5h3M473,411.5h2M472,413.5h5M472,414.5h4M471,416.5h5M470,418.5h6M470,419.5h8M470,421.5h2M469,423.5h5M469,424.5h4M468,425.5h3M468,428.5h3M466,432.5h10M466,434.5h4M466,435.5h12M465,437.5h3M464,440.5h3M464,444.5h7M463,447.5h5M463,448.5h8M462,451.5h7M462,453.5h7M461,454.5h3M461,456.5h4M461,457.5h6M461,459.5h5M460,464.5h6M459,465.5h2M459,466.5h11M459,467.5h12M459,468.5h7M459,469.5h6M459,470.5h2M458,471.5h6M458,472.5h4M458,473.5h4M458,476.5h2M457,479.5h3M457,480.5h5M457,481.5h9M457,482.5h10M457,483.5h6M456,484.5h2M456,485.5h6M456,486.5h5M456,487.5h10M456,488.5h7M455,491.5h5M455,493.5h4M454,496.5h3M453,500.5h4M452,503.5h8M452,504.5h8M452,515.5h4M452,519.5h6M452,523.5h12M452,524.5h3M452,525.5h9M452,526.5h4M452,530.5h6M452,533.5h4M452,534.5h7M452,535.5h5M453,539.5h2M453,546.5h4M453,547.5h3M453,548.5h3M453,549.5h10M454,552.5h7M454,553.5h6M454,554.5h5M454,556.5h3M454,557.5h2M454,560.5h5M455,564.5h5M455,565.5h6M455,566.5h3M455,568.5h4M455,569.5h3M456,574.5h7M456,575.5h6M456,577.5h5M456,578.5h5M456,580.5h2M457,581.5h2M457,583.5h4M457,584.5h3M457,586.5h2M458,590.5h5M458,592.5h5M459,595.5h5M459,596.5h4M460,602.5h4M460,603.5h5M460,606.5h7M461,608.5h5M461,609.5h2M461,610.5h2M462,613.5h7M462,616.5h6M463,619.5h6M463,620.5h4M464,622.5h7M464,624.5h2M465,625.5h2M465,626.5h3M467,633.5h3M467,634.5h7M468,637.5h6M469,641.5h3M470,643.5h5M470,644.5h4M470,645.5h3M471,646.5h3M472,651.5h4M473,653.5h3M474,656.5h12M475,658.5h6M475,660.5h10M476,661.5h10M477,664.5h4M477,665.5h7M479,669.5h9M479,671.5h4M480,672.5h7M480,673.5h2M481,674.5h10M481,676.5h12M482,677.5h5M482,678.5h4M483,679.5h2M483,680.5h7M483,681.5h3M484,683.5h2M485,684.5h3M486,687.5h6M487,688.5h4M487,689.5h6M488,691.5h6M488,692.5h5M490,695.5h7M491,697.5h4M491,698.5h7M492,699.5h7M492,700.5h4M495,706.5h5M496,707.5h5M497,710.5h7M498,712.5h2M499,713.5h5M499,714.5h7M500,715.5h7M500,716.5h10M501,718.5h4M502,719.5h4M503,721.5h6M504,723.5h4M504,724.5h5M506,727.5h7M506,728.5h9M507,729.5h10M509,732.5h12M510,734.5h5M510,735.5h7M511,737.5h7M512,738.5h2M514,742.5h2M515,744.5h4M516,745.5h12M516,746.5h2M517,747.5h7M518,749.5h3M523,757.5h5M525,760.5h6M526,762.5h6M527,763.5h4M528,764.5h3M528,765.5h3M530,767.5h7M531,768.5h10M534,772.5h7M536,775.5h5M537,777.5h7M539,779.5h6M540,780.5h7M540,781.5h4M542,783.5h2M543,784.5h6M544,785.5h7M544,786.5h3M545,787.5h3M549,792.5h7M552,796.5h2M554,798.5h7M558,802.5h3M559,803.5h7M559,804.5h3M560,805.5h3M561,806.5h12M563,808.5h3M564,809.5h7M565,810.5h5M568,813.5h5M570,815.5h4M571,816.5h6M576,821.5h5M578,822.5h7M580,824.5h4M583,826.5h9M586,828.5h10M589,830.5h3M597,834.5h9M599,835.5h5M601,836.5h4M603,837.5h3M605,838.5h3M611,841.5h6M613,842.5h4M618,845.5h2M620,846.5h5M623,848.5h12M625,849.5h5M627,850.5h4M636,855.5h5M644,860.5h5M645,862.5h5" stroke="#000" stroke-width="1" fill="none"/><path d="M450,675.5h1M496,853.5h1M424,635.5h1M439,445.5h3M425,456.5h3M394,488.5h1M525,242.5h3M485,340.5h3M354,525.5h3M421,468.5h1M289,296.5h1M439,686.5h1M491,289.5h3M430,597.5h2M473,666.5h1M496,756.5h3M514,845.5h1M287,582.5h3M429,176.5h2M307,725.5h2M470,191.5h2M437,270.5h1M522,243.5h3M452,577.5h1M461,821.5h1M407,539.5h2M346,483.5h1M415,610.5h3M299,531.5h1M423,559.5h3M434,751.5h1M410,821.5h3M448,344.5h1M400,316.5h3M414,523.5h3M354,642.5h2M263,532.5h1M421,433.5h2M388,713.5h3M470,408.5h3M443,364.5h2M309,475.5h2M265,511.5h3M424,155.5h2M505,738.5h2M525,871.5h3M325,556.5h3M351,730.5h1M301,378.5h3M463,328.5h3M417,492.5h1M421,208.5h1M432,269.5h3M462,222.5h1M514,754.5h1M381,412.5h1M414,152.5h1M535,853.5h1M364,411.5h2M285,380.5h2M393,332.5h2M485,704.5h3M352,396.5h2M303,394.5h3M398,184.5h2M546,855.5h2M382,352.5h2M373,480.5h1M406,574.5h3M404,531.5h3M387,711.5h1M378,778.5h2M415,520.5h2M364,272.5h3M301,790.5h3M483,156.5h3M460,637.5h1M447,391.5h1M327,519.5h2M286,805.5h1M446,522.5h3M469,704.5h3M461,412.5h1M521,836.5h2M409,531.5h2M461,345.5h2M394,303.5h2M442,388.5h1M424,313.5h3M456,780.5h2M516,751.5h2M338,492.5h3M453,543.5h1M354,537.5h3M328,349.5h3M302,206.5h2M473,338.5h1M418,385.5h2M329,277.5h2M392,291.5h3M302,628.5h3M325,454.5h3M437,798.5h1M431,762.5h1M344,464.5h1M474,398.5h2M424,551.5h3M489,779.5h3M351,531.5h1M458,679.5h2M281,579.5h2M550,151.5h2M429,516.5h2M358,505.5h2M338,278.5h3M354,543.5h1M539,838.5h3M512,876.5h1M333,314.5h2M415,694.5h3M337,780.5h2M553,798.5h2M387,649.5h1M384,628.5h3M444,263.5h3M450,805.5h2M499,842.5h1M401,508.5h1M460,289.5h2M418,730.5h2M468,702.5h2M489,761.5h2M409,615.5h2M456,446.5h3M451,369.5h3M273,326.5h1M503,243.5h3M321,618.5h1M341,656.5h2M329,207.5h3M404,730.5h2M282,377.5h2M525,785.5h3M434,392.5h3M262,185.5h2M363,416.5h1M497,212.5h2M314,557.5h2M477,757.5h3M356,833.5h2M495,742.5h1M447,791.5h1M354,154.5h3M382,757.5h2M384,476.5h2M502,165.5h2M426,504.5h3M388,857.5h3M346,530.5h2M290,341.5h2M421,219.5h1M326,448.5h3M270,242.5h2M453,716.5h1M280,515.5h3M466,690.5h1M467,360.5h1M524,289.5h2M459,353.5h1M480,312.5h1M412,744.5h3M278,771.5h1M398,386.5h1M316,445.5h3M371,170.5h1M367,620.5h3M465,403.5h1M321,618.5h3M408,491.5h1M485,204.5h1M272,396.5h3M376,350.5h3M445,590.5h2M351,602.5h3M391,463.5h2M433,206.5h1M372,518.5h2M428,831.5h1M456,591.5h1M302,514.5h1M408,384.5h3M513,185.5h1M530,846.5h2M509,804.5h1M339,396.5h3M470,649.5h1M291,380.5h2M311,234.5h3M292,554.5h1M412,218.5h3M403,154.5h2M470,660.5h2M473,404.5h4M592,168.5h2M599,166.5h1M585,168.5h3M562,163.5h3M582,143.5h1M586,149.5h3M574,157.5h4M517,184.5h1M518,183.5h1M534,188.5h3M532,189.5h4M505,185.5h1M535,191.5h4M505,290.5h2M494,271.5h3M508,269.5h1M510,280.5h4M490,278.5h4M493,281.5h4M510,271.5h2M473,386.5h4M474,384.5h3M453,386.5h3M414,383.5h4M442,386.5h3M442,381.5h3M445,383.5h1M438,384.5h2M480,233.5h2M470,227.5h1M468,232.5h4M476,234.5h1M474,230.5h4M475,230.5h1M483,249.5h1M463,253.5h1M471,252.5h3M475,262.5h1M468,256.5h2M591,217.5h3M588,217.5h2M588,218.5h1M517,225.5h4M503,230.5h1M471,312.5h2M471,317.5h1M450,324.5h4M465,311.5h2M460,311.5h4M544,197.5h1M528,194.5h2M519,197.5h2M518,193.5h2M532,197.5h1M534,198.5h3M538,264.5h4M529,260.5h1M538,257.5h4M542,261.5h3M542,258.5h4M530,252.5h3M526,157.5h1M511,155.5h4M507,149.5h1M513,156.5h3M504,156.5h2M488,160.5h4M526,230.5h3M521,230.5h2M454,443.5h4M446,442.5h1M460,443.5h1M449,460.5h4M452,459.5h4M455,458.5h1M447,461.5h4M452,451.5h3M445,257.5h4M454,254.5h2M468,252.5h4M461,260.5h2M519,257.5h2M511,272.5h1M512,262.5h1M517,257.5h4M504,268.5h2M475,282.5h3M503,282.5h4M489,282.5h4M511,279.5h2M461,280.5h4M475,820.5h2M484,822.5h2M474,812.5h2M448,727.5h2M463,740.5h2M454,735.5h3M503,862.5h3M509,864.5h1M507,865.5h2M501,861.5h2M463,641.5h3M440,822.5h2M444,817.5h2M555,848.5h1M547,848.5h2M552,842.5h1M488,808.5h2M486,815.5h2M497,813.5h3M485,808.5h3M456,878.5h1M446,867.5h1M440,881.5h2M428,863.5h3M443,875.5h3M459,876.5h1M451,795.5h1M439,601.5h1M453,599.5h2M454,607.5h2M555,840.5h3M539,849.5h1M541,847.5h2M550,843.5h3M501,804.5h2M507,798.5h3M504,794.5h3M484,801.5h3M488,804.5h3M472,798.5h2M486,798.5h3M479,796.5h1M452,652.5h3M447,651.5h1M457,646.5h1M451,797.5h3M458,798.5h1M1106,294.5h1M1071,685.5h1M1085,547.5h1M1127,612.5h1M1153,269.5h1M1130,523.5h1M1135,211.5h1M1207,842.5h1M1167,709.5h1M1131,514.5h1M1078,740.5h1M1219,829.5h1M1167,565.5h1M1248,169.5h1M1112,768.5h1M1163,246.5h1M1148,751.5h1M1012,177.5h1" stroke="#c8d4c8" stroke-width="1" fill="none"/><path d="M1046,707.5h18l6,1.5h10" stroke="#35d93c" stroke-width="1.6" fill="none"/>
</svg>

<!-- canvas border highlights -->
<div class="a" style="left:233px;top:932px;width:1047px;height:1px;background:#fff"></div>
<div class="a" style="left:1278px;top:78px;width:2px;height:855px;background:#fff"></div>

<!-- Z wheel (right) -->
<div class="t" style="left:1263px;top:108px;font-size:11.5px">Z</div>
<div class="a" style="left:1258px;top:132px;width:16px;height:122px;background:#d4d0c8;border:1px solid #fff;border-left-color:#808080;border-top-color:#808080"></div>
<div class="a" style="left:1260px;top:139px;width:12px;height:110px;background:#101010"></div>
<div class="a" style="left:1262px;top:141px;width:9px;height:106px;background:repeating-linear-gradient(180deg,#d6d6d6 0,#d6d6d6 5.5px,#f8f8f8 5.5px,#f8f8f8 6.5px,#484848 6.5px,#484848 7.5px)"></div>
<div class="a" style="left:1262px;top:141px;width:9px;height:6px;background:repeating-linear-gradient(180deg,#303030 0,#303030 2px,#909090 2px,#909090 3px)"></div>
<div class="a" style="left:1262px;top:241px;width:9px;height:6px;background:repeating-linear-gradient(180deg,#303030 0,#303030 2px,#909090 2px,#909090 3px)"></div>

<!-- Zoom wheel (bottom) -->
<div class="t" style="left:246px;top:914px">Zoom</div>
<div class="a" style="left:289px;top:913px;width:120px;height:15px;background:#d4d0c8;border:1px solid #fff;border-left-color:#808080;border-top-color:#808080"></div>
<div class="a" style="left:294px;top:915px;width:112px;height:11px;background:#101010"></div>
<div class="a" style="left:296px;top:916px;width:108px;height:9px;background:repeating-linear-gradient(90deg,#dedede 0,#dedede 5.5px,#fbfbfb 5.5px,#fbfbfb 6.5px,#3c3c3c 6.5px,#3c3c3c 7.5px)"></div>
<div class="a" style="left:296px;top:916px;width:7px;height:9px;background:repeating-linear-gradient(90deg,#282828 0,#282828 2px,#909090 2px,#909090 3px)"></div>
<div class="a" style="left:397px;top:916px;width:7px;height:9px;background:repeating-linear-gradient(90deg,#282828 0,#282828 2px,#909090 2px,#909090 3px)"></div>

<!-- ===== left panel: slice views ===== -->
<div class="a" id="slice1" style="left:13px;top:394px;width:192px;height:164px;background:#000;overflow:hidden"><svg class="a" style="left:0;top:0" width="192" height="164" viewBox="0 0 192 164"><defs><filter id="sb1" filterUnits="userSpaceOnUse" x="0" y="0" width="192" height="192"><feGaussianBlur stdDeviation="0.6"/></filter></defs><g filter="url(#sb1)" fill="none" stroke-linecap="round"><path d="M35.2,3V40M35,80V128M156.6,3V40M156.4,80V128" stroke="#8c8f8c" stroke-width="2"/><path d="M48,24V38M51,46V78M144,29L138,74" stroke="#6e7a80" stroke-width="1.6"/><path d="M51,90V120M141,92V118" stroke="#2a3034" stroke-width="1.4"/><path d="M54.5,78.5L137.5,75" stroke="#6a7470" stroke-width="1.3"/><path d="M56,30Q58,50 64,63L70,69M136.5,29.5Q136,48 132.5,63L128,68" stroke="#46d64e" stroke-width="3.6"/><path d="M56.3,31Q58.4,50 64,62M136.2,31Q135.6,48 132.6,62" stroke="#e4f6e4" stroke-width="1.6"/><path d="M66,66L76,69H90M104,69L118,70L131,66" stroke="#bfe6c4" stroke-width="1.6"/><path d="M62,64l4,3M118,69l3,4M92,70l10,2" stroke="#46d64e" stroke-width="3"/><path d="M91,66Q92,59 97,61Q101,57 104,62Q110,63 108,67Q104,71 97,70Q92,71 91,66Z" fill="#7c80d0" stroke="none"/></g><path d="M96,43V93M72,68.8H120" stroke="#e02828" stroke-width="1.1"/><path d="M183,151l7,9M190,151l-7,9" stroke="#e8e85a" stroke-width="1"/></svg>
</div>
<div class="sb" style="left:13px;top:561px;width:192px"></div>
<div class="sbtn" style="left:13px;top:561px"><svg width="14" height="15" viewBox="0 0 14 15"><path d="M8.5 3.5 L4.5 7.5 L8.5 11.5" stroke="#4d6185" stroke-width="2" fill="none"/></svg></div>
<div class="sbtn" style="left:189px;top:561px"><svg width="14" height="15" viewBox="0 0 14 15"><path d="M5.5 3.5 L9.5 7.5 L5.5 11.5" stroke="#4d6185" stroke-width="2" fill="none"/></svg></div>
<div class="sbtn" style="left:101px;top:561px"><div class="a" style="left:4px;top:5px;width:7px;height:6px;background:repeating-linear-gradient(90deg,#8ea3d8 0,#8ea3d8 1px,#eef2fe 1px,#eef2fe 2px)"></div></div>
<div class="t" style="left:61px;top:579px;letter-spacing:-0.22px">Slider selects Y slice</div>

<div class="a" id="slice2" style="left:13px;top:600px;width:192px;height:192px;background:#000;overflow:hidden"><svg class="a" style="left:0;top:0" width="192" height="192" viewBox="0 0 192 192"><defs><filter id="sb2" filterUnits="userSpaceOnUse" x="0" y="0" width="192" height="192"><feGaussianBlur stdDeviation="0.7"/></filter></defs><g filter="url(#sb2)" fill="none" stroke-linecap="round"><path d="M37.5,134A58.5,58.5 0 0 0 154.7,134" stroke="#8e9291" stroke-width="2.6"/><path d="M96,50Q70,50 63,70Q58,90 60,105Q56,125 66,138Q80,156 97,156Q114,156 127,138Q138,122 134,104Q138,86 131,68Q122,50 96,50Z" stroke="#4fd858" stroke-width="6.5"/><path d="M96,50Q70,50 63,70Q58,90 60,105Q56,125 66,138Q80,156 97,156Q114,156 127,138Q138,122 134,104Q138,86 131,68Q122,50 96,50Z" stroke="#e6f8e8" stroke-width="3"/><path d="M61,92Q72,86 82,94L88,100M133,92Q122,88 113,94L106,100" stroke="#49d653" stroke-width="9"/><path d="M63,94Q72,90 80,96M131,94Q122,91 114,96M112,104L128,110M66,108L80,103" stroke="#dff3e0" stroke-width="3"/><path d="M91,52L88,72L84,80M101,52L106,72L110,80M78,62L84,74M118,62L110,74" stroke="#9fe0b0" stroke-width="2.2"/><path d="M97,60V76" stroke="#5aa0c8" stroke-width="2.5"/><path d="M55,88V108M138,90V106" stroke="#7f8a84" stroke-width="1.8"/><circle cx="88.5" cy="84" r="5" fill="#6f86c8" stroke="none"/><circle cx="109.5" cy="84" r="5" fill="#6f86c8" stroke="none"/><ellipse cx="99" cy="93.5" rx="7" ry="4" fill="#8a72c8" stroke="none"/><path d="M66,108Q70,100 96,100Q124,100 128,110Q132,128 120,142Q108,152 97,152L92,146L90,152Q76,148 70,136Q62,122 66,108Z" fill="#000" stroke="none"/></g><path d="M96.2,72V120M73,96.6H118" stroke="#e02828" stroke-width="1.1"/><path d="M2,5l3.2,4l3.2,-4M5.2,9v4" stroke="#e8e85a" stroke-width="1" fill="none"/><path d="M183,180l7,8M190,180l-7,8" stroke="#e8e85a" stroke-width="1"/></svg>
</div>
<div class="sb" style="left:13px;top:795px;width:192px"></div>
<div class="sbtn" style="left:13px;top:795px"><svg width="14" height="15" viewBox="0 0 14 15"><path d="M8.5 3.5 L4.5 7.5 L8.5 11.5" stroke="#4d6185" stroke-width="2" fill="none"/></svg></div>
<div class="sbtn" style="left:189px;top:795px"><svg width="14" height="15" viewBox="0 0 14 15"><path d="M5.5 3.5 L9.5 7.5 L5.5 11.5" stroke="#4d6185" stroke-width="2" fill="none"/></svg></div>
<div class="sbtn" style="left:101px;top:795px"><div class="a" style="left:4px;top:5px;width:7px;height:6px;background:repeating-linear-gradient(90deg,#8ea3d8 0,#8ea3d8 1px,#eef2fe 1px,#eef2fe 2px)"></div></div>
<div class="t" style="left:61px;top:813px;letter-spacing:-0.22px">Slider selects Z slice</div>

<!-- ===== Tracking Threshold window (behind) ===== -->
<div class="a ititle" style="left:0;top:46px;width:354px;height:29px;border-radius:6px 8px 0 0"></div>
<div class="a" style="left:3px;top:75px;width:347px;height:3px;background:#ece9d8"></div><div class="a" style="left:0;top:75px;width:3px;height:3px;background:#6d74d2"></div><div class="a" style="left:0;top:52px;width:1px;height:26px;background:#5a62c4"></div>
<div class="a" style="left:350px;top:75px;width:4px;height:3px;background:#7a97e0"></div>
<div class="ttl" style="left:7px;top:54px;letter-spacing:-0.02px">Tracking Threshold</div>
<div class="xbtn" style="left:328px;top:51px"><svg class="a" style="left:0;top:0" width="19" height="19" viewBox="0 0 19 19"><path d="M4.5 4.5 L14.5 14.5 M14.5 4.5 L4.5 14.5" stroke="#fff" stroke-width="2.3" fill="none"/></svg></div>

<!-- ===== Overlay Configuration dialog ===== -->
<div class="a" style="left:0;top:78px;width:442px;height:316px;background:#6d74d2;border-radius:0 8px 0 0"></div>
<div class="a ititle" style="left:0;top:78px;width:442px;height:29px;border-radius:0 8px 0 0"></div>
<div class="a" style="left:0;top:107px;width:439px;height:283px;background:#ece9d8"></div><div class="a" style="left:0;top:107px;width:439px;height:1px;background:#dfe6f4"></div>
<div class="a" style="left:0;top:390px;width:439px;height:1px;background:#dfe4f6"></div><div class="a" style="left:0;top:391px;width:442px;height:3px;background:#6d74d2"></div>
<div class="ttl" style="left:1px;top:86px;letter-spacing:-0.12px">Overlay Configuration</div>
<div class="xbtn" style="left:416px;top:83px"><svg class="a" style="left:0;top:0" width="19" height="19" viewBox="0 0 19 19"><path d="M4.5 4.5 L14.5 14.5 M14.5 4.5 L4.5 14.5" stroke="#fff" stroke-width="2.3" fill="none"/></svg></div>

<div class="grp" style="left:-10px;top:124px;width:439px;height:48px"></div>
<div class="t" style="left:0;top:119px;color:#0046d5;background:#ece9d8;padding-right:2px">al Distortion</div>
<div class="radio" style="left:-8px;top:142px"></div>
<div class="t" style="left:6px;top:142px">No radial distortion</div>
<div class="radio" style="left:126px;top:142px"></div>
<div class="t" style="left:141px;top:142px">Distort virtual image</div>
<div class="radio" style="left:264px;top:142px"><div class="a" style="left:3px;top:3px;width:5px;height:5px;border-radius:50%;background:radial-gradient(circle at 40% 40%,#56d64a,#1f9a1c)"></div></div>
<div class="t" style="left:279px;top:142px;letter-spacing:-0.08px">Un-distort video image</div>

<div class="grp" style="left:-10px;top:181px;width:439px;height:48px"></div>
<div class="t" style="left:0;top:176px;color:#0046d5;background:#ece9d8;padding-right:2px">mentation Technique</div>
<div class="radio" style="left:-8px;top:201px"></div>
<div class="t" style="left:6px;top:201px">Dissolve (additive)</div>
<div class="radio" style="left:126px;top:201px"></div>
<div class="t" style="left:141px;top:201px;letter-spacing:-0.1px">Blend (experimental)</div>
<div class="t" style="left:299px;top:201px;letter-spacing:-0.3px">Kappa1</div>
<div class="edit" style="left:345px;top:196px;width:65px;height:20px"></div>
<div class="t" style="left:350px;top:199px">0.000885</div>

<div class="t" style="left:97px;top:246px">X</div>
<div class="t" style="left:200px;top:246px">Y</div>
<div class="t" style="left:305px;top:246px">Z</div>
<div class="t" style="left:21px;top:266px;letter-spacing:0.25px">Offset</div>
<div class="edit" style="left:66px;top:261px;width:66px;height:20px"></div>
<div class="t" style="left:71px;top:265px">0</div>
<div class="spn" style="left:115px;top:263px"></div><div class="spn" style="left:115px;top:272px"></div>
<svg class="a" style="left:115px;top:263px" width="15" height="17" viewBox="0 0 15 17"><path d="M4.5 6 L7.5 3 L10.5 6 M4.5 11 L7.5 14 L10.5 11" stroke="#4d6185" stroke-width="1.8" fill="none"/></svg>
<div class="edit" style="left:171px;top:261px;width:66px;height:20px"></div>
<div class="t" style="left:176px;top:265px">0</div>
<div class="spn" style="left:220px;top:263px"></div><div class="spn" style="left:220px;top:272px"></div>
<svg class="a" style="left:220px;top:263px" width="15" height="17" viewBox="0 0 15 17"><path d="M4.5 6 L7.5 3 L10.5 6 M4.5 11 L7.5 14 L10.5 11" stroke="#4d6185" stroke-width="1.8" fill="none"/></svg>
<div class="edit" style="left:279px;top:261px;width:66px;height:20px"></div>
<div class="t" style="left:284px;top:265px">0</div>
<div class="spn" style="left:328px;top:263px"></div><div class="spn" style="left:328px;top:272px"></div>
<svg class="a" style="left:328px;top:263px" width="15" height="17" viewBox="0 0 15 17"><path d="M4.5 6 L7.5 3 L10.5 6 M4.5 11 L7.5 14 L10.5 11" stroke="#4d6185" stroke-width="1.8" fill="none"/></svg>

<div class="sb" style="left:0;top:299px;width:428px"></div>
<div class="sbtn" style="left:21px;top:299px"><div class="a" style="left:4px;top:5px;width:7px;height:6px;background:repeating-linear-gradient(90deg,#8ea3d8 0,#8ea3d8 1px,#eef2fe 1px,#eef2fe 2px)"></div></div>
<div class="sbtn" style="left:413px;top:299px"><svg width="14" height="15" viewBox="0 0 14 15"><path d="M5.5 3.5 L9.5 7.5 L5.5 11.5" stroke="#4d6185" stroke-width="2" fill="none"/></svg></div>
<div class="t" style="left:0;top:322px;letter-spacing:-0.25px">l Threshold</div>
<div class="sb" style="left:0;top:343px;width:428px"></div>
<div class="sbtn" style="left:-4px;top:343px"><div class="a" style="left:4px;top:5px;width:7px;height:6px;background:repeating-linear-gradient(90deg,#8ea3d8 0,#8ea3d8 1px,#eef2fe 1px,#eef2fe 2px)"></div></div>
<div class="sbtn" style="left:413px;top:343px"><svg width="14" height="15" viewBox="0 0 14 15"><path d="M5.5 3.5 L9.5 7.5 L5.5 11.5" stroke="#4d6185" stroke-width="2" fill="none"/></svg></div>
<div class="t" style="left:402px;top:367px">Video</div>

<!-- ===== bottom area ===== -->
<div class="a" style="left:0;top:953px;width:1262px;height:1px;background:#aca899"></div>
<div class="a" style="left:0;top:954px;width:1262px;height:1px;background:#fff"></div>
<div class="a" style="left:0;top:975px;width:1280px;height:1px;background:#aca899"></div>
<div class="a" style="left:0;top:976px;width:1280px;height:1px;background:#fff"></div>
<div class="t" style="left:2px;top:979px;letter-spacing:-0.3px">Ready</div>
<div class="t" style="left:1075px;top:979px;letter-spacing:-0.2px">Frame 1 of 1</div>
<div class="t" style="left:1221px;top:979px;letter-spacing:-1px">NUM</div>
<div class="a" style="left:1187px;top:978px;width:1px;height:15px;background:#c5c2b2"></div>
<div class="a" style="left:1188px;top:978px;width:1px;height:15px;background:#fff"></div>
<div class="a" style="left:1215px;top:978px;width:1px;height:15px;background:#c5c2b2"></div>
<div class="a" style="left:1216px;top:978px;width:1px;height:15px;background:#fff"></div>
<div class="a" style="left:1245px;top:978px;width:1px;height:15px;background:#c5c2b2"></div>
<div class="a" style="left:1246px;top:978px;width:1px;height:15px;background:#fff"></div>
<div class="a" style="left:1277px;top:978px;width:1px;height:15px;background:#c5c2b2"></div>


<!-- ===== taskbar ===== -->
<div class="a" style="left:0;top:994px;width:1280px;height:30px;background:linear-gradient(180deg,#3168d5 0%,#4993e6 6%,#2663e0 14%,#245edc 40%,#2560dd 75%,#1f53c4 92%,#1941a5 100%)"></div>
<div class="a" style="left:0;top:994px;width:97px;height:30px;border-radius:0 10px 10px 0;background:linear-gradient(180deg,#4f9e4c 0%,#57ae55 8%,#3f9c3e 20%,#3a9339 50%,#3b9a3a 80%,#2c7a2c 100%);box-shadow:1px 0 2px #1a3e9a"></div>
<svg class="a" style="left:11px;top:999px" width="19" height="19" viewBox="0 0 19 19">
 <path d="M3 3 Q6 1.5 8.5 3.5 L7.5 8.5 Q5 6.8 2 8 Z" fill="#e8542c"/>
 <path d="M9.8 3.8 Q12.5 5.5 15.8 3.8 L14.6 8.8 Q11.6 10.3 8.8 8.8 Z" fill="#7cc242"/>
 <path d="M1.8 9.3 Q4.8 8 7.2 9.8 L6.2 14.8 Q3.6 13 0.7 14.3 Z" fill="#4a8ae8"/>
 <path d="M8.5 10.2 Q11.4 11.8 14.3 10.2 L13.2 15.2 Q10.2 16.8 7.4 15.2 Z" fill="#f5c52c"/>
</svg>
<div class="a" style="left:34px;top:998px;font-size:18.5px;line-height:22px;font-weight:bold;font-style:italic;color:#fff;text-shadow:1px 1px 1px #234a20;letter-spacing:-0.3px">start</div>

<div class="a" style="left:108px;top:997px;width:157px;height:24px;border-radius:3px;background:linear-gradient(180deg,#5b9af8 0%,#3f84f4 12%,#3b80f2 80%,#326fe0 100%);box-shadow:inset 0 0 1px #1c46a0"></div>
<svg class="a" style="left:115px;top:1001px" width="17" height="15" viewBox="0 0 17 15"><path d="M1 3 Q1 1.5 2.5 1.5 L6 1.5 L7.5 3.5 L14.5 3.5 Q15.5 3.5 15.5 4.5 L15.5 12 Q15.5 13 14.5 13 L2 13 Q1 13 1 12 Z" fill="#f0c848" stroke="#9a7a18" stroke-width="0.8"/><path d="M2.2 6 L14.6 6 L14.6 12 L2.2 12 Z" fill="#fbe48c"/></svg>
<div class="t" style="left:136px;top:1002px;color:#fff;letter-spacing:-0.25px">3DViewTest</div>

<div class="a" style="left:267px;top:997px;width:158px;height:24px;border-radius:3px;background:linear-gradient(180deg,#183f94 0%,#1d4fb4 15%,#1e53ba 80%,#2158c2 100%);box-shadow:inset 1px 1px 1px #12307a"></div>
<svg class="a" style="left:276px;top:1002px" width="18" height="13" viewBox="0 0 18 13"><path d="M1 5 L5 1.5 L14 1.5 L17 5 L17 9 L13 11.5 L4 11.5 L1 9 Z" fill="#d8d8d8" stroke="#606060" stroke-width="0.7"/><path d="M1 5 L17 5 L17 9 L13 11.5 L4 11.5 L1 9 Z" fill="#8c8c8c"/><path d="M3 6.5 L15 6.5 L15 8 L3 8 Z" fill="#484848"/></svg>
<div class="t" style="left:296px;top:1002px;color:#fff;letter-spacing:-0.22px">Removable Disk (E:)</div>

<div class="a" style="left:427px;top:997px;width:158px;height:24px;border-radius:3px;background:linear-gradient(180deg,#5b9af8 0%,#3f84f4 12%,#3b80f2 80%,#326fe0 100%);box-shadow:inset 0 0 1px #1c46a0"></div>
<svg class="a" style="left:436px;top:1000px" width="15" height="17" viewBox="0 0 15 17"><rect x="3" y="0.5" width="8" height="8" fill="#e04a2a" stroke="#8a2a12" stroke-width="0.6"/><rect x="0.5" y="8" width="7" height="8" fill="#4aa44a" stroke="#1c5c1c" stroke-width="0.6"/><rect x="7.5" y="8" width="7" height="8" fill="#4a7ad8" stroke="#1c3c8c" stroke-width="0.6"/><path d="M5 2.5 V6.5 M5 2.5 L7 5 L9 2.5 V6.5" stroke="#ffe46a" stroke-width="1" fill="none"/><path d="M2.5 10 V14 M2.5 10 H5.5 M2.5 12 H4.5" stroke="#e8ffe8" stroke-width="1" fill="none"/><path d="M10 10 H12.5 L10 14 H12.8" stroke="#e8f0ff" stroke-width="1" fill="none"/></svg>
<div class="t" style="left:455px;top:1002px;color:#fff;letter-spacing:-0.03px">ARView - [labskull.arv]</div>

<!-- tray -->
<div class="a" style="left:1205px;top:994px;width:75px;height:30px;background:linear-gradient(180deg,#1a7fd6 0%,#2aa8f4 7%,#139ef0 16%,#0f95ea 50%,#1198ec 80%,#0d7fd0 100%);border-left:1px solid #123c9c"></div>
<svg class="a" style="left:1113px;top:1000px" width="17" height="20" viewBox="0 0 17 20"><path d="M3 15 L11 5" stroke="#303030" stroke-width="3.2" stroke-linecap="round"/><path d="M3.5 14.5 L10.5 5.5" stroke="#b8b8b8" stroke-width="1.6" stroke-linecap="round"/><circle cx="11.8" cy="4.2" r="2.6" fill="#c8ccd4" stroke="#404040" stroke-width="0.8"/><path d="M2 15 Q2 18.5 5 18.5 Q7 18.5 7 16.5" stroke="#202020" stroke-width="1" fill="none"/></svg>
<svg class="a" style="left:1133px;top:1001px" width="17" height="17" viewBox="0 0 17 17"><rect x="0.5" y="1.5" width="14" height="10" fill="#f4f4f4" stroke="#202020"/><rect x="0.5" y="1.5" width="14" height="2.5" fill="#2a3c8c"/><path d="M3 6.5 H8 M3 8.5 H7" stroke="#303030" stroke-width="1"/><path d="M7 13.5 L12 7" stroke="#202020" stroke-width="2.6" stroke-linecap="round"/><circle cx="12.3" cy="6.5" r="2" fill="#c8c8c8" stroke="#303030" stroke-width="0.7"/><path d="M6.5 14 Q6.5 16.3 8.5 16.3" stroke="#202020" stroke-width="0.9" fill="none"/></svg>
<svg class="a" style="left:1155px;top:1001px" width="15" height="17" viewBox="0 0 15 17"><path d="M0.8 0.8 H12.5 V12 H9 L10.5 15.5 L6 12 H0.8 Z" fill="#fffbe0" stroke="#202020" stroke-width="1.2"/><text x="6.7" y="10.3" font-family="Liberation Sans" font-weight="bold" font-size="10.5" text-anchor="middle" fill="#101010">?</text></svg>
<svg class="a" style="left:1179px;top:1000px" width="12" height="20" viewBox="0 0 12 20"><rect x="4.5" y="1.5" width="6" height="4" fill="none" stroke="#fff" stroke-width="1.1"/><rect x="1.5" y="4" width="6" height="4.5" fill="#245edc" stroke="#fff" stroke-width="1.1"/><path d="M2.5 13.5 H8.5 L5.5 17 Z" fill="#fff"/></svg>
<div class="a" style="left:1196px;top:999px;width:19px;height:19px;border-radius:50%;background:radial-gradient(circle at 40% 35%,#6fb6ff 0%,#2f7be8 55%,#1c55c4 100%);border:1px solid #c6e0ff;box-shadow:0 0 2px #0a2c88"></div>
<svg class="a" style="left:1196px;top:999px" width="19" height="19" viewBox="0 0 19 19"><path d="M11.5 5 L7 9.5 L11.5 14" stroke="#fff" stroke-width="2.2" fill="none" stroke-linecap="round" stroke-linejoin="round"/></svg>
<svg class="a" style="left:1217px;top:1000px" width="16" height="17" viewBox="0 0 16 17"><path d="M2 9 L12 7.5 L15 10 L15 13 L5 15.5 L2 12.5 Z" fill="#a8a8a0" stroke="#484848" stroke-width="0.7"/><path d="M2 9 L12 7.5 L15 10 L5 12 Z" fill="#d8d8d0"/><path d="M8 1.5 L12 1.5 L10.5 4 L13 4 L7.5 9 L8.5 5.5 L5.5 5.5 Z" fill="#2fc03a" stroke="#157a1c" stroke-width="0.6"/></svg>
<div class="t" style="left:1239px;top:1002px;color:#fff">13:47</div>


<!-- ===== small Removable Disk window ===== -->
<div class="a" style="left:19px;top:886px;width:123px;height:87px;border-radius:8px 8px 0 0;background:#0831d9"></div>
<div class="a" style="left:19px;top:886px;width:123px;height:30px;border-radius:8px 8px 0 0;background:linear-gradient(180deg,#0a56d8 0%,#3a8cf4 8%,#0a5fe8 22%,#0355dc 50%,#0558e6 80%,#0246c4 100%)"></div>
<div class="a" style="left:23px;top:916px;width:115px;height:53px;background:#ece9d8"></div>
<svg class="a" style="left:25px;top:896px" width="17" height="13" viewBox="0 0 18 13"><path d="M1 5 L5 1.5 L14 1.5 L17 5 L17 9 L13 11.5 L4 11.5 L1 9 Z" fill="#e0e0e0" stroke="#505050" stroke-width="0.7"/><path d="M1 5 L17 5 L17 9 L13 11.5 L4 11.5 L1 9 Z" fill="#8c8c8c"/><path d="M3 6.5 L15 6.5 L15 8 L3 8 Z" fill="#3a3a3a"/></svg>
<div class="ttl" style="left:44px;top:894px;color:#fff;text-shadow:1px 1px 0 #0a2a8c">R...</div>
<div class="a" style="left:69px;top:892px;width:21px;height:21px;border:1px solid #fff;border-radius:3px;background:linear-gradient(135deg,#4c82f4 0%,#2458e0 50%,#1a48c8 100%)"><div class="a" style="left:4px;top:12px;width:7px;height:3px;background:#fff"></div></div>
<div class="a" style="left:92px;top:892px;width:21px;height:21px;border:1px solid #fff;border-radius:3px;background:linear-gradient(135deg,#4c82f4 0%,#2458e0 50%,#1a48c8 100%)"><div class="a" style="left:4px;top:4px;width:11px;height:11px;border:1px solid #fff;border-top:3px solid #fff"></div></div>
<div class="a" style="left:115px;top:892px;width:21px;height:21px;border:1px solid #fff;border-radius:3px;background:linear-gradient(135deg,#f09878 0%,#dc4c28 45%,#c0341a 100%)"><svg class="a" style="left:0;top:0" width="19" height="19" viewBox="0 0 19 19"><path d="M4.5 4.5 L14.5 14.5 M14.5 4.5 L4.5 14.5" stroke="#fff" stroke-width="2.3" fill="none"/></svg></div>
<div class="a" style="left:98px;top:916px;width:40px;height:22px;background:#fdfdfd;border-left:1px solid #d8d5c5"></div>
<svg class="a" style="left:108px;top:917px" width="22" height="20" viewBox="0 0 19 19">
 <path d="M3 3 Q6 1.5 8.5 3.5 L7.5 8.5 Q5 6.8 2 8 Z" fill="#e8542c"/>
 <path d="M9.8 3.8 Q12.5 5.5 15.8 3.8 L14.6 8.8 Q11.6 10.3 8.8 8.8 Z" fill="#7cc242"/>
 <path d="M1.8 9.3 Q4.8 8 7.2 9.8 L6.2 14.8 Q3.6 13 0.7 14.3 Z" fill="#4a8ae8"/>
 <path d="M8.5 10.2 Q11.4 11.8 14.3 10.2 L13.2 15.2 Q10.2 16.8 7.4 15.2 Z" fill="#f5c52c"/>
</svg>
<div class="a" style="left:23px;top:938px;width:115px;height:1px;background:#d0cdbd"></div>
<div class="a" style="left:23px;top:939px;width:115px;height:1px;background:#fff"></div>
<div class="t" style="left:32px;top:920px">File</div>
<div class="t" style="left:64px;top:920px">Ec</div>
<div class="t" style="left:83px;top:915px;font-weight:bold;font-size:12px">&raquo;</div>
<div class="t" style="left:125px;top:939px;font-weight:bold;font-size:12px">&raquo;</div>
<div class="a" style="left:33px;top:948px;width:22px;height:22px;border-radius:50%;background:radial-gradient(circle at 40% 35%,#e4e4e0 0%,#c4c4c0 60%,#a8a8a4 100%);border:1px solid #b0b0a8"></div>
<svg class="a" style="left:33px;top:948px" width="22" height="22" viewBox="0 0 22 22"><path d="M16 11 H6.5 M10.5 6.5 L6 11 L10.5 15.5" stroke="#fff" stroke-width="2.4" fill="none" stroke-linecap="round" stroke-linejoin="round"/></svg>
<div class="t" style="left:59px;top:952px;color:#aca899">Back</div>
<svg class="a" style="left:91px;top:956px" width="7" height="5" viewBox="0 0 7 5"><path d="M1 1 H6 L3.5 4 Z" fill="#b8b5a5"/></svg>
<div class="a" style="left:23px;top:969px;width:115px;height:4px;background:#0831d9"></div>


</body>
</html>
